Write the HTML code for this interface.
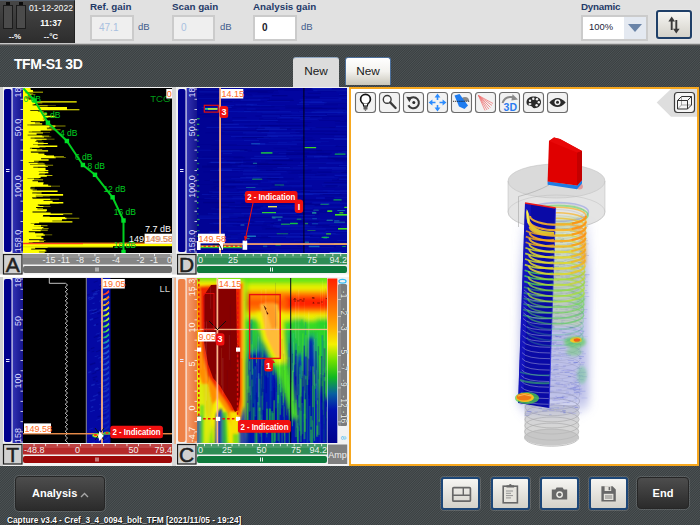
<!DOCTYPE html><html><head><meta charset="utf-8"><title>TFM-S1 3D</title><style>
*{box-sizing:border-box;margin:0;padding:0}
html,body{width:700px;height:525px;overflow:hidden;background:#464b4c;font-family:"Liberation Sans",sans-serif;}
.abs{position:absolute}
#root{position:relative;width:700px;height:525px;overflow:hidden;background:#454a4b}
.hatch{background:transparent}
#topbar{left:0;top:0;width:700px;height:43px;background:#e1e1e1}
#status{left:0;top:0;width:75px;height:43px;background:linear-gradient(#474747,#2d2d2d);border-top:1px solid #55606e;border-right:1px solid #222}
.lbl{position:absolute;font-weight:bold;font-size:9.8px;color:#1f3a68;white-space:nowrap;line-height:12px}
.inp{position:absolute;border:2px solid #cbcbcb;background:#efefef;font-size:10px;line-height:22px;color:#a8c0e0;padding-left:7px}
.db{position:absolute;font-size:9.5px;color:#3f5a8c;line-height:12px}
.tab{position:absolute;font-size:11.8px;color:#1a1a1a;text-align:center;border-radius:3px 3px 0 0;line-height:27px}
.btn{position:absolute;border:2px solid #1d4778;border-radius:3px;background:linear-gradient(#f6f5f2,#d4d2ca);box-shadow:0 0 0 1px rgba(255,255,255,.15)}
.dbtn{position:absolute;border:1px solid #262626;border-radius:4px;background:linear-gradient(#4d4d4d,#2b2b2b);color:#fff;font-weight:bold;font-size:11px;text-align:center;box-shadow:0 0 0 1px rgba(255,255,255,.12)}
.ic{position:absolute;width:20px;height:20px;top:92px;border:1px solid #6e6e6e;border-radius:3px;background:#f3f3f3}
.pl{position:absolute;width:19px;height:20px;border:1px solid #222;background:#d2d2d2;color:#222;font-size:19px;line-height:19px;text-align:center}
</style></head><body><div id="root">
<svg class="abs" style="left:0;top:0" width="700" height="525"><defs><pattern id="hp" width="7" height="7" patternUnits="userSpaceOnUse"><rect width="7" height="7" fill="#3b4042"/><path d="M0.000 -1L-9.000 8M2.333 -1L-6.667 8M4.667 -1L-4.333 8M7.000 -1L-2.000 8M9.333 -1L0.333 8M11.667 -1L2.667 8M14.000 -1L5.000 8M16.333 -1L7.333 8" stroke="#50575a" stroke-width="0.85" fill="none"/></pattern></defs><rect x="0" y="44" width="700" height="44" fill="url(#hp)"/><rect x="0" y="465" width="700" height="60" fill="url(#hp)"/></svg>
<div class="abs" id="topbar"></div>
<div class="abs" style="left:0;top:43px;width:700px;height:3px;background:linear-gradient(#f4f4f4,#8a8a8a 40%,#3a3d3e)"></div>
<div class="abs hatch" style="left:0;top:46px;width:700px;height:41px"></div>
<div class="abs" id="status">
<div class="abs" style="left:6px;top:1px;width:4px;height:3px;background:#0c0c0c"></div>
<div class="abs" style="left:3px;top:4px;width:10px;height:24px;background:#4b4b4b;border:1px solid #1c1c1c"></div>
<div class="abs" style="left:19px;top:1px;width:4px;height:3px;background:#0c0c0c"></div>
<div class="abs" style="left:16px;top:4px;width:10px;height:24px;background:#4b4b4b;border:1px solid #1c1c1c"></div>
<div class="abs" style="left:29px;top:2px;width:46px;font-size:8.6px;color:#fff;line-height:11px;white-space:nowrap">01-12-2022</div>
<div class="abs" style="left:29px;top:17px;width:44px;text-align:center;font-weight:bold;font-size:8.6px;color:#fff;line-height:11px">11:37</div>
<div class="abs" style="left:3px;top:31px;width:24px;text-align:center;font-weight:bold;font-size:8px;color:#fff;line-height:10px">--%</div>
<div class="abs" style="left:29px;top:31px;width:44px;text-align:center;font-weight:bold;font-size:8px;color:#fff;line-height:10px">--°C</div>
</div>
<div class="lbl" style="left:90px;top:1px">Ref. gain</div>
<div class="inp" style="left:90px;top:15px;width:44px;height:26px">47.1</div>
<div class="db" style="left:138px;top:21.2px">dB</div>
<div class="lbl" style="left:172px;top:1px">Scan gain</div>
<div class="inp" style="left:172px;top:15px;width:43px;height:26px">0</div>
<div class="db" style="left:220px;top:21.2px">dB</div>
<div class="lbl" style="left:253px;top:1px">Analysis gain</div>
<div class="inp" style="left:253px;top:15px;width:44px;height:26px;background:#fff;color:#1a1a2a;font-weight:bold">0</div>
<div class="db" style="left:301px;top:21.2px">dB</div>
<div class="lbl" style="left:581px;top:1px;letter-spacing:-0.25px">Dynamic</div>
<div class="abs" style="left:581px;top:15px;width:67px;height:26px;border:2px solid #cbcbcb;background:#fff"><div class="abs" style="left:6px;top:-0.8px;font-size:9.4px;line-height:22px;color:#23233a">100%</div><div class="abs" style="left:41px;top:0;width:22px;height:22px;background:#e4e9f1"></div><svg class="abs" style="left:45px;top:7px" width="14" height="8"><path d="M0 0H14L7 8Z" fill="#6a84a8"/></svg></div>
<div class="btn" style="left:656px;top:10px;width:36px;height:29px;border-width:2px;border-color:#1f3f68"><svg width="32" height="25" viewBox="0 0 32 25"><g fill="none" stroke="#3a3a3a" stroke-width="1.9"><path d="M13.7 18V8"/><path d="M18.3 8V18"/></g><path d="M10.4 9.4L13.7 4.6L17 9.4Z" fill="#3a3a3a"/><path d="M15 16.8L18.3 21.6L21.6 16.8Z" fill="#3a3a3a"/></svg></div>
<div class="abs" style="left:14px;top:56.4px;font-weight:bold;font-size:14px;color:#fff;line-height:16px;white-space:nowrap;letter-spacing:-0.45px">TFM-S1 3D</div>
<div class="tab" style="left:293px;top:57px;width:46px;height:30px;background:#dcdcdc;border-top:1px solid #8fa6c0">New</div>
<div class="tab" style="left:345px;top:57px;width:46px;height:28px;background:linear-gradient(#ffffff,#f3f2ee 50%,#c9c6ba);border:1px solid #4c6f9a;border-bottom:none">New</div>
<div class="abs" style="left:0;top:87px;width:350px;height:378px;background:#f4f4f4"></div>
<svg class="abs" style="left:0;top:87px" width="350" height="379" viewBox="0 87 350 379" font-family="Liberation Sans, sans-serif">
<defs>
<linearGradient id="gBlueR" x1="0" x2="1"><stop offset="0" stop-color="#3434b4"/><stop offset="1" stop-color="#14148c"/></linearGradient>
<linearGradient id="gOrR" x1="0" x2="1"><stop offset="0" stop-color="#f6a070"/><stop offset="1" stop-color="#e8763a"/></linearGradient>
<linearGradient id="gCbar" x1="0" x2="0" y1="0" y2="1"><stop offset="0" stop-color="#ff2000"/><stop offset=".16" stop-color="#ff6a00"/><stop offset=".3" stop-color="#ffb000"/><stop offset=".4" stop-color="#f4f000"/><stop offset=".5" stop-color="#70e000"/><stop offset=".6" stop-color="#10b820"/><stop offset=".7" stop-color="#0860a0"/><stop offset=".8" stop-color="#0010b0"/><stop offset="1" stop-color="#00008c"/></linearGradient>
<filter id="b1" x="-20%" y="-20%" width="140%" height="140%"><feGaussianBlur stdDeviation="1"/></filter>
<filter id="b2" x="-20%" y="-20%" width="140%" height="140%"><feGaussianBlur stdDeviation="2.2"/></filter>
<filter id="b3" x="-20%" y="-20%" width="140%" height="140%"><feGaussianBlur stdDeviation="4"/></filter>
<filter id="b05" x="-20%" y="-20%" width="140%" height="140%"><feGaussianBlur stdDeviation="0.5"/></filter>
<linearGradient id="gGB" x1="0" x2="0" y1="0" y2="1"><stop offset="0" stop-color="#30d428"/><stop offset=".12" stop-color="#20b858"/><stop offset=".3" stop-color="#0c58a8"/><stop offset=".45" stop-color="#0420b8"/><stop offset="1" stop-color="#0414b0"/></linearGradient>
<clipPath id="cA"><rect x="23" y="88" width="149" height="165"/></clipPath>
<clipPath id="cD"><rect x="197" y="88" width="150" height="165"/></clipPath>
<clipPath id="cT"><rect x="23" y="278" width="149" height="165"/></clipPath>
<clipPath id="cC"><rect x="197" y="278" width="130" height="165"/></clipPath>
</defs>
<rect x="0" y="87" width="350" height="379" fill="#f2f2f2"/>
<rect x="0" y="87" width="3" height="379" fill="#cfcfcf"/>
<rect x="172" y="87" width="4" height="379" fill="#d8d8d8"/>
<rect x="0" y="274.5" width="349" height="2.5" fill="#ffffff"/>
<rect x="23" y="88" width="149" height="165" fill="#000"/>
<rect x="4" y="89" width="7.5" height="163" rx="2" fill="#00008c"/>
<rect x="6" y="169.0" width="3.5" height="1" fill="#e8e8ff"/><rect x="6" y="171.0" width="3.5" height="1" fill="#e8e8ff"/>
<rect x="12" y="88" width="11" height="165" fill="url(#gBlueR)"/>
<rect x="12" y="88" width="1" height="165" fill="#ffffff" opacity=".55"/>
<text transform="translate(20.5,92.5) rotate(-90)" text-anchor="middle" font-size="9" fill="#dcdcff" >18</text>
<text transform="translate(20.5,127.5) rotate(-90)" text-anchor="middle" font-size="9" fill="#dcdcff" >50.0</text>
<text transform="translate(20.5,186.5) rotate(-90)" text-anchor="middle" font-size="9" fill="#dcdcff" >100.0</text>
<text transform="translate(20.5,241) rotate(-90)" text-anchor="middle" font-size="9" fill="#dcdcff" >158.0</text>
<rect x="20.5" y="88.6" width="2.5" height="0.9" fill="#fff" opacity=".8"/>
<rect x="20.5" y="98.8" width="2.5" height="0.9" fill="#fff" opacity=".8"/>
<rect x="20.5" y="109.0" width="2.5" height="0.9" fill="#fff" opacity=".8"/>
<rect x="20.5" y="119.2" width="2.5" height="0.9" fill="#fff" opacity=".8"/>
<rect x="20.5" y="129.3" width="2.5" height="0.9" fill="#fff" opacity=".8"/>
<rect x="20.5" y="139.5" width="2.5" height="0.9" fill="#fff" opacity=".8"/>
<rect x="20.5" y="149.7" width="2.5" height="0.9" fill="#fff" opacity=".8"/>
<rect x="20.5" y="159.9" width="2.5" height="0.9" fill="#fff" opacity=".8"/>
<rect x="20.5" y="170.1" width="2.5" height="0.9" fill="#fff" opacity=".8"/>
<rect x="20.5" y="180.3" width="2.5" height="0.9" fill="#fff" opacity=".8"/>
<rect x="20.5" y="190.5" width="2.5" height="0.9" fill="#fff" opacity=".8"/>
<rect x="20.5" y="200.7" width="2.5" height="0.9" fill="#fff" opacity=".8"/>
<rect x="20.5" y="210.8" width="2.5" height="0.9" fill="#fff" opacity=".8"/>
<rect x="20.5" y="221.0" width="2.5" height="0.9" fill="#fff" opacity=".8"/>
<rect x="20.5" y="231.2" width="2.5" height="0.9" fill="#fff" opacity=".8"/>
<rect x="20.5" y="241.4" width="2.5" height="0.9" fill="#fff" opacity=".8"/>
<rect x="20.5" y="251.6" width="2.5" height="0.9" fill="#fff" opacity=".8"/>
<rect x="23" y="254" width="149" height="10.5" fill="#858585"/>
<rect x="23" y="254" width="149" height="4" fill="#fff" opacity=".12"/>
<text x="55.5" y="263.3" font-size="9" fill="#f0f0f0" text-anchor="end">-15</text>
<text x="70" y="263.3" font-size="9" fill="#f0f0f0" text-anchor="end">-11</text>
<text x="84" y="263.3" font-size="9" fill="#f0f0f0" text-anchor="end">-8</text>
<text x="100" y="263.3" font-size="9" fill="#f0f0f0" text-anchor="end">-6</text>
<text x="120" y="263.3" font-size="9" fill="#f0f0f0" text-anchor="end">-4</text>
<text x="144.5" y="263.3" font-size="9" fill="#f0f0f0" text-anchor="end">-2</text>
<text x="158" y="263.3" font-size="9" fill="#f0f0f0" text-anchor="end">-1</text>
<text x="172" y="263.3" font-size="9" fill="#f0f0f0" text-anchor="end">0</text>
<rect x="47.5" y="254" width="0.9" height="2.2" fill="#fff" opacity=".85"/>
<rect x="62.5" y="254" width="0.9" height="2.2" fill="#fff" opacity=".85"/>
<rect x="78.5" y="254" width="0.9" height="2.2" fill="#fff" opacity=".85"/>
<rect x="94.5" y="254" width="0.9" height="2.2" fill="#fff" opacity=".85"/>
<rect x="114.5" y="254" width="0.9" height="2.2" fill="#fff" opacity=".85"/>
<rect x="139.1" y="254" width="0.9" height="2.2" fill="#fff" opacity=".85"/>
<rect x="154.1" y="254" width="0.9" height="2.2" fill="#fff" opacity=".85"/>
<rect x="170.6" y="254" width="0.9" height="2.2" fill="#fff" opacity=".85"/>
<rect x="23" y="266" width="149" height="7" rx="2" fill="#6c6c6c"/>
<rect x="95.5" y="267.5" width="1" height="4" fill="#eee"/><rect x="97.5" y="267.5" width="1" height="4" fill="#eee"/>
<rect x="3.5" y="254.5" width="18.5" height="19.5" fill="#d0d0d0" stroke="#1c1c1c" stroke-width="1.2"/>
<text x="12.7" y="271.5" font-size="21" fill="#202020" stroke="#202020" stroke-width=".5" text-anchor="middle">A</text>
<g clip-path="url(#cA)"><path d="M23 93.3h10.2v0.8h-10.2zM23 94.2h12.4v0.8h-12.4zM23 95.2h7.8v1.1h-7.8zM23 98.6h9.2v1.1h-9.2zM23 102.4h19.3v1.1h-19.3zM23 105.4h32.9v0.6h-32.9zM23 111.1h20.6v0.8h-20.6zM23 116.8h33.5v0.6h-33.5zM23 122.0h16.9v1.1h-16.9zM23 124.3h7.4v1.1h-7.4zM23 125.6h42.5v0.8h-42.5zM23 127.2h31.7v1.0h-31.7zM23 128.4h32.2v0.7h-32.2zM23 129.2h37.5v1.0h-37.5zM23 131.3h9.1v0.9h-9.1zM23 132.4h27.0v0.7h-27.0zM23 135.6h26.2v0.8h-26.2zM23 136.6h28.3v0.7h-28.3zM23 137.4h11.6v1.1h-11.6zM23 138.7h31.5v0.7h-31.5zM23 139.5h18.8v1.0h-18.8zM23 141.8h20.6v1.0h-20.6zM23 144.6h20.5v0.7h-20.5zM23 146.7h22.6v0.7h-22.6zM23 149.1h19.2v0.9h-19.2zM23 152.7h21.3v0.9h-21.3zM23 155.1h31.0v0.8h-31.0zM23 156.0h40.9v1.0h-40.9zM23 157.3h42.8v0.6h-42.8zM23 160.6h15.7v1.1h-15.7zM23 162.8h20.3v0.5h-20.3zM23 164.8h30.1v0.9h-30.1zM23 166.6h14.9v0.9h-14.9zM23 171.1h21.7v0.8h-21.7zM23 173.0h22.4v0.8h-22.4zM23 174.0h21.8v0.8h-21.8zM23 178.6h15.8v0.7h-15.8zM23 185.8h37.0v0.6h-37.0zM23 186.6h11.9v0.6h-11.9zM23 188.6h11.6v0.7h-11.6zM23 189.5h14.0v0.9h-14.0zM23 193.4h13.5v0.6h-13.5zM23 196.4h26.8v0.5h-26.8zM23 197.0h13.4v0.8h-13.4zM23 198.7h36.1v1.0h-36.1zM23 203.2h35.7v0.9h-35.7zM23 206.1h27.5v0.6h-27.5zM23 208.0h20.0v1.1h-20.0zM23 216.3h26.7v0.7h-26.7zM23 217.7h56.3v1.1h-56.3zM23 220.3h38.6v0.8h-38.6zM23 223.1h11.6v0.8h-11.6zM23 225.1h24.5v1.1h-24.5zM23 226.4h15.2v0.6h-15.2zM23 228.0h25.6v0.9h-25.6zM23 229.0h13.7v0.6h-13.7zM23 234.4h29.2v0.9h-29.2zM23 235.5h18.6v0.7h-18.6zM23 240.2h22.5v0.8h-22.5zM23 241.8h9.1v0.7h-9.1zM23 243.4h17.0v0.6h-17.0zM23 244.1h32.3v1.1h-32.3zM23 248.3h12.3v0.8h-12.3zM23 251.2h21.9v0.8h-21.9zM23 252.9h9.2v0.5h-9.2z" fill="#8c8c00"/><path d="M23 88.0h7.5v1.5h-7.5zM23 89.3h7.8v0.9h-7.8zM23 90.0h9.9v0.8h-9.9zM23 90.7h10.1v1.3h-10.1zM23 91.8h20.0v0.8h-20.0zM23 92.5h2.4v0.9h-2.4zM23 93.3h6.5v1.1h-6.5zM23 94.2h8.3v1.1h-8.3zM23 95.2h4.6v1.6h-4.6zM23 96.6h9.0v1.0h-9.0zM23 97.4h2.5v1.4h-2.5zM23 98.6h5.7v1.6h-5.7zM23 99.9h10.5v1.5h-10.5zM23 101.2h53.7v1.4h-53.7zM23 102.4h13.8v1.6h-13.8zM23 103.7h11.5v0.8h-11.5zM23 104.4h9.6v1.2h-9.6zM23 105.4h24.7v0.8h-24.7zM23 106.1h16.2v0.9h-16.2zM23 106.9h44.0v1.5h-44.0zM23 108.1h44.0v1.3h-44.0zM23 109.2h56.4v1.0h-56.4zM23 110.1h7.3v1.2h-7.3zM23 111.1h14.9v1.1h-14.9zM23 112.0h20.4v1.5h-20.4zM23 113.3h24.0v1.4h-24.0zM23 114.5h20.2v1.5h-20.2zM23 115.8h31.8v1.1h-31.8zM23 116.8h25.2v0.9h-25.2zM23 117.5h22.1v1.2h-22.1zM23 118.6h19.8v0.8h-19.8zM23 119.2h22.7v1.3h-22.7zM23 120.3h21.1v0.9h-21.1zM23 121.1h7.8v1.0h-7.8zM23 122.0h11.9v1.5h-11.9zM23 123.3h19.2v1.2h-19.2zM23 124.3h4.3v1.5h-4.3zM23 125.6h32.4v1.1h-32.4zM23 126.6h26.0v0.8h-26.0zM23 127.2h23.8v1.4h-23.8zM23 128.4h24.1v1.0h-24.1zM23 129.2h28.4v1.4h-28.4zM23 130.4h17.7v1.0h-17.7zM23 131.3h5.7v1.3h-5.7zM23 132.4h20.0v1.0h-20.0zM23 133.3h13.6v1.5h-13.6zM23 134.5h4.6v1.2h-4.6zM23 135.6h19.3v1.1h-19.3zM23 136.6h21.0v1.0h-21.0zM23 137.4h7.6v1.5h-7.6zM23 138.7h23.6v1.0h-23.6zM23 139.5h13.4v1.4h-13.4zM23 140.7h12.4v1.2h-12.4zM23 141.8h14.9v1.5h-14.9zM23 143.0h24.9v0.9h-24.9zM23 143.8h10.0v0.9h-10.0zM23 144.6h14.8v1.0h-14.8zM23 145.4h34.3v1.5h-34.3zM23 146.7h16.5v1.0h-16.5zM23 147.5h6.9v1.1h-6.9zM23 148.4h9.1v0.8h-9.1zM23 149.1h13.8v1.3h-13.8zM23 150.2h25.1v1.3h-25.1zM23 151.3h7.8v0.7h-7.8zM23 151.9h7.9v0.9h-7.9zM23 152.7h15.4v1.3h-15.4zM23 153.8h21.4v1.5h-21.4zM23 155.1h23.2v1.1h-23.2zM23 156.0h31.2v1.5h-31.2zM23 157.3h32.7v0.9h-32.7zM23 158.1h18.1v1.3h-18.1zM23 159.2h25.6v1.6h-25.6zM23 160.6h11.0v1.5h-11.0zM23 161.8h5.7v1.1h-5.7zM23 162.8h14.7v0.7h-14.7zM23 163.4h21.6v0.9h-21.6zM23 164.1h7.0v0.8h-7.0zM23 164.8h22.5v1.3h-22.5zM23 165.9h24.9v0.8h-24.9zM23 166.6h10.3v1.4h-10.3zM23 167.8h22.5v1.2h-22.5zM23 168.8h22.6v1.5h-22.6zM23 170.1h25.3v1.2h-25.3zM23 171.1h15.7v1.2h-15.7zM23 172.0h25.3v1.2h-25.3zM23 173.0h16.3v1.1h-16.3zM23 174.0h15.8v1.1h-15.8zM23 174.9h29.4v0.8h-29.4zM23 175.6h23.8v1.1h-23.8zM23 176.6h17.6v1.5h-17.6zM23 177.9h4.4v0.9h-4.4zM23 178.6h11.0v1.0h-11.0zM23 179.5h20.1v0.8h-20.1zM23 180.2h9.5v1.2h-9.5zM23 181.2h15.0v1.2h-15.0zM23 182.2h20.6v1.3h-20.6zM23 183.3h20.1v1.5h-20.1zM23 184.5h25.2v1.5h-25.2zM23 185.8h28.0v0.9h-28.0zM23 186.6h7.9v0.9h-7.9zM23 187.3h7.0v1.4h-7.0zM23 188.6h7.7v1.1h-7.7zM23 189.5h9.6v1.3h-9.6zM23 190.6h34.6v1.4h-34.6zM23 191.8h9.3v0.8h-9.3zM23 192.4h18.6v1.2h-18.6zM23 193.4h9.2v0.9h-9.2zM23 194.1h40.1v1.6h-40.1zM23 195.5h12.8v1.1h-12.8zM23 196.4h19.8v0.7h-19.8zM23 197.0h9.1v1.1h-9.1zM23 198.0h9.5v0.8h-9.5zM23 198.7h27.3v1.4h-27.3zM23 199.9h20.5v1.1h-20.5zM23 200.8h29.6v1.4h-29.6zM23 202.0h40.3v1.4h-40.3zM23 203.2h26.9v1.3h-26.9zM23 204.4h14.8v1.4h-14.8zM23 205.5h16.5v0.7h-16.5zM23 206.1h20.4v0.9h-20.4zM23 206.9h13.1v1.3h-13.1zM23 208.0h14.4v1.6h-14.4zM23 209.3h23.9v1.6h-23.9zM23 210.7h23.3v0.9h-23.3zM23 211.5h9.5v1.0h-9.5zM23 212.4h27.6v1.2h-27.6zM23 213.4h49.3v0.8h-49.3zM23 214.0h40.2v1.1h-40.2zM23 215.0h20.1v1.6h-20.1zM23 216.3h19.7v1.0h-19.7zM23 217.1h42.1v0.7h-42.1zM23 217.7h43.5v1.5h-43.5zM23 219.0h39.0v1.5h-39.0zM23 220.3h29.3v1.2h-29.3zM23 221.3h49.4v1.2h-49.4zM23 222.3h16.1v0.9h-16.1zM23 223.1h7.7v1.1h-7.7zM23 224.0h11.2v1.2h-11.2zM23 225.1h18.0v1.6h-18.0zM23 226.4h10.6v0.8h-10.6zM23 227.1h20.4v1.0h-20.4zM23 228.0h18.9v1.2h-18.9zM23 229.0h9.3v0.9h-9.3zM23 229.8h24.8v0.8h-24.8zM23 230.5h17.7v0.8h-17.7zM23 231.1h5.8v1.3h-5.8zM23 232.2h12.1v1.1h-12.1zM23 233.2h20.4v1.5h-20.4zM23 234.4h21.8v1.3h-21.8zM23 235.5h13.3v0.9h-13.3zM23 236.3h18.3v1.6h-18.3zM23 237.7h20.4v1.5h-20.4zM23 239.0h6.0v1.5h-6.0zM23 240.2h16.4v1.1h-16.4zM23 241.2h21.0v0.8h-21.0zM23 241.8h5.7v1.0h-5.7zM23 242.7h10.2v0.8h-10.2zM23 243.4h12.0v0.8h-12.0zM23 244.1h24.2v1.5h-24.2zM23 245.4h21.6v1.0h-21.6zM23 246.2h24.6v1.5h-24.6zM23 247.5h12.0v1.0h-12.0zM23 248.3h8.2v1.2h-8.2zM23 249.4h22.4v1.2h-22.4zM23 250.4h23.4v1.0h-23.4zM23 251.2h15.9v1.2h-15.9zM23 252.2h21.7v0.8h-21.7zM23 252.9h5.8v0.8h-5.8z" fill="#ffff00"/><rect x="23" y="100" width="2" height="150" fill="#ffff00" opacity=".8"/><rect x="23" y="244" width="149" height="2.2" fill="#ffff00"/><rect x="23" y="246" width="90" height="1.5" fill="#e8e800"/><rect x="23" y="242.6" width="149" height="1.3" fill="#ff8a1e"/><rect x="23" y="243.2" width="60" height="1" fill="#ff3020"/><polyline points="23.4,88.4 34.5,100.5 47.9,122.7 66.9,141 82.9,165 95,174.8 112.6,197.3 123.5,220.5 123.5,252" fill="none" stroke="#00d020" stroke-width="2" stroke-linejoin="round"/><rect x="32.3" y="98.3" width="4.4" height="4.4" fill="#00e028"/><rect x="45.699999999999996" y="120.5" width="4.4" height="4.4" fill="#00e028"/><rect x="64.7" y="138.8" width="4.4" height="4.4" fill="#00e028"/><rect x="80.7" y="162.8" width="4.4" height="4.4" fill="#00e028"/><rect x="92.8" y="172.60000000000002" width="4.4" height="4.4" fill="#00e028"/><rect x="110.39999999999999" y="195.10000000000002" width="4.4" height="4.4" fill="#00e028"/><rect x="121.3" y="218.3" width="4.4" height="4.4" fill="#00e028"/><rect x="121.3" y="249.8" width="4.4" height="4.4" fill="#00e028"/><text x="23.5" y="102" font-size="8.5" fill="#00d020">0 dB</text><text x="43" y="117.5" font-size="8.5" fill="#00d020">2 dB</text><text x="60" y="135.7" font-size="8.5" fill="#00d020">4 dB</text><text x="75" y="160" font-size="8.5" fill="#00d020">6 dB</text><text x="87.4" y="169" font-size="8.5" fill="#00d020">8 dB</text><text x="103.4" y="192" font-size="8.5" fill="#00d020">12 dB</text><text x="113.7" y="214.7" font-size="8.5" fill="#00d020">16 dB</text><text x="113.7" y="248" font-size="8.5" fill="#00d020">16 dB</text><text x="150.3" y="102.3" font-size="9.5" fill="#009a18">TCG</text><rect x="166.3" y="89" width="6" height="9.5" fill="#fff"/><text x="166.8" y="97" font-size="9" fill="#ff6a20">0</text><text x="171" y="231.5" font-size="9" fill="#fff" text-anchor="end">7.7 dB</text><text x="129" y="242" font-size="9" fill="#fff">149.</text><rect x="144.6" y="233.7" width="27.4" height="10" fill="#fff"/><text x="145.3" y="242" font-size="9" fill="#ff7a30">149.58</text><text x="146.2" y="242" font-size="9" fill="#999" opacity=".6">149.58</text></g>
<rect x="197" y="88" width="150" height="165" fill="#0205a0"/>
<rect x="178" y="89" width="7.5" height="163" rx="2" fill="#00008c"/>
<rect x="180" y="169.0" width="3.5" height="1" fill="#e8e8ff"/><rect x="180" y="171.0" width="3.5" height="1" fill="#e8e8ff"/>
<rect x="186" y="88" width="11" height="165" fill="url(#gBlueR)"/>
<rect x="186" y="88" width="1" height="165" fill="#ffffff" opacity=".55"/>
<text transform="translate(194.5,92.5) rotate(-90)" text-anchor="middle" font-size="9" fill="#dcdcff" >18</text>
<text transform="translate(194.5,127.5) rotate(-90)" text-anchor="middle" font-size="9" fill="#dcdcff" >50.0</text>
<text transform="translate(194.5,186.5) rotate(-90)" text-anchor="middle" font-size="9" fill="#dcdcff" >100.0</text>
<text transform="translate(194.5,241) rotate(-90)" text-anchor="middle" font-size="9" fill="#dcdcff" >158.0</text>
<rect x="194.5" y="88.6" width="2.5" height="0.9" fill="#fff" opacity=".8"/>
<rect x="194.5" y="98.8" width="2.5" height="0.9" fill="#fff" opacity=".8"/>
<rect x="194.5" y="109.0" width="2.5" height="0.9" fill="#fff" opacity=".8"/>
<rect x="194.5" y="119.2" width="2.5" height="0.9" fill="#fff" opacity=".8"/>
<rect x="194.5" y="129.3" width="2.5" height="0.9" fill="#fff" opacity=".8"/>
<rect x="194.5" y="139.5" width="2.5" height="0.9" fill="#fff" opacity=".8"/>
<rect x="194.5" y="149.7" width="2.5" height="0.9" fill="#fff" opacity=".8"/>
<rect x="194.5" y="159.9" width="2.5" height="0.9" fill="#fff" opacity=".8"/>
<rect x="194.5" y="170.1" width="2.5" height="0.9" fill="#fff" opacity=".8"/>
<rect x="194.5" y="180.3" width="2.5" height="0.9" fill="#fff" opacity=".8"/>
<rect x="194.5" y="190.5" width="2.5" height="0.9" fill="#fff" opacity=".8"/>
<rect x="194.5" y="200.7" width="2.5" height="0.9" fill="#fff" opacity=".8"/>
<rect x="194.5" y="210.8" width="2.5" height="0.9" fill="#fff" opacity=".8"/>
<rect x="194.5" y="221.0" width="2.5" height="0.9" fill="#fff" opacity=".8"/>
<rect x="194.5" y="231.2" width="2.5" height="0.9" fill="#fff" opacity=".8"/>
<rect x="194.5" y="241.4" width="2.5" height="0.9" fill="#fff" opacity=".8"/>
<rect x="194.5" y="251.6" width="2.5" height="0.9" fill="#fff" opacity=".8"/>
<rect x="197" y="254" width="150" height="10.5" fill="#2f8d55"/>
<rect x="197" y="254" width="150" height="4" fill="#fff" opacity=".12"/>
<text x="198" y="263.3" font-size="9" fill="#f0f0f0" text-anchor="start">0</text>
<text x="238" y="263.3" font-size="9" fill="#f0f0f0" text-anchor="end">25</text>
<text x="277" y="263.3" font-size="9" fill="#f0f0f0" text-anchor="end">50</text>
<text x="317" y="263.3" font-size="9" fill="#f0f0f0" text-anchor="end">75</text>
<text x="347" y="263.3" font-size="9" fill="#f0f0f0" text-anchor="end">94.2</text>
<rect x="197.1" y="254" width="0.9" height="2.2" fill="#fff" opacity=".85"/>
<rect x="205.0" y="254" width="0.9" height="2.2" fill="#fff" opacity=".85"/>
<rect x="213.0" y="254" width="0.9" height="2.2" fill="#fff" opacity=".85"/>
<rect x="220.9" y="254" width="0.9" height="2.2" fill="#fff" opacity=".85"/>
<rect x="228.9" y="254" width="0.9" height="2.2" fill="#fff" opacity=".85"/>
<rect x="236.9" y="254" width="0.9" height="2.2" fill="#fff" opacity=".85"/>
<rect x="244.8" y="254" width="0.9" height="2.2" fill="#fff" opacity=".85"/>
<rect x="252.8" y="254" width="0.9" height="2.2" fill="#fff" opacity=".85"/>
<rect x="260.7" y="254" width="0.9" height="2.2" fill="#fff" opacity=".85"/>
<rect x="268.7" y="254" width="0.9" height="2.2" fill="#fff" opacity=".85"/>
<rect x="276.7" y="254" width="0.9" height="2.2" fill="#fff" opacity=".85"/>
<rect x="284.6" y="254" width="0.9" height="2.2" fill="#fff" opacity=".85"/>
<rect x="292.6" y="254" width="0.9" height="2.2" fill="#fff" opacity=".85"/>
<rect x="300.5" y="254" width="0.9" height="2.2" fill="#fff" opacity=".85"/>
<rect x="308.5" y="254" width="0.9" height="2.2" fill="#fff" opacity=".85"/>
<rect x="316.4" y="254" width="0.9" height="2.2" fill="#fff" opacity=".85"/>
<rect x="324.4" y="254" width="0.9" height="2.2" fill="#fff" opacity=".85"/>
<rect x="332.4" y="254" width="0.9" height="2.2" fill="#fff" opacity=".85"/>
<rect x="340.3" y="254" width="0.9" height="2.2" fill="#fff" opacity=".85"/>
<rect x="197" y="266" width="150" height="7" rx="2" fill="#0e7a3c"/>
<rect x="270.0" y="267.5" width="1" height="4" fill="#eee"/><rect x="272.0" y="267.5" width="1" height="4" fill="#eee"/>
<rect x="177.5" y="254.5" width="18.5" height="19.5" fill="#d0d0d0" stroke="#1c1c1c" stroke-width="1.2"/>
<text x="186.7" y="271.5" font-size="21" fill="#202020" stroke="#202020" stroke-width=".5" text-anchor="middle">D</text>
<g clip-path="url(#cD)"><rect x="197" y="88" width="23" height="165" fill="#010394"/><rect x="290.4" y="210.4" width="39.8" height="1.3" fill="#00008c" opacity="0.53"/><rect x="276.5" y="226.7" width="39.0" height="0.7" fill="#0a1cbc" opacity="0.62"/><rect x="214.0" y="165.4" width="17.9" height="1.0" fill="#01018a" opacity="0.39"/><rect x="306.7" y="155.3" width="15.3" height="1.3" fill="#0818b4" opacity="0.36"/><rect x="316.6" y="110.9" width="32.7" height="0.6" fill="#0a1cbc" opacity="0.64"/><rect x="197.8" y="215.6" width="46.4" height="0.6" fill="#1028c4" opacity="0.40"/><rect x="341.2" y="177.0" width="35.1" height="0.7" fill="#00008c" opacity="0.37"/><rect x="341.8" y="151.2" width="8.9" height="0.9" fill="#1028c4" opacity="0.39"/><rect x="246.8" y="222.9" width="31.4" height="1.0" fill="#00008c" opacity="0.42"/><rect x="243.5" y="223.1" width="27.2" height="0.8" fill="#0818b4" opacity="0.47"/><rect x="223.4" y="130.3" width="45.6" height="1.4" fill="#000084" opacity="0.60"/><rect x="199.7" y="218.0" width="22.6" height="1.0" fill="#0a1cbc" opacity="0.46"/><rect x="303.2" y="190.9" width="46.2" height="0.6" fill="#1028c4" opacity="0.63"/><rect x="338.3" y="144.8" width="22.2" height="1.0" fill="#0818b4" opacity="0.34"/><rect x="309.3" y="219.5" width="42.4" height="0.5" fill="#0a1cbc" opacity="0.37"/><rect x="273.9" y="147.8" width="13.9" height="0.7" fill="#00008c" opacity="0.49"/><rect x="243.9" y="140.3" width="15.1" height="0.6" fill="#1028c4" opacity="0.55"/><rect x="243.4" y="167.8" width="36.8" height="0.6" fill="#01018a" opacity="0.49"/><rect x="257.9" y="127.2" width="31.8" height="1.2" fill="#0818b4" opacity="0.53"/><rect x="218.8" y="249.5" width="33.5" height="1.2" fill="#000084" opacity="0.59"/><rect x="216.6" y="208.7" width="46.0" height="1.1" fill="#0818b4" opacity="0.34"/><rect x="262.2" y="112.6" width="41.8" height="0.8" fill="#0818b4" opacity="0.62"/><rect x="290.1" y="115.9" width="28.9" height="1.4" fill="#00008c" opacity="0.56"/><rect x="268.9" y="136.0" width="24.2" height="0.6" fill="#0818b4" opacity="0.59"/><rect x="276.8" y="117.6" width="45.5" height="1.3" fill="#1028c4" opacity="0.33"/><rect x="237.8" y="217.0" width="42.7" height="0.8" fill="#000084" opacity="0.54"/><rect x="296.6" y="213.3" width="22.5" height="1.1" fill="#000084" opacity="0.59"/><rect x="236.7" y="249.9" width="36.6" height="1.4" fill="#000084" opacity="0.53"/><rect x="284.1" y="89.9" width="29.9" height="0.7" fill="#00008c" opacity="0.40"/><rect x="240.3" y="170.6" width="34.9" height="0.8" fill="#000084" opacity="0.53"/><rect x="307.7" y="224.7" width="22.0" height="1.3" fill="#00008c" opacity="0.46"/><rect x="251.6" y="143.2" width="13.7" height="1.4" fill="#1028c4" opacity="0.59"/><rect x="337.6" y="166.7" width="35.7" height="1.1" fill="#00008c" opacity="0.45"/><rect x="289.5" y="242.5" width="28.7" height="1.3" fill="#000084" opacity="0.52"/><rect x="313.2" y="193.1" width="36.8" height="0.5" fill="#1028c4" opacity="0.51"/><rect x="290.6" y="117.8" width="38.4" height="0.7" fill="#00008c" opacity="0.31"/><rect x="267.7" y="125.3" width="10.2" height="0.6" fill="#000084" opacity="0.64"/><rect x="269.4" y="178.5" width="24.6" height="0.8" fill="#00008c" opacity="0.51"/><rect x="285.5" y="127.2" width="44.1" height="0.5" fill="#0818b4" opacity="0.63"/><rect x="325.4" y="231.0" width="35.6" height="1.0" fill="#0a1cbc" opacity="0.49"/><rect x="242.2" y="136.7" width="28.5" height="1.4" fill="#000084" opacity="0.64"/><rect x="319.8" y="157.2" width="40.5" height="1.1" fill="#000084" opacity="0.46"/><rect x="220.5" y="151.2" width="27.1" height="0.7" fill="#1028c4" opacity="0.51"/><rect x="249.7" y="235.4" width="8.0" height="0.6" fill="#01018a" opacity="0.62"/><rect x="277.9" y="141.7" width="43.1" height="1.0" fill="#0818b4" opacity="0.45"/><rect x="231.0" y="136.1" width="46.9" height="0.8" fill="#1028c4" opacity="0.51"/><rect x="236.0" y="249.9" width="27.9" height="0.9" fill="#000084" opacity="0.63"/><rect x="243.1" y="241.4" width="13.7" height="0.5" fill="#00008c" opacity="0.52"/><rect x="263.5" y="136.4" width="39.3" height="1.2" fill="#0a1cbc" opacity="0.47"/><rect x="281.0" y="128.2" width="27.0" height="0.5" fill="#0818b4" opacity="0.39"/><rect x="220.2" y="251.2" width="19.7" height="1.0" fill="#0818b4" opacity="0.48"/><rect x="326.5" y="233.3" width="43.8" height="0.5" fill="#1028c4" opacity="0.41"/><rect x="277.0" y="143.5" width="19.9" height="1.0" fill="#0818b4" opacity="0.42"/><rect x="299.3" y="222.1" width="13.3" height="0.5" fill="#01018a" opacity="0.46"/><rect x="334.5" y="234.5" width="29.8" height="0.5" fill="#0818b4" opacity="0.51"/><rect x="300.4" y="245.3" width="34.0" height="1.3" fill="#0818b4" opacity="0.47"/><rect x="299.3" y="206.7" width="44.0" height="0.9" fill="#0a1cbc" opacity="0.41"/><rect x="197.5" y="216.5" width="31.3" height="1.1" fill="#0818b4" opacity="0.62"/><rect x="218.4" y="166.9" width="30.0" height="0.9" fill="#000084" opacity="0.49"/><rect x="260.8" y="177.3" width="9.9" height="1.2" fill="#000084" opacity="0.59"/><rect x="315.8" y="197.5" width="9.0" height="1.2" fill="#0a1cbc" opacity="0.65"/><rect x="302.2" y="96.1" width="41.7" height="0.7" fill="#00008c" opacity="0.59"/><rect x="213.7" y="235.6" width="47.8" height="1.1" fill="#0818b4" opacity="0.35"/><rect x="288.6" y="156.3" width="14.4" height="1.1" fill="#0a1cbc" opacity="0.49"/><rect x="296.0" y="211.0" width="19.2" height="1.0" fill="#0a1cbc" opacity="0.56"/><rect x="328.8" y="110.2" width="25.3" height="0.8" fill="#01018a" opacity="0.47"/><rect x="250.0" y="196.3" width="44.6" height="0.6" fill="#000084" opacity="0.35"/><rect x="291.7" y="171.5" width="44.4" height="1.0" fill="#01018a" opacity="0.38"/><rect x="206.5" y="126.9" width="41.3" height="0.8" fill="#1028c4" opacity="0.58"/><rect x="326.5" y="162.8" width="23.6" height="0.6" fill="#0a1cbc" opacity="0.53"/><rect x="209.8" y="198.2" width="11.6" height="0.6" fill="#01018a" opacity="0.46"/><rect x="255.5" y="164.3" width="46.5" height="0.6" fill="#01018a" opacity="0.31"/><rect x="305.8" y="96.9" width="14.0" height="1.4" fill="#00008c" opacity="0.58"/><rect x="309.4" y="101.8" width="44.5" height="0.9" fill="#1028c4" opacity="0.35"/><rect x="290.7" y="146.5" width="17.4" height="0.8" fill="#01018a" opacity="0.55"/><rect x="316.4" y="150.4" width="36.9" height="0.8" fill="#000084" opacity="0.58"/><rect x="262.0" y="228.5" width="28.7" height="1.0" fill="#01018a" opacity="0.38"/><rect x="224.1" y="98.4" width="9.5" height="0.7" fill="#1028c4" opacity="0.31"/><rect x="330.4" y="167.4" width="38.4" height="0.5" fill="#0818b4" opacity="0.41"/><rect x="337.2" y="240.1" width="20.9" height="0.9" fill="#1028c4" opacity="0.35"/><rect x="220.9" y="149.8" width="23.4" height="1.3" fill="#1028c4" opacity="0.49"/><rect x="213.5" y="223.0" width="38.0" height="1.1" fill="#0a1cbc" opacity="0.47"/><rect x="201.8" y="240.5" width="22.8" height="1.3" fill="#00008c" opacity="0.31"/><rect x="265.5" y="228.1" width="14.2" height="1.2" fill="#000084" opacity="0.40"/><rect x="298.2" y="208.3" width="14.5" height="0.7" fill="#0a1cbc" opacity="0.50"/><rect x="295.5" y="189.9" width="44.5" height="1.1" fill="#00008c" opacity="0.41"/><rect x="267.2" y="134.7" width="37.3" height="1.1" fill="#1028c4" opacity="0.57"/><rect x="223.3" y="122.4" width="9.8" height="1.0" fill="#00008c" opacity="0.64"/><rect x="197.9" y="98.0" width="39.2" height="0.9" fill="#0a1cbc" opacity="0.31"/><rect x="322.3" y="226.1" width="30.6" height="1.3" fill="#00008c" opacity="0.32"/><rect x="331.8" y="169.0" width="45.4" height="0.5" fill="#1028c4" opacity="0.53"/><rect x="271.6" y="217.0" width="9.9" height="1.3" fill="#0818b4" opacity="0.41"/><rect x="204.7" y="94.2" width="46.9" height="0.7" fill="#01018a" opacity="0.52"/><rect x="225.2" y="126.6" width="45.1" height="1.2" fill="#0a1cbc" opacity="0.49"/><rect x="335.2" y="186.7" width="42.3" height="0.7" fill="#0a1cbc" opacity="0.45"/><rect x="250.6" y="157.8" width="38.7" height="1.0" fill="#1028c4" opacity="0.55"/><rect x="333.9" y="138.8" width="26.0" height="1.2" fill="#1028c4" opacity="0.49"/><rect x="217.8" y="167.7" width="39.2" height="0.7" fill="#0818b4" opacity="0.41"/><rect x="216.5" y="101.5" width="17.8" height="0.6" fill="#0818b4" opacity="0.64"/><rect x="296.9" y="133.5" width="27.7" height="0.7" fill="#00008c" opacity="0.37"/><rect x="239.9" y="149.7" width="11.9" height="0.9" fill="#000084" opacity="0.43"/><rect x="312.4" y="88.0" width="19.4" height="1.3" fill="#1028c4" opacity="0.50"/><rect x="263.3" y="222.8" width="34.2" height="1.4" fill="#00008c" opacity="0.32"/><rect x="261.1" y="105.6" width="40.2" height="1.0" fill="#000084" opacity="0.32"/><rect x="222.4" y="131.3" width="35.0" height="0.8" fill="#0a1cbc" opacity="0.49"/><rect x="307.8" y="92.6" width="12.9" height="1.4" fill="#000084" opacity="0.45"/><rect x="235.7" y="245.0" width="8.7" height="1.0" fill="#1028c4" opacity="0.43"/><rect x="246.6" y="90.1" width="31.4" height="1.2" fill="#00008c" opacity="0.64"/><rect x="237.2" y="188.0" width="33.2" height="0.6" fill="#0818b4" opacity="0.58"/><rect x="214.7" y="140.3" width="44.6" height="0.9" fill="#0818b4" opacity="0.36"/><rect x="204.3" y="198.2" width="14.4" height="0.9" fill="#0818b4" opacity="0.51"/><rect x="212.5" y="222.4" width="24.8" height="0.5" fill="#0a1cbc" opacity="0.31"/><rect x="283.5" y="167.5" width="43.3" height="0.9" fill="#1028c4" opacity="0.37"/><rect x="320.3" y="138.0" width="28.6" height="1.2" fill="#1028c4" opacity="0.43"/><rect x="318.3" y="222.3" width="34.5" height="1.3" fill="#0a1cbc" opacity="0.52"/><rect x="257.1" y="111.6" width="41.3" height="0.9" fill="#0a1cbc" opacity="0.33"/><rect x="256.5" y="212.3" width="19.3" height="1.3" fill="#000084" opacity="0.47"/><rect x="267.5" y="176.1" width="11.6" height="0.7" fill="#00008c" opacity="0.30"/><rect x="273.8" y="184.8" width="15.4" height="0.9" fill="#000084" opacity="0.54"/><rect x="288.5" y="172.7" width="28.0" height="1.0" fill="#00008c" opacity="0.44"/><rect x="344.4" y="222.6" width="45.0" height="1.1" fill="#00008c" opacity="0.32"/><rect x="219.0" y="156.8" width="46.3" height="0.5" fill="#01018a" opacity="0.37"/><rect x="240.0" y="92.5" width="38.9" height="1.0" fill="#00008c" opacity="0.44"/><rect x="342.3" y="90.4" width="45.2" height="0.7" fill="#0a1cbc" opacity="0.56"/><rect x="297.5" y="245.9" width="43.9" height="1.1" fill="#00008c" opacity="0.51"/><rect x="281.3" y="167.7" width="11.7" height="0.6" fill="#000084" opacity="0.64"/><rect x="278.6" y="152.9" width="8.1" height="0.9" fill="#1028c4" opacity="0.56"/><rect x="276.3" y="122.2" width="35.1" height="0.8" fill="#000084" opacity="0.34"/><rect x="300.3" y="179.3" width="36.6" height="0.8" fill="#0a1cbc" opacity="0.37"/><rect x="242.8" y="132.2" width="32.9" height="1.3" fill="#1028c4" opacity="0.33"/><rect x="259.0" y="118.6" width="34.2" height="1.0" fill="#00008c" opacity="0.59"/><rect x="328.8" y="208.1" width="24.7" height="0.9" fill="#01018a" opacity="0.51"/><rect x="233.7" y="157.0" width="11.4" height="1.3" fill="#000084" opacity="0.37"/><rect x="201.6" y="107.1" width="30.5" height="1.0" fill="#1028c4" opacity="0.45"/><rect x="245.9" y="104.9" width="39.5" height="0.8" fill="#0a1cbc" opacity="0.32"/><rect x="269.7" y="225.7" width="46.3" height="0.8" fill="#0818b4" opacity="0.53"/><rect x="336.0" y="125.8" width="35.9" height="1.3" fill="#0818b4" opacity="0.59"/><rect x="197.2" y="198.9" width="12.5" height="0.8" fill="#000084" opacity="0.52"/><rect x="212.7" y="213.1" width="37.4" height="1.2" fill="#1028c4" opacity="0.55"/><rect x="335.6" y="245.9" width="33.0" height="1.4" fill="#0a1cbc" opacity="0.43"/><rect x="319.1" y="120.3" width="21.0" height="0.7" fill="#00008c" opacity="0.65"/><rect x="311.8" y="128.6" width="45.7" height="0.9" fill="#0a1cbc" opacity="0.34"/><rect x="286.6" y="149.8" width="35.3" height="0.9" fill="#000084" opacity="0.63"/><rect x="207.8" y="213.4" width="36.9" height="0.8" fill="#0a1cbc" opacity="0.58"/><rect x="346.9" y="211.9" width="15.8" height="0.8" fill="#1028c4" opacity="0.40"/><rect x="271.8" y="203.0" width="39.6" height="1.0" fill="#000084" opacity="0.44"/><rect x="338.5" y="98.4" width="25.3" height="0.7" fill="#1028c4" opacity="0.39"/><rect x="305.0" y="112.1" width="46.7" height="1.0" fill="#0818b4" opacity="0.64"/><rect x="278.2" y="151.7" width="45.4" height="0.6" fill="#000084" opacity="0.35"/><rect x="209.5" y="223.0" width="13.6" height="1.2" fill="#0a1cbc" opacity="0.39"/><rect x="265.7" y="151.2" width="28.7" height="0.5" fill="#1028c4" opacity="0.37"/><rect x="317.5" y="90.0" width="28.8" height="1.4" fill="#01018a" opacity="0.63"/><rect x="300.1" y="171.8" width="10.1" height="0.9" fill="#01018a" opacity="0.45"/><rect x="286.0" y="236.9" width="33.8" height="1.1" fill="#0a1cbc" opacity="0.38"/><rect x="260.2" y="207.3" width="40.5" height="1.2" fill="#0818b4" opacity="0.62"/><rect x="253.8" y="252.8" width="38.2" height="1.3" fill="#1028c4" opacity="0.41"/><rect x="225.6" y="225.6" width="11.1" height="0.8" fill="#0818b4" opacity="0.45"/><rect x="237.6" y="165.5" width="19.5" height="1.1" fill="#0a1cbc" opacity="0.57"/><rect x="310.7" y="100.7" width="35.5" height="0.5" fill="#0818b4" opacity="0.61"/><rect x="226.5" y="91.0" width="41.1" height="1.4" fill="#01018a" opacity="0.46"/><rect x="267.2" y="100.7" width="22.6" height="1.1" fill="#0a1cbc" opacity="0.36"/><rect x="261.4" y="132.0" width="38.2" height="0.8" fill="#1028c4" opacity="0.35"/><rect x="274.7" y="248.9" width="36.1" height="0.6" fill="#0a1cbc" opacity="0.34"/><rect x="256.9" y="138.1" width="44.3" height="1.0" fill="#0818b4" opacity="0.64"/><rect x="233.1" y="181.8" width="18.5" height="1.0" fill="#00008c" opacity="0.43"/><rect x="232.6" y="197.7" width="10.2" height="0.5" fill="#1028c4" opacity="0.45"/><rect x="272.6" y="188.7" width="39.7" height="0.6" fill="#01018a" opacity="0.38"/><rect x="300.8" y="233.9" width="39.1" height="1.0" fill="#0818b4" opacity="0.46"/><rect x="295.2" y="240.6" width="22.8" height="1.0" fill="#00008c" opacity="0.50"/><rect x="286.1" y="152.4" width="23.1" height="1.3" fill="#01018a" opacity="0.63"/><rect x="208.6" y="162.0" width="37.4" height="1.0" fill="#0818b4" opacity="0.33"/><rect x="274.0" y="222.9" width="22.9" height="0.9" fill="#0818b4" opacity="0.42"/><rect x="271.1" y="181.4" width="16.3" height="0.9" fill="#0a1cbc" opacity="0.56"/><rect x="214.5" y="234.1" width="23.0" height="0.8" fill="#000084" opacity="0.47"/><rect x="218.6" y="108.5" width="18.1" height="0.5" fill="#000084" opacity="0.44"/><rect x="291.3" y="128.5" width="18.5" height="1.3" fill="#0818b4" opacity="0.62"/><rect x="322.5" y="186.0" width="30.6" height="1.3" fill="#000084" opacity="0.50"/><rect x="198.4" y="95.1" width="41.0" height="0.9" fill="#00008c" opacity="0.31"/><rect x="285.3" y="107.4" width="36.8" height="1.1" fill="#01018a" opacity="0.50"/><rect x="277.5" y="202.9" width="36.2" height="1.1" fill="#01018a" opacity="0.33"/><rect x="207.0" y="163.9" width="34.0" height="1.3" fill="#00008c" opacity="0.59"/><rect x="340.5" y="200.2" width="18.9" height="0.9" fill="#000084" opacity="0.39"/><rect x="241.8" y="88.2" width="38.3" height="1.0" fill="#0818b4" opacity="0.46"/><rect x="220.3" y="123.7" width="18.5" height="1.4" fill="#1028c4" opacity="0.46"/><rect x="219.5" y="252.0" width="33.6" height="0.9" fill="#01018a" opacity="0.53"/><rect x="223.2" y="110.9" width="27.6" height="1.1" fill="#0818b4" opacity="0.63"/><rect x="248.6" y="90.8" width="25.4" height="1.0" fill="#01018a" opacity="0.49"/><rect x="332.0" y="179.6" width="34.5" height="0.9" fill="#000084" opacity="0.59"/><rect x="241.0" y="105.8" width="18.4" height="0.8" fill="#01018a" opacity="0.39"/><rect x="291.4" y="193.7" width="46.2" height="0.6" fill="#0a1cbc" opacity="0.42"/><rect x="212.4" y="192.3" width="41.8" height="1.0" fill="#0a1cbc" opacity="0.57"/><rect x="278.5" y="116.4" width="21.4" height="1.2" fill="#0a1cbc" opacity="0.44"/><rect x="246.4" y="103.8" width="10.6" height="1.1" fill="#0818b4" opacity="0.65"/><rect x="258.3" y="98.9" width="10.8" height="0.5" fill="#0a1cbc" opacity="0.58"/><rect x="331.5" y="171.6" width="12.2" height="0.9" fill="#1028c4" opacity="0.45"/><rect x="337.9" y="177.3" width="34.1" height="1.1" fill="#000084" opacity="0.63"/><rect x="338.9" y="164.9" width="12.1" height="1.2" fill="#0a1cbc" opacity="0.52"/><rect x="211.3" y="196.0" width="34.6" height="0.8" fill="#0a1cbc" opacity="0.40"/><rect x="279.6" y="248.5" width="25.1" height="0.7" fill="#01018a" opacity="0.64"/><rect x="217.1" y="196.3" width="15.2" height="0.7" fill="#00008c" opacity="0.49"/><rect x="217.9" y="96.8" width="45.6" height="0.9" fill="#0818b4" opacity="0.49"/><rect x="316.7" y="192.9" width="18.2" height="0.6" fill="#00008c" opacity="0.39"/><rect x="267.6" y="213.2" width="32.2" height="0.6" fill="#1028c4" opacity="0.46"/><rect x="339.5" y="214.9" width="25.8" height="0.7" fill="#1028c4" opacity="0.36"/><rect x="210.5" y="161.7" width="32.8" height="1.3" fill="#1028c4" opacity="0.58"/><rect x="269.3" y="137.2" width="43.4" height="1.1" fill="#00008c" opacity="0.32"/><rect x="305.1" y="108.2" width="38.6" height="0.8" fill="#01018a" opacity="0.47"/><rect x="323.4" y="232.4" width="28.9" height="1.0" fill="#01018a" opacity="0.42"/><rect x="328.5" y="109.9" width="24.8" height="0.9" fill="#1028c4" opacity="0.40"/><rect x="226.2" y="245.0" width="9.3" height="0.9" fill="#1028c4" opacity="0.41"/><rect x="325.0" y="197.1" width="24.8" height="1.3" fill="#00008c" opacity="0.46"/><rect x="334.2" y="174.5" width="21.1" height="1.1" fill="#0a1cbc" opacity="0.36"/><rect x="271.2" y="88.2" width="39.6" height="1.2" fill="#000084" opacity="0.32"/><rect x="277.3" y="167.0" width="12.8" height="0.7" fill="#1028c4" opacity="0.60"/><rect x="232.7" y="224.8" width="34.0" height="0.8" fill="#00008c" opacity="0.60"/><rect x="293.8" y="239.8" width="16.2" height="0.7" fill="#0a1cbc" opacity="0.56"/><rect x="272.6" y="159.8" width="20.3" height="1.2" fill="#000084" opacity="0.50"/><rect x="279.7" y="220.8" width="39.4" height="1.2" fill="#000084" opacity="0.49"/><rect x="197.4" y="158.2" width="26.5" height="0.7" fill="#1028c4" opacity="0.34"/><rect x="265.7" y="160.3" width="40.1" height="0.9" fill="#01018a" opacity="0.33"/><rect x="312.4" y="203.3" width="32.5" height="0.9" fill="#01018a" opacity="0.51"/><rect x="304.4" y="228.4" width="32.7" height="0.5" fill="#0818b4" opacity="0.65"/><rect x="227.2" y="98.9" width="21.6" height="0.6" fill="#000084" opacity="0.61"/><rect x="222.8" y="153.3" width="9.3" height="0.6" fill="#1028c4" opacity="0.56"/><rect x="255.3" y="115.4" width="46.1" height="1.3" fill="#00008c" opacity="0.37"/><rect x="216.8" y="236.5" width="13.9" height="1.4" fill="#000084" opacity="0.46"/><rect x="312.2" y="202.4" width="42.4" height="1.1" fill="#0a1cbc" opacity="0.60"/><rect x="334.6" y="218.9" width="24.6" height="1.1" fill="#00008c" opacity="0.50"/><rect x="320.8" y="209.3" width="37.3" height="0.7" fill="#01018a" opacity="0.39"/><rect x="299.3" y="214.9" width="15.7" height="1.0" fill="#1028c4" opacity="0.43"/><rect x="211.2" y="187.9" width="22.5" height="0.6" fill="#000084" opacity="0.36"/><rect x="278.6" y="204.4" width="45.9" height="1.2" fill="#00008c" opacity="0.49"/><rect x="340.7" y="225.6" width="21.0" height="1.3" fill="#0a1cbc" opacity="0.47"/><rect x="252.1" y="251.1" width="36.9" height="0.8" fill="#0818b4" opacity="0.39"/><rect x="282.7" y="234.2" width="21.2" height="1.4" fill="#0818b4" opacity="0.36"/><rect x="261.0" y="160.7" width="40.9" height="0.7" fill="#000084" opacity="0.34"/><rect x="274.1" y="216.1" width="27.4" height="0.6" fill="#00008c" opacity="0.51"/><rect x="211.1" y="208.5" width="24.3" height="0.8" fill="#0a1cbc" opacity="0.41"/><rect x="298.7" y="108.4" width="28.8" height="0.6" fill="#00008c" opacity="0.60"/><rect x="299.2" y="102.0" width="27.5" height="1.3" fill="#1028c4" opacity="0.46"/><rect x="219.7" y="133.9" width="26.0" height="0.6" fill="#00008c" opacity="0.48"/><rect x="329.2" y="225.2" width="31.6" height="0.6" fill="#0818b4" opacity="0.40"/><rect x="211.4" y="145.1" width="45.8" height="0.6" fill="#000084" opacity="0.60"/><rect x="250.4" y="105.1" width="21.0" height="1.2" fill="#0818b4" opacity="0.41"/><rect x="299.9" y="162.7" width="42.9" height="0.6" fill="#1028c4" opacity="0.61"/><rect x="243.4" y="163.9" width="43.6" height="1.0" fill="#01018a" opacity="0.48"/><rect x="323.9" y="182.0" width="26.1" height="1.1" fill="#01018a" opacity="0.56"/><rect x="337.1" y="108.5" width="10.5" height="0.8" fill="#0a1cbc" opacity="0.41"/><rect x="251.8" y="187.5" width="31.6" height="0.7" fill="#0818b4" opacity="0.35"/><rect x="242.8" y="181.7" width="31.6" height="1.1" fill="#0a1cbc" opacity="0.32"/><rect x="209.2" y="191.4" width="19.4" height="1.1" fill="#0a1cbc" opacity="0.45"/><rect x="241.5" y="202.6" width="29.1" height="1.4" fill="#01018a" opacity="0.60"/><rect x="323.3" y="190.2" width="41.9" height="0.7" fill="#0818b4" opacity="0.65"/><rect x="324.4" y="102.6" width="25.5" height="0.7" fill="#000084" opacity="0.63"/><rect x="338.0" y="152.4" width="42.3" height="1.4" fill="#1028c4" opacity="0.35"/><rect x="317.0" y="177.5" width="22.3" height="0.7" fill="#0818b4" opacity="0.30"/><rect x="299.5" y="140.0" width="15.8" height="0.6" fill="#01018a" opacity="0.48"/><rect x="214.8" y="150.4" width="15.8" height="0.7" fill="#0818b4" opacity="0.39"/><rect x="271.9" y="183.9" width="28.1" height="1.3" fill="#01018a" opacity="0.41"/><rect x="247.8" y="188.9" width="14.5" height="1.3" fill="#0a1cbc" opacity="0.37"/><rect x="202.0" y="166.4" width="16.2" height="1.3" fill="#000084" opacity="0.58"/><rect x="230.2" y="163.2" width="9.3" height="0.6" fill="#1028c4" opacity="0.34"/><rect x="301.0" y="107.7" width="44.0" height="1.1" fill="#00008c" opacity="0.50"/><rect x="335.3" y="145.9" width="21.5" height="0.9" fill="#000084" opacity="0.41"/><rect x="255.7" y="127.8" width="46.5" height="1.3" fill="#000084" opacity="0.46"/><rect x="231.8" y="97.1" width="37.9" height="1.2" fill="#01018a" opacity="0.38"/><rect x="296.8" y="104.0" width="27.4" height="1.1" fill="#0a1cbc" opacity="0.46"/><rect x="215.0" y="101.3" width="17.9" height="0.8" fill="#01018a" opacity="0.47"/><rect x="322.5" y="210.8" width="31.7" height="0.8" fill="#0818b4" opacity="0.42"/><rect x="237.2" y="123.6" width="41.6" height="1.0" fill="#0818b4" opacity="0.35"/><rect x="198.3" y="184.4" width="17.1" height="0.5" fill="#000084" opacity="0.33"/><rect x="232.5" y="151.2" width="33.9" height="0.7" fill="#00008c" opacity="0.35"/><rect x="311.0" y="115.9" width="32.2" height="1.1" fill="#00008c" opacity="0.51"/><rect x="230.3" y="160.5" width="20.2" height="0.7" fill="#01018a" opacity="0.37"/><rect x="266.9" y="178.0" width="11.8" height="1.2" fill="#000084" opacity="0.50"/><rect x="338.7" y="251.6" width="8.6" height="0.5" fill="#1028c4" opacity="0.51"/><rect x="295.3" y="139.5" width="19.2" height="0.9" fill="#01018a" opacity="0.51"/><rect x="247.6" y="120.0" width="29.9" height="1.1" fill="#00008c" opacity="0.34"/><rect x="336.3" y="91.4" width="27.9" height="0.8" fill="#0a1cbc" opacity="0.37"/><rect x="304.5" y="133.7" width="41.1" height="0.7" fill="#00008c" opacity="0.42"/><rect x="301.2" y="191.1" width="8.8" height="0.7" fill="#000084" opacity="0.58"/><rect x="253.8" y="221.3" width="10.7" height="0.9" fill="#1028c4" opacity="0.44"/><rect x="330.7" y="250.8" width="45.6" height="0.6" fill="#0818b4" opacity="0.51"/><rect x="203.6" y="171.3" width="34.5" height="0.8" fill="#00008c" opacity="0.36"/><rect x="261.7" y="221.4" width="35.1" height="0.6" fill="#0818b4" opacity="0.55"/><rect x="303.4" y="204.2" width="17.2" height="1.1" fill="#01018a" opacity="0.53"/><rect x="239.5" y="249.8" width="24.7" height="0.9" fill="#00008c" opacity="0.36"/><rect x="318.7" y="167.4" width="27.6" height="1.1" fill="#1028c4" opacity="0.65"/><rect x="245.6" y="205.8" width="46.3" height="0.6" fill="#0818b4" opacity="0.53"/><rect x="278.0" y="218.3" width="42.4" height="0.6" fill="#0818b4" opacity="0.54"/><rect x="298.9" y="111.1" width="12.5" height="0.5" fill="#0a1cbc" opacity="0.59"/><rect x="263.2" y="118.3" width="12.8" height="0.5" fill="#0818b4" opacity="0.49"/><rect x="297.1" y="193.2" width="42.6" height="1.1" fill="#1028c4" opacity="0.47"/><rect x="271.0" y="196.5" width="30.5" height="0.5" fill="#01018a" opacity="0.41"/><rect x="271.9" y="95.0" width="15.6" height="1.3" fill="#000084" opacity="0.64"/><rect x="231.5" y="198.5" width="25.7" height="0.6" fill="#0818b4" opacity="0.61"/><rect x="268.5" y="142.2" width="18.4" height="0.8" fill="#0a1cbc" opacity="0.41"/><rect x="315.7" y="127.2" width="19.5" height="0.7" fill="#000084" opacity="0.57"/><rect x="346.0" y="105.2" width="30.4" height="0.7" fill="#01018a" opacity="0.48"/><rect x="237.3" y="111.8" width="39.4" height="0.6" fill="#0818b4" opacity="0.41"/><rect x="218.8" y="241.5" width="16.9" height="0.8" fill="#1028c4" opacity="0.32"/><rect x="331.3" y="158.0" width="8.1" height="0.7" fill="#01018a" opacity="0.55"/><rect x="307.6" y="221.8" width="8.3" height="0.8" fill="#0818b4" opacity="0.35"/><rect x="305.0" y="191.6" width="22.5" height="1.4" fill="#000084" opacity="0.40"/><rect x="262.5" y="247.0" width="8.3" height="0.9" fill="#00008c" opacity="0.63"/><rect x="268.3" y="138.8" width="39.1" height="0.7" fill="#0818b4" opacity="0.34"/><rect x="284.5" y="193.9" width="28.3" height="0.9" fill="#1028c4" opacity="0.54"/><rect x="297.8" y="174.0" width="22.7" height="0.6" fill="#0a1cbc" opacity="0.31"/><rect x="289.6" y="156.2" width="46.4" height="0.9" fill="#01018a" opacity="0.38"/><rect x="244.0" y="169.3" width="16.4" height="1.3" fill="#0818b4" opacity="0.39"/><rect x="236.9" y="189.5" width="46.7" height="1.0" fill="#00008c" opacity="0.45"/><rect x="297.7" y="165.2" width="10.1" height="0.7" fill="#1028c4" opacity="0.45"/><rect x="322.5" y="185.9" width="16.4" height="0.7" fill="#0a1cbc" opacity="0.57"/><rect x="261.4" y="124.8" width="45.8" height="1.4" fill="#00008c" opacity="0.47"/><rect x="314.6" y="110.1" width="45.9" height="1.3" fill="#0818b4" opacity="0.34"/><rect x="267.3" y="99.9" width="26.5" height="1.1" fill="#000084" opacity="0.59"/><rect x="337.2" y="207.9" width="10.9" height="0.8" fill="#00008c" opacity="0.43"/><rect x="243.0" y="173.6" width="37.7" height="0.8" fill="#1028c4" opacity="0.60"/><rect x="254.2" y="155.8" width="32.2" height="0.9" fill="#1028c4" opacity="0.51"/><rect x="309.8" y="241.9" width="9.2" height="1.3" fill="#0a1cbc" opacity="0.57"/><rect x="333.4" y="158.5" width="29.0" height="1.3" fill="#00008c" opacity="0.55"/><rect x="261.2" y="120.1" width="16.8" height="0.6" fill="#0a1cbc" opacity="0.43"/><rect x="244.2" y="125.5" width="14.3" height="0.8" fill="#000084" opacity="0.47"/><rect x="222.6" y="233.9" width="45.1" height="0.5" fill="#0818b4" opacity="0.41"/><rect x="210.1" y="170.0" width="46.6" height="0.6" fill="#1028c4" opacity="0.51"/><rect x="272.5" y="168.5" width="35.2" height="0.9" fill="#0818b4" opacity="0.45"/><rect x="315.8" y="241.5" width="32.9" height="1.0" fill="#00008c" opacity="0.51"/><rect x="212.9" y="212.6" width="28.5" height="1.1" fill="#01018a" opacity="0.42"/><rect x="235.2" y="92.3" width="8.9" height="1.1" fill="#000084" opacity="0.63"/><rect x="300.0" y="234.9" width="12.6" height="1.0" fill="#00008c" opacity="0.65"/><rect x="224.6" y="183.8" width="33.8" height="0.8" fill="#1028c4" opacity="0.51"/><rect x="303.5" y="110.9" width="41.3" height="0.8" fill="#01018a" opacity="0.44"/><rect x="265.1" y="206.5" width="20.6" height="0.5" fill="#000084" opacity="0.53"/><rect x="267.7" y="180.7" width="34.2" height="0.7" fill="#0a1cbc" opacity="0.58"/><rect x="209.5" y="105.2" width="24.3" height="1.1" fill="#0a1cbc" opacity="0.60"/><rect x="345.0" y="169.9" width="24.9" height="0.9" fill="#000084" opacity="0.41"/><rect x="295.5" y="130.4" width="41.9" height="1.4" fill="#00008c" opacity="0.52"/><rect x="226.3" y="244.3" width="36.4" height="0.9" fill="#00008c" opacity="0.32"/><rect x="239.2" y="191.2" width="31.8" height="0.7" fill="#0a1cbc" opacity="0.44"/><rect x="216.8" y="213.3" width="16.6" height="1.1" fill="#00008c" opacity="0.33"/><rect x="309.2" y="104.5" width="28.8" height="0.7" fill="#01018a" opacity="0.64"/><rect x="231.3" y="208.6" width="25.4" height="1.0" fill="#000084" opacity="0.34"/><rect x="217.9" y="168.0" width="22.7" height="1.1" fill="#0818b4" opacity="0.31"/><rect x="217.9" y="230.4" width="33.2" height="0.6" fill="#0a1cbc" opacity="0.44"/><rect x="202.6" y="116.1" width="22.4" height="1.1" fill="#00008c" opacity="0.47"/><rect x="260.1" y="125.4" width="40.8" height="0.9" fill="#00008c" opacity="0.64"/><rect x="215.0" y="207.2" width="45.7" height="1.2" fill="#00008c" opacity="0.61"/><rect x="226.0" y="221.2" width="29.3" height="1.3" fill="#000084" opacity="0.41"/><rect x="331.5" y="155.9" width="11.2" height="0.7" fill="#0a1cbc" opacity="0.34"/><rect x="299.6" y="99.6" width="42.0" height="0.6" fill="#1028c4" opacity="0.61"/><rect x="335.1" y="160.1" width="41.4" height="0.8" fill="#01018a" opacity="0.43"/><rect x="344.4" y="119.7" width="44.2" height="1.3" fill="#00008c" opacity="0.41"/><rect x="202.3" y="156.3" width="40.3" height="0.8" fill="#01018a" opacity="0.41"/><rect x="216.0" y="187.4" width="8.5" height="0.9" fill="#1028c4" opacity="0.32"/><rect x="197.2" y="149.7" width="18.3" height="0.9" fill="#0a1cbc" opacity="0.46"/><rect x="208.7" y="231.6" width="15.0" height="1.2" fill="#0a1cbc" opacity="0.58"/><rect x="283.4" y="193.3" width="30.5" height="1.2" fill="#0a1cbc" opacity="0.59"/><rect x="268.1" y="236.1" width="41.9" height="1.0" fill="#1028c4" opacity="0.51"/><rect x="325.4" y="203.7" width="23.0" height="0.6" fill="#0a1cbc" opacity="0.55"/><rect x="267.5" y="132.7" width="22.6" height="1.3" fill="#0818b4" opacity="0.51"/><rect x="232.4" y="119.8" width="45.3" height="1.3" fill="#0a1cbc" opacity="0.56"/><rect x="255.0" y="166.2" width="35.4" height="0.7" fill="#01018a" opacity="0.47"/><rect x="199.2" y="91.2" width="37.9" height="1.3" fill="#1028c4" opacity="0.35"/><rect x="334.4" y="131.2" width="21.7" height="0.6" fill="#000084" opacity="0.39"/><rect x="227.2" y="195.3" width="29.6" height="1.1" fill="#000084" opacity="0.36"/><rect x="261.7" y="115.6" width="18.0" height="0.8" fill="#1028c4" opacity="0.64"/><rect x="339.1" y="178.6" width="47.8" height="1.2" fill="#0a1cbc" opacity="0.62"/><rect x="342.3" y="108.1" width="13.0" height="1.2" fill="#000084" opacity="0.39"/><rect x="325.4" y="244.0" width="45.2" height="0.7" fill="#0818b4" opacity="0.57"/><rect x="232.1" y="117.0" width="14.5" height="1.3" fill="#00008c" opacity="0.43"/><rect x="329.6" y="204.7" width="25.2" height="0.5" fill="#000084" opacity="0.42"/><rect x="231.1" y="106.3" width="43.4" height="1.1" fill="#00008c" opacity="0.61"/><rect x="340.0" y="201.6" width="35.5" height="1.0" fill="#000084" opacity="0.58"/><rect x="266.0" y="169.8" width="45.6" height="1.0" fill="#01018a" opacity="0.55"/><rect x="321.8" y="184.5" width="41.0" height="0.7" fill="#0818b4" opacity="0.65"/><rect x="339.6" y="95.2" width="10.9" height="0.8" fill="#000084" opacity="0.50"/><rect x="235.5" y="104.6" width="18.0" height="0.6" fill="#1028c4" opacity="0.64"/><rect x="208.7" y="101.1" width="22.9" height="0.6" fill="#01018a" opacity="0.53"/><rect x="328.7" y="207.8" width="37.2" height="0.7" fill="#0818b4" opacity="0.34"/><rect x="239.7" y="251.0" width="25.7" height="0.7" fill="#00008c" opacity="0.62"/><rect x="216.3" y="248.6" width="22.7" height="1.3" fill="#01018a" opacity="0.39"/><rect x="253.6" y="163.7" width="24.8" height="1.3" fill="#01018a" opacity="0.35"/><rect x="301.0" y="101.1" width="21.3" height="1.1" fill="#0a1cbc" opacity="0.54"/><rect x="291.8" y="190.1" width="42.5" height="1.0" fill="#0a1cbc" opacity="0.50"/><rect x="280.3" y="117.1" width="29.6" height="0.9" fill="#1028c4" opacity="0.31"/><rect x="271.7" y="98.7" width="21.3" height="0.6" fill="#00008c" opacity="0.45"/><rect x="198.4" y="114.0" width="12.0" height="1.2" fill="#000084" opacity="0.61"/><rect x="252.9" y="176.8" width="30.5" height="1.1" fill="#1028c4" opacity="0.52"/><rect x="224.3" y="237.7" width="36.1" height="0.7" fill="#0818b4" opacity="0.47"/><rect x="264.7" y="127.4" width="15.0" height="1.4" fill="#0a1cbc" opacity="0.60"/><rect x="223.1" y="218.0" width="31.6" height="0.5" fill="#000084" opacity="0.64"/><rect x="228.1" y="204.6" width="23.9" height="1.4" fill="#01018a" opacity="0.52"/><rect x="313.1" y="89.9" width="33.4" height="0.7" fill="#1028c4" opacity="0.62"/><rect x="304.6" y="163.1" width="21.3" height="0.6" fill="#01018a" opacity="0.55"/><rect x="345.3" y="217.1" width="36.6" height="0.9" fill="#00008c" opacity="0.54"/><rect x="250.5" y="163.8" width="31.4" height="1.2" fill="#000084" opacity="0.55"/><rect x="337.3" y="112.4" width="12.2" height="1.1" fill="#0818b4" opacity="0.60"/><rect x="230.8" y="241.8" width="42.3" height="1.1" fill="#0818b4" opacity="0.45"/><rect x="270.6" y="153.3" width="26.6" height="0.8" fill="#0818b4" opacity="0.30"/><rect x="346.9" y="217.5" width="9.1" height="1.3" fill="#000084" opacity="0.42"/><rect x="330.3" y="243.2" width="10.8" height="1.1" fill="#0818b4" opacity="0.38"/><rect x="209.7" y="179.6" width="32.1" height="1.2" fill="#0818b4" opacity="0.39"/><rect x="316.5" y="152.6" width="15.3" height="1.2" fill="#01018a" opacity="0.60"/><rect x="334.9" y="121.1" width="29.2" height="0.6" fill="#000084" opacity="0.52"/><rect x="261.7" y="226.6" width="13.6" height="0.7" fill="#00008c" opacity="0.54"/><rect x="236.8" y="200.8" width="32.6" height="0.8" fill="#00008c" opacity="0.32"/><rect x="217.1" y="198.2" width="31.1" height="1.3" fill="#1028c4" opacity="0.30"/><rect x="243.9" y="111.0" width="47.0" height="0.8" fill="#1028c4" opacity="0.42"/><rect x="256.4" y="128.7" width="30.7" height="1.4" fill="#1028c4" opacity="0.48"/><rect x="295.3" y="199.5" width="40.4" height="1.1" fill="#01018a" opacity="0.41"/><rect x="334.3" y="246.6" width="34.8" height="0.7" fill="#01018a" opacity="0.42"/><rect x="327.5" y="157.9" width="35.7" height="1.2" fill="#00008c" opacity="0.46"/><rect x="340.1" y="227.1" width="28.7" height="0.9" fill="#0a1cbc" opacity="0.36"/><rect x="338.6" y="233.8" width="11.3" height="0.5" fill="#01018a" opacity="0.34"/><rect x="199.7" y="144.1" width="37.1" height="0.9" fill="#00008c" opacity="0.40"/><rect x="285.9" y="153.7" width="44.3" height="1.2" fill="#000084" opacity="0.56"/><rect x="211.6" y="121.5" width="39.3" height="1.0" fill="#00008c" opacity="0.31"/><rect x="228.3" y="181.8" width="11.5" height="0.7" fill="#00008c" opacity="0.57"/><rect x="280.3" y="228.4" width="45.5" height="1.3" fill="#0a1cbc" opacity="0.46"/><rect x="345.8" y="109.4" width="45.7" height="1.3" fill="#000084" opacity="0.39"/><rect x="226.7" y="160.2" width="14.8" height="1.3" fill="#01018a" opacity="0.51"/><rect x="283.5" y="218.3" width="28.1" height="1.1" fill="#1028c4" opacity="0.38"/><rect x="325.5" y="185.2" width="39.3" height="1.4" fill="#01018a" opacity="0.59"/><rect x="242.8" y="171.0" width="43.9" height="1.0" fill="#0818b4" opacity="0.48"/><rect x="201.8" y="193.9" width="47.7" height="1.1" fill="#0818b4" opacity="0.58"/><rect x="205.6" y="132.4" width="18.8" height="0.8" fill="#00008c" opacity="0.61"/><rect x="314.3" y="207.7" width="36.8" height="0.7" fill="#0818b4" opacity="0.61"/><rect x="325.7" y="113.9" width="38.0" height="0.7" fill="#000084" opacity="0.59"/><rect x="257.7" y="92.0" width="15.1" height="1.1" fill="#00008c" opacity="0.52"/><rect x="301.8" y="153.2" width="24.7" height="0.7" fill="#00008c" opacity="0.57"/><rect x="281.4" y="182.6" width="8.1" height="0.7" fill="#0818b4" opacity="0.55"/><rect x="311.4" y="111.5" width="32.0" height="1.1" fill="#1028c4" opacity="0.54"/><rect x="327.3" y="192.8" width="25.1" height="0.9" fill="#0818b4" opacity="0.35"/><rect x="319.8" y="194.0" width="21.7" height="1.1" fill="#000084" opacity="0.55"/><rect x="243.1" y="159.8" width="11.8" height="1.0" fill="#01018a" opacity="0.57"/><rect x="241.0" y="207.2" width="12.7" height="1.0" fill="#000084" opacity="0.64"/><rect x="335.3" y="123.5" width="9.8" height="0.7" fill="#01018a" opacity="0.36"/><rect x="246.7" y="108.5" width="8.9" height="1.4" fill="#0a1cbc" opacity="0.43"/><rect x="235.7" y="137.2" width="8.1" height="1.1" fill="#000084" opacity="0.32"/><rect x="278.4" y="89.2" width="19.9" height="1.1" fill="#00008c" opacity="0.36"/><rect x="258.0" y="244.3" width="20.6" height="0.6" fill="#1028c4" opacity="0.58"/><rect x="326.9" y="113.8" width="25.1" height="0.7" fill="#1028c4" opacity="0.48"/><rect x="235.4" y="162.7" width="32.8" height="0.9" fill="#000084" opacity="0.54"/><rect x="273.3" y="221.8" width="28.3" height="0.7" fill="#00008c" opacity="0.58"/><rect x="338.3" y="221.2" width="15.7" height="1.1" fill="#000084" opacity="0.43"/><rect x="341.2" y="172.1" width="22.7" height="0.9" fill="#00008c" opacity="0.62"/><rect x="343.7" y="218.3" width="35.6" height="1.0" fill="#01018a" opacity="0.45"/><rect x="302.8" y="145.4" width="33.5" height="0.7" fill="#0818b4" opacity="0.53"/><rect x="252.5" y="95.3" width="19.2" height="1.1" fill="#0818b4" opacity="0.60"/><rect x="317.9" y="247.5" width="15.8" height="0.6" fill="#1028c4" opacity="0.45"/><rect x="291.7" y="141.0" width="37.1" height="0.9" fill="#0818b4" opacity="0.37"/><rect x="232.3" y="186.1" width="36.1" height="0.5" fill="#01018a" opacity="0.31"/><rect x="298.6" y="176.4" width="36.0" height="1.1" fill="#0818b4" opacity="0.60"/><rect x="246.6" y="94.9" width="26.8" height="0.5" fill="#00008c" opacity="0.63"/><rect x="208.3" y="192.9" width="36.6" height="0.8" fill="#00008c" opacity="0.42"/><rect x="305.9" y="193.5" width="16.8" height="1.3" fill="#0818b4" opacity="0.36"/><rect x="334.8" y="175.0" width="34.5" height="1.1" fill="#0a1cbc" opacity="0.59"/><rect x="274.9" y="184.6" width="26.5" height="0.7" fill="#0a1cbc" opacity="0.31"/><rect x="202.0" y="165.5" width="11.2" height="0.9" fill="#000084" opacity="0.50"/><rect x="299.6" y="119.2" width="18.1" height="0.7" fill="#1028c4" opacity="0.43"/><rect x="289.5" y="215.5" width="25.1" height="0.7" fill="#0818b4" opacity="0.56"/><rect x="229.2" y="244.3" width="36.7" height="0.6" fill="#00008c" opacity="0.45"/><rect x="272.9" y="225.5" width="36.9" height="0.9" fill="#1028c4" opacity="0.47"/><rect x="288.4" y="158.9" width="28.7" height="0.8" fill="#00008c" opacity="0.53"/><rect x="337.5" y="185.3" width="27.3" height="1.3" fill="#1028c4" opacity="0.34"/><rect x="278.7" y="186.1" width="12.6" height="1.0" fill="#01018a" opacity="0.31"/><rect x="306.9" y="156.1" width="40.8" height="1.3" fill="#0a1cbc" opacity="0.56"/><rect x="213.0" y="181.4" width="47.7" height="1.3" fill="#000084" opacity="0.55"/><rect x="235.9" y="205.8" width="27.2" height="1.4" fill="#01018a" opacity="0.62"/><rect x="240.2" y="176.9" width="20.2" height="1.3" fill="#1028c4" opacity="0.50"/><rect x="211.1" y="149.3" width="36.2" height="1.0" fill="#000084" opacity="0.57"/><rect x="311.0" y="177.6" width="44.0" height="0.7" fill="#0a1cbc" opacity="0.46"/><rect x="222.2" y="205.6" width="24.7" height="0.8" fill="#0a1cbc" opacity="0.40"/><rect x="208.6" y="193.9" width="37.5" height="0.5" fill="#000084" opacity="0.43"/><rect x="315.0" y="174.7" width="11.2" height="0.7" fill="#000084" opacity="0.51"/><rect x="334.3" y="197.3" width="46.7" height="0.9" fill="#0a1cbc" opacity="0.57"/><rect x="338.8" y="93.9" width="22.6" height="0.6" fill="#0a1cbc" opacity="0.61"/><rect x="216.9" y="101.5" width="47.2" height="0.7" fill="#000084" opacity="0.46"/><rect x="319.5" y="96.7" width="38.6" height="0.7" fill="#0a1cbc" opacity="0.55"/><rect x="280.2" y="185.2" width="31.9" height="1.4" fill="#0a1cbc" opacity="0.49"/><rect x="218.3" y="206.4" width="10.8" height="1.2" fill="#000084" opacity="0.62"/><rect x="310.2" y="232.4" width="16.3" height="1.1" fill="#1028c4" opacity="0.47"/><rect x="261.6" y="113.7" width="29.9" height="1.0" fill="#00008c" opacity="0.48"/><rect x="326.3" y="208.5" width="14.7" height="0.5" fill="#00008c" opacity="0.37"/><rect x="240.6" y="99.5" width="20.0" height="1.0" fill="#1028c4" opacity="0.50"/><rect x="255.7" y="94.3" width="12.7" height="0.5" fill="#00008c" opacity="0.32"/><rect x="258.7" y="243.9" width="30.1" height="0.6" fill="#00008c" opacity="0.44"/><rect x="323.8" y="211.6" width="30.2" height="0.5" fill="#01018a" opacity="0.40"/><rect x="281.3" y="114.9" width="45.5" height="1.0" fill="#1028c4" opacity="0.38"/><rect x="324.8" y="134.0" width="47.7" height="0.9" fill="#01018a" opacity="0.42"/><rect x="267.4" y="205.3" width="47.2" height="1.0" fill="#0818b4" opacity="0.54"/><rect x="268.6" y="121.1" width="13.0" height="0.6" fill="#01018a" opacity="0.39"/><rect x="204.6" y="89.0" width="35.6" height="0.8" fill="#0818b4" opacity="0.42"/><rect x="252.2" y="237.1" width="18.3" height="1.1" fill="#01018a" opacity="0.56"/><rect x="240.4" y="233.5" width="40.2" height="0.6" fill="#1028c4" opacity="0.61"/><rect x="202.7" y="237.6" width="35.2" height="1.2" fill="#0818b4" opacity="0.45"/><rect x="218.0" y="169.4" width="13.9" height="1.4" fill="#1028c4" opacity="0.61"/><rect x="231.1" y="178.2" width="28.3" height="0.8" fill="#0a1cbc" opacity="0.40"/><rect x="313.9" y="156.0" width="13.9" height="1.4" fill="#1028c4" opacity="0.38"/><rect x="244.2" y="109.5" width="35.3" height="1.0" fill="#00008c" opacity="0.63"/><rect x="235.1" y="206.0" width="16.5" height="0.5" fill="#0a1cbc" opacity="0.65"/><rect x="223.6" y="176.6" width="22.3" height="0.8" fill="#00008c" opacity="0.42"/><rect x="290.0" y="232.9" width="45.8" height="1.1" fill="#0a1cbc" opacity="0.50"/><rect x="225.3" y="180.3" width="9.7" height="1.3" fill="#00008c" opacity="0.50"/><rect x="268.1" y="153.5" width="38.0" height="1.0" fill="#00008c" opacity="0.57"/><rect x="255.1" y="143.7" width="41.7" height="1.0" fill="#1028c4" opacity="0.38"/><rect x="227.9" y="230.5" width="20.5" height="1.2" fill="#0a1cbc" opacity="0.51"/><rect x="203.1" y="201.9" width="31.7" height="1.3" fill="#000084" opacity="0.64"/><rect x="266.9" y="192.7" width="41.0" height="0.6" fill="#0a1cbc" opacity="0.41"/><rect x="334.3" y="135.6" width="11.4" height="1.3" fill="#0a1cbc" opacity="0.46"/><rect x="301.5" y="211.9" width="41.5" height="0.7" fill="#00008c" opacity="0.56"/><rect x="213.9" y="186.2" width="21.9" height="1.4" fill="#01018a" opacity="0.65"/><rect x="317.7" y="171.6" width="43.7" height="1.3" fill="#01018a" opacity="0.40"/><rect x="296.5" y="199.6" width="33.9" height="0.5" fill="#01018a" opacity="0.56"/><rect x="346.0" y="243.6" width="39.1" height="1.3" fill="#01018a" opacity="0.41"/><rect x="249.3" y="212.8" width="47.0" height="1.0" fill="#1028c4" opacity="0.59"/><rect x="244.2" y="189.9" width="45.5" height="0.5" fill="#0a1cbc" opacity="0.55"/><rect x="209.5" y="179.9" width="42.5" height="0.5" fill="#0a1cbc" opacity="0.35"/><rect x="249.5" y="213.5" width="33.7" height="0.9" fill="#0a1cbc" opacity="0.56"/><rect x="204.5" y="180.2" width="35.8" height="0.6" fill="#000084" opacity="0.54"/><rect x="280.9" y="223.6" width="9.0" height="1.3" rx=".5" fill="#18a850" opacity="0.78"/><rect x="245.0" y="238.0" width="4.7" height="1.2" rx=".5" fill="#2090a0" opacity="0.79"/><rect x="250.9" y="143.2" width="9.3" height="1.0" rx=".5" fill="#1878c0" opacity="0.61"/><rect x="260.9" y="152.0" width="11.6" height="1.7" rx=".5" fill="#18a850" opacity="0.99"/><rect x="339.4" y="211.9" width="4.0" height="1.6" rx=".5" fill="#40d820" opacity="0.82"/><rect x="312.0" y="218.3" width="5.1" height="0.9" rx=".5" fill="#1878c0" opacity="0.65"/><rect x="304.8" y="222.8" width="3.3" height="1.5" rx=".5" fill="#40d820" opacity="0.55"/><rect x="246.7" y="235.4" width="9.3" height="1.5" rx=".5" fill="#1878c0" opacity="0.94"/><rect x="252.1" y="178.6" width="10.2" height="1.4" rx=".5" fill="#18a850" opacity="0.61"/><rect x="277.6" y="219.6" width="3.8" height="0.8" rx=".5" fill="#1878c0" opacity="0.90"/><rect x="344.2" y="206.8" width="11.8" height="1.2" rx=".5" fill="#40d820" opacity="0.96"/><rect x="289.2" y="197.0" width="3.3" height="1.7" rx=".5" fill="#18a850" opacity="0.69"/><rect x="334.0" y="221.6" width="11.1" height="1.3" rx=".5" fill="#2090a0" opacity="0.51"/><rect x="268.2" y="199.0" width="10.4" height="1.0" rx=".5" fill="#1878c0" opacity="0.67"/><rect x="289.9" y="222.7" width="8.0" height="1.5" rx=".5" fill="#10c840" opacity="0.98"/><rect x="276.5" y="233.3" width="11.8" height="0.9" rx=".5" fill="#18a850" opacity="0.65"/><rect x="326.5" y="219.7" width="6.4" height="1.0" rx=".5" fill="#2090a0" opacity="0.94"/><rect x="245.8" y="187.2" width="9.8" height="0.9" rx=".5" fill="#2090a0" opacity="0.81"/><rect x="308.7" y="245.8" width="10.8" height="1.5" rx=".5" fill="#1878c0" opacity="0.83"/><rect x="342.0" y="246.1" width="4.0" height="0.9" rx=".5" fill="#10c840" opacity="0.73"/><rect x="326.0" y="233.2" width="5.1" height="1.3" rx=".5" fill="#40d820" opacity="0.89"/><rect x="243.7" y="194.5" width="6.8" height="0.9" rx=".5" fill="#18a850" opacity="0.69"/><rect x="334.7" y="153.6" width="10.8" height="1.2" rx=".5" fill="#10c840" opacity="0.80"/><rect x="304.7" y="241.5" width="4.4" height="1.6" rx=".5" fill="#2090a0" opacity="0.65"/><rect x="320.4" y="203.4" width="9.1" height="1.0" rx=".5" fill="#1878c0" opacity="0.63"/><rect x="334.0" y="220.1" width="5.5" height="1.5" rx=".5" fill="#1878c0" opacity="0.50"/><rect x="313.2" y="209.7" width="5.7" height="0.9" rx=".5" fill="#2090a0" opacity="0.93"/><rect x="272.2" y="217.4" width="3.4" height="1.2" rx=".5" fill="#2090a0" opacity="0.87"/><rect x="304.5" y="147.1" width="11.7" height="1.1" rx=".5" fill="#40d820" opacity="0.98"/><rect x="323.4" y="236.7" width="3.9" height="1.7" rx=".5" fill="#1878c0" opacity="0.78"/><rect x="307.2" y="230.0" width="8.5" height="0.8" rx=".5" fill="#40d820" opacity="0.57"/><rect x="296.7" y="218.4" width="4.7" height="1.6" rx=".5" fill="#18a850" opacity="0.56"/><rect x="271.7" y="216.2" width="10.9" height="1.7" rx=".5" fill="#2090a0" opacity="0.57"/><rect x="274.5" y="184.4" width="9.7" height="1.1" rx=".5" fill="#18a850" opacity="0.72"/><rect x="252.9" y="162.8" width="4.2" height="1.0" rx=".5" fill="#2090a0" opacity="0.81"/><rect x="333.4" y="199.2" width="8.3" height="1.4" rx=".5" fill="#10c840" opacity="0.80"/><rect x="275.4" y="243.7" width="5.4" height="1.7" rx=".5" fill="#10c840" opacity="0.81"/><rect x="327.2" y="210.2" width="5.1" height="1.7" rx=".5" fill="#40d820" opacity="0.94"/><rect x="262.2" y="197.1" width="10.5" height="1.2" rx=".5" fill="#40d820" opacity="0.72"/><rect x="329.6" y="251.9" width="11.8" height="1.5" rx=".5" fill="#1878c0" opacity="0.86"/><rect x="321.5" y="236.7" width="7.6" height="1.4" rx=".5" fill="#10c840" opacity="0.83"/><rect x="320.3" y="203.9" width="8.3" height="1.0" rx=".5" fill="#18a850" opacity="0.57"/><rect x="337.1" y="210.1" width="8.2" height="0.9" rx=".5" fill="#1878c0" opacity="0.82"/><rect x="262.9" y="245.6" width="4.4" height="1.6" rx=".5" fill="#1878c0" opacity="0.52"/><rect x="240.4" y="224.4" width="4.1" height="1.0" rx=".5" fill="#1878c0" opacity="0.95"/><rect x="312.0" y="212.0" width="4.4" height="1.7" rx=".5" fill="#2090a0" opacity="0.87"/><rect x="333.9" y="243.2" width="11.5" height="1.7" rx=".5" fill="#18a850" opacity="0.71"/><rect x="311.7" y="223.3" width="6.7" height="0.9" rx=".5" fill="#1878c0" opacity="0.60"/><rect x="268" y="206" width="9" height="1.4" fill="#e8e050"/><rect x="262" y="212" width="14" height="1.2" fill="#30d030"/><rect x="335" y="214" width="12" height="1.6" fill="#40e020"/><rect x="338" y="228" width="9" height="1.6" fill="#40e020"/><rect x="197" y="118.0" width="2.6" height="1.4" fill="#30c040" opacity="0.80"/><rect x="197" y="123.6" width="2.3" height="1.4" fill="#30c040" opacity="0.85"/><rect x="197" y="129.2" width="1.5" height="1.4" fill="#30c040" opacity="0.55"/><rect x="197" y="134.8" width="2.2" height="1.4" fill="#30c040" opacity="0.89"/><rect x="197" y="140.4" width="1.6" height="1.4" fill="#30c040" opacity="0.52"/><rect x="197" y="146.0" width="2.8" height="1.4" fill="#30c040" opacity="0.45"/><rect x="197" y="151.6" width="1.4" height="1.4" fill="#30c040" opacity="0.50"/><rect x="197" y="157.2" width="1.2" height="1.4" fill="#30c040" opacity="0.43"/><rect x="197" y="162.8" width="2.2" height="1.4" fill="#30c040" opacity="0.58"/><rect x="197" y="168.4" width="1.4" height="1.4" fill="#30c040" opacity="0.99"/><rect x="197" y="174.0" width="1.5" height="1.4" fill="#30c040" opacity="0.55"/><rect x="197" y="179.6" width="1.8" height="1.4" fill="#30c040" opacity="0.50"/><rect x="197" y="185.2" width="2.3" height="1.4" fill="#30c040" opacity="0.67"/><rect x="197" y="190.8" width="2.4" height="1.4" fill="#30c040" opacity="0.65"/><rect x="197" y="196.4" width="1.6" height="1.4" fill="#30c040" opacity="0.85"/><rect x="197" y="202.0" width="1.4" height="1.4" fill="#30c040" opacity="0.91"/><rect x="197" y="207.6" width="1.5" height="1.4" fill="#30c040" opacity="0.74"/><rect x="197" y="213.2" width="1.5" height="1.4" fill="#30c040" opacity="0.49"/><rect x="197" y="218.8" width="2.6" height="1.4" fill="#30c040" opacity="0.80"/><rect x="197" y="224.4" width="2.0" height="1.4" fill="#30c040" opacity="0.72"/><rect x="197" y="230.0" width="2.4" height="1.4" fill="#30c040" opacity="0.46"/><rect x="197" y="235.6" width="1.8" height="1.4" fill="#30c040" opacity="0.70"/><rect x="205" y="108" width="13" height="1.8" fill="#20c8a0"/><rect x="208" y="108.3" width="9" height="1.3" fill="#f0f020"/><rect x="303.4" y="88" width="1" height="165" fill="#000018"/><rect x="219.3" y="88" width="1.6" height="165" fill="#ffd2b0"/><rect x="219.7" y="88" width=".8" height="165" fill="#ff8a3c"/><rect x="220" y="243.3" width="127" height="1.5" fill="#ffc8a0"/><rect x="220" y="243.6" width="127" height=".9" fill="#ff8a3c"/><rect x="200" y="245.5" width="42" height="1.6" fill="#e8e020"/><rect x="200" y="247" width="42" height="1.2" fill="#30c030"/><path d="M199 246.2H243" stroke="#e01010" stroke-width="1.3" stroke-dasharray="2.5 2"/><rect x="197" y="241" width="3.5" height="9" fill="#fff"/><rect x="219" y="242" width="4" height="8" fill="#fff"/><path d="M213 244l6 0l3 6" stroke="#111" fill="none" stroke-width="1"/><rect x="242.6" y="240.6" width="4.6" height="9.2" fill="#fff"/><rect x="220.8" y="89" width="22.5" height="9.5" fill="#fff"/><text x="221.4" y="97" font-size="9" fill="#ff6a20">14.15</text><rect x="198" y="233.7" width="26.8" height="9.7" fill="#fff"/><text x="198.5" y="241.8" font-size="9" fill="#ff6a20">149.58</text><rect x="204.3" y="105.3" width="14" height="6.8" fill="none" stroke="#e01010" stroke-width="1.2"/><rect x="219.6" y="106" width="8.6" height="12" rx="2.5" fill="#f01010"/><text x="223.9" y="114.8" font-size="9" font-weight="bold" fill="#fff" text-anchor="middle">3</text><path d="M253 203L245.2 240" stroke="#f01010" stroke-width="1.1"/><path d="M245 241.5l-1-5.5l3.6 0.8z" fill="#f01010"/><rect x="294.7" y="199.4" width="8.4" height="13.6" rx="3" fill="#f01010"/><text x="299" y="210" font-size="9" font-weight="bold" fill="#fff" text-anchor="middle">I</text><rect x="244.9" y="191" width="52.6" height="12" rx="2.5" fill="#f01010"/><text x="271.2" y="200.2" font-size="8.8" font-weight="bold" fill="#fff" text-anchor="middle" textLength="48" lengthAdjust="spacingAndGlyphs">2 - Indication</text></g>
<rect x="23" y="278" width="149" height="165" fill="#000"/>
<rect x="4" y="279" width="7.5" height="163" rx="2" fill="#00008c"/>
<rect x="6" y="359.0" width="3.5" height="1" fill="#e8e8ff"/><rect x="6" y="361.0" width="3.5" height="1" fill="#e8e8ff"/>
<rect x="12" y="278" width="11" height="165" fill="url(#gBlueR)"/>
<rect x="12" y="278" width="1" height="165" fill="#ffffff" opacity=".55"/>
<text transform="translate(20.5,282.5) rotate(-90)" text-anchor="middle" font-size="9" fill="#dcdcff" >18</text>
<text transform="translate(20.5,321) rotate(-90)" text-anchor="middle" font-size="9" fill="#dcdcff" >50</text>
<text transform="translate(20.5,381) rotate(-90)" text-anchor="middle" font-size="9" fill="#dcdcff" >100</text>
<text transform="translate(20.5,435.5) rotate(-90)" text-anchor="middle" font-size="9" fill="#dcdcff" >158</text>
<rect x="20.5" y="278.6" width="2.5" height="0.9" fill="#fff" opacity=".8"/>
<rect x="20.5" y="288.8" width="2.5" height="0.9" fill="#fff" opacity=".8"/>
<rect x="20.5" y="299.0" width="2.5" height="0.9" fill="#fff" opacity=".8"/>
<rect x="20.5" y="309.2" width="2.5" height="0.9" fill="#fff" opacity=".8"/>
<rect x="20.5" y="319.4" width="2.5" height="0.9" fill="#fff" opacity=".8"/>
<rect x="20.5" y="329.5" width="2.5" height="0.9" fill="#fff" opacity=".8"/>
<rect x="20.5" y="339.7" width="2.5" height="0.9" fill="#fff" opacity=".8"/>
<rect x="20.5" y="349.9" width="2.5" height="0.9" fill="#fff" opacity=".8"/>
<rect x="20.5" y="360.1" width="2.5" height="0.9" fill="#fff" opacity=".8"/>
<rect x="20.5" y="370.3" width="2.5" height="0.9" fill="#fff" opacity=".8"/>
<rect x="20.5" y="380.5" width="2.5" height="0.9" fill="#fff" opacity=".8"/>
<rect x="20.5" y="390.7" width="2.5" height="0.9" fill="#fff" opacity=".8"/>
<rect x="20.5" y="400.9" width="2.5" height="0.9" fill="#fff" opacity=".8"/>
<rect x="20.5" y="411.0" width="2.5" height="0.9" fill="#fff" opacity=".8"/>
<rect x="20.5" y="421.2" width="2.5" height="0.9" fill="#fff" opacity=".8"/>
<rect x="20.5" y="431.4" width="2.5" height="0.9" fill="#fff" opacity=".8"/>
<rect x="20.5" y="441.6" width="2.5" height="0.9" fill="#fff" opacity=".8"/>
<rect x="23" y="444" width="149" height="10.5" fill="#b62a2a"/>
<rect x="23" y="444" width="149" height="4" fill="#fff" opacity=".12"/>
<text x="24" y="453.3" font-size="9" fill="#f0f0f0" text-anchor="start">-48.8</text>
<text x="80" y="453.3" font-size="9" fill="#f0f0f0" text-anchor="end">0</text>
<text x="138.5" y="453.3" font-size="9" fill="#f0f0f0" text-anchor="end">50</text>
<text x="172" y="453.3" font-size="9" fill="#f0f0f0" text-anchor="end">79.4</text>
<rect x="33.6" y="444" width="0.9" height="2.2" fill="#fff" opacity=".85"/>
<rect x="45.2" y="444" width="0.9" height="2.2" fill="#fff" opacity=".85"/>
<rect x="56.8" y="444" width="0.9" height="2.2" fill="#fff" opacity=".85"/>
<rect x="68.5" y="444" width="0.9" height="2.2" fill="#fff" opacity=".85"/>
<rect x="80.0" y="444" width="0.9" height="2.2" fill="#fff" opacity=".85"/>
<rect x="91.6" y="444" width="0.9" height="2.2" fill="#fff" opacity=".85"/>
<rect x="103.2" y="444" width="0.9" height="2.2" fill="#fff" opacity=".85"/>
<rect x="114.8" y="444" width="0.9" height="2.2" fill="#fff" opacity=".85"/>
<rect x="126.5" y="444" width="0.9" height="2.2" fill="#fff" opacity=".85"/>
<rect x="138.1" y="444" width="0.9" height="2.2" fill="#fff" opacity=".85"/>
<rect x="149.7" y="444" width="0.9" height="2.2" fill="#fff" opacity=".85"/>
<rect x="161.2" y="444" width="0.9" height="2.2" fill="#fff" opacity=".85"/>
<rect x="23" y="456" width="149" height="7" rx="2" fill="#9c0808"/>
<rect x="95.5" y="457.5" width="1" height="4" fill="#eee"/><rect x="97.5" y="457.5" width="1" height="4" fill="#eee"/>
<rect x="3.5" y="444.5" width="18.5" height="19.5" fill="#d0d0d0" stroke="#1c1c1c" stroke-width="1.2"/>
<text x="12.7" y="461.5" font-size="21" fill="#202020" stroke="#202020" stroke-width=".5" text-anchor="middle">T</text>
<g clip-path="url(#cT)"><rect x="86.3" y="278" width="24" height="165" fill="#0408a4"/><rect x="85.8" y="278" width="1" height="165" fill="#8a8a9a"/><rect x="101" y="278" width="9.3" height="165" fill="#0610b0"/><rect x="87.7" y="297.8" width="2.2" height="0.9" fill="#2040d0" opacity=".5" transform="rotate(-20 87.7 297.8)"/><rect x="101.0" y="356.4" width="2.3" height="1.6" fill="#2040d0" opacity=".5" transform="rotate(-20 101.0 356.4)"/><rect x="100.5" y="318.3" width="5.1" height="0.8" fill="#1c34c8" opacity=".5" transform="rotate(-20 100.5 318.3)"/><rect x="87.9" y="372.0" width="3.4" height="1.5" fill="#1c34c8" opacity=".5" transform="rotate(-20 87.9 372.0)"/><rect x="95.6" y="334.0" width="4.6" height="0.9" fill="#1c34c8" opacity=".5" transform="rotate(-20 95.6 334.0)"/><rect x="97.2" y="416.5" width="4.7" height="1.1" fill="#00007c" opacity=".5" transform="rotate(-20 97.2 416.5)"/><rect x="99.5" y="361.7" width="4.5" height="1.1" fill="#2040d0" opacity=".5" transform="rotate(-20 99.5 361.7)"/><rect x="99.1" y="309.7" width="2.7" height="0.7" fill="#2040d0" opacity=".5" transform="rotate(-20 99.1 309.7)"/><rect x="90.0" y="313.7" width="4.3" height="1.2" fill="#1c34c8" opacity=".5" transform="rotate(-20 90.0 313.7)"/><rect x="102.3" y="357.1" width="2.5" height="0.8" fill="#2040d0" opacity=".5" transform="rotate(-20 102.3 357.1)"/><rect x="102.4" y="409.8" width="5.1" height="1.2" fill="#1c34c8" opacity=".5" transform="rotate(-20 102.4 409.8)"/><rect x="89.5" y="319.3" width="3.8" height="1.5" fill="#2040d0" opacity=".5" transform="rotate(-20 89.5 319.3)"/><rect x="93.6" y="282.0" width="4.2" height="0.8" fill="#00007c" opacity=".5" transform="rotate(-20 93.6 282.0)"/><rect x="88.4" y="299.5" width="5.0" height="1.1" fill="#1c34c8" opacity=".5" transform="rotate(-20 88.4 299.5)"/><rect x="102.9" y="290.0" width="4.4" height="1.3" fill="#1c34c8" opacity=".5" transform="rotate(-20 102.9 290.0)"/><rect x="91.0" y="384.8" width="3.7" height="1.5" fill="#2040d0" opacity=".5" transform="rotate(-20 91.0 384.8)"/><rect x="103.5" y="388.0" width="3.7" height="1.6" fill="#1c34c8" opacity=".5" transform="rotate(-20 103.5 388.0)"/><rect x="94.5" y="356.6" width="4.1" height="0.7" fill="#2040d0" opacity=".5" transform="rotate(-20 94.5 356.6)"/><rect x="98.9" y="284.9" width="2.4" height="0.7" fill="#2040d0" opacity=".5" transform="rotate(-20 98.9 284.9)"/><rect x="97.6" y="392.3" width="5.5" height="1.3" fill="#00007c" opacity=".5" transform="rotate(-20 97.6 392.3)"/><rect x="96.6" y="384.7" width="4.8" height="0.7" fill="#1c34c8" opacity=".5" transform="rotate(-20 96.6 384.7)"/><rect x="87.5" y="438.1" width="3.7" height="0.8" fill="#00007c" opacity=".5" transform="rotate(-20 87.5 438.1)"/><rect x="98.5" y="387.6" width="2.7" height="0.7" fill="#1c34c8" opacity=".5" transform="rotate(-20 98.5 387.6)"/><rect x="96.1" y="419.9" width="5.9" height="1.0" fill="#1c34c8" opacity=".5" transform="rotate(-20 96.1 419.9)"/><rect x="95.4" y="368.5" width="2.9" height="0.9" fill="#1c34c8" opacity=".5" transform="rotate(-20 95.4 368.5)"/><rect x="98.9" y="404.4" width="5.2" height="0.9" fill="#1c34c8" opacity=".5" transform="rotate(-20 98.9 404.4)"/><rect x="99.7" y="370.4" width="5.1" height="0.7" fill="#2040d0" opacity=".5" transform="rotate(-20 99.7 370.4)"/><rect x="92.7" y="395.9" width="5.5" height="1.4" fill="#1c34c8" opacity=".5" transform="rotate(-20 92.7 395.9)"/><rect x="98.9" y="285.9" width="4.3" height="0.8" fill="#00007c" opacity=".5" transform="rotate(-20 98.9 285.9)"/><rect x="89.0" y="429.0" width="4.4" height="0.9" fill="#1c34c8" opacity=".5" transform="rotate(-20 89.0 429.0)"/><rect x="90.9" y="406.8" width="2.3" height="1.2" fill="#2040d0" opacity=".5" transform="rotate(-20 90.9 406.8)"/><rect x="99.7" y="318.0" width="4.6" height="0.6" fill="#2040d0" opacity=".5" transform="rotate(-20 99.7 318.0)"/><rect x="97.8" y="440.5" width="4.8" height="1.0" fill="#1c34c8" opacity=".5" transform="rotate(-20 97.8 440.5)"/><rect x="91.0" y="298.1" width="3.6" height="0.6" fill="#2040d0" opacity=".5" transform="rotate(-20 91.0 298.1)"/><rect x="96.7" y="340.8" width="4.9" height="1.5" fill="#1c34c8" opacity=".5" transform="rotate(-20 96.7 340.8)"/><rect x="98.9" y="408.8" width="5.2" height="1.3" fill="#1c34c8" opacity=".5" transform="rotate(-20 98.9 408.8)"/><rect x="100.4" y="330.6" width="3.5" height="0.7" fill="#2040d0" opacity=".5" transform="rotate(-20 100.4 330.6)"/><rect x="95.9" y="324.2" width="2.3" height="0.9" fill="#00007c" opacity=".5" transform="rotate(-20 95.9 324.2)"/><rect x="98.8" y="300.9" width="2.9" height="1.0" fill="#2040d0" opacity=".5" transform="rotate(-20 98.8 300.9)"/><rect x="95.7" y="380.9" width="2.1" height="1.3" fill="#00007c" opacity=".5" transform="rotate(-20 95.7 380.9)"/><rect x="92.9" y="379.4" width="2.4" height="1.5" fill="#00007c" opacity=".5" transform="rotate(-20 92.9 379.4)"/><rect x="100.5" y="416.1" width="5.6" height="0.9" fill="#00007c" opacity=".5" transform="rotate(-20 100.5 416.1)"/><rect x="102.4" y="286.7" width="5.6" height="1.1" fill="#2040d0" opacity=".5" transform="rotate(-20 102.4 286.7)"/><rect x="101.4" y="282.9" width="4.0" height="1.6" fill="#1c34c8" opacity=".5" transform="rotate(-20 101.4 282.9)"/><rect x="89.9" y="411.5" width="5.2" height="0.8" fill="#2040d0" opacity=".5" transform="rotate(-20 89.9 411.5)"/><rect x="103.4" y="315.0" width="3.9" height="1.5" fill="#1c34c8" opacity=".5" transform="rotate(-20 103.4 315.0)"/><rect x="102.3" y="297.8" width="3.2" height="1.1" fill="#00007c" opacity=".5" transform="rotate(-20 102.3 297.8)"/><rect x="101.2" y="405.1" width="4.4" height="0.8" fill="#1c34c8" opacity=".5" transform="rotate(-20 101.2 405.1)"/><rect x="90.7" y="442.9" width="4.2" height="1.5" fill="#2040d0" opacity=".5" transform="rotate(-20 90.7 442.9)"/><rect x="95.9" y="351.4" width="4.6" height="1.0" fill="#00007c" opacity=".5" transform="rotate(-20 95.9 351.4)"/><rect x="103.9" y="300.8" width="5.4" height="1.4" fill="#1c34c8" opacity=".5" transform="rotate(-20 103.9 300.8)"/><rect x="87.7" y="350.7" width="2.0" height="0.9" fill="#00007c" opacity=".5" transform="rotate(-20 87.7 350.7)"/><rect x="101.2" y="409.7" width="5.9" height="0.7" fill="#00007c" opacity=".5" transform="rotate(-20 101.2 409.7)"/><rect x="88.4" y="298.1" width="5.4" height="0.7" fill="#2040d0" opacity=".5" transform="rotate(-20 88.4 298.1)"/><rect x="94.3" y="369.6" width="4.8" height="1.1" fill="#2040d0" opacity=".5" transform="rotate(-20 94.3 369.6)"/><rect x="97.8" y="440.4" width="4.8" height="1.0" fill="#1c34c8" opacity=".5" transform="rotate(-20 97.8 440.4)"/><rect x="90.0" y="400.4" width="5.6" height="1.5" fill="#1c34c8" opacity=".5" transform="rotate(-20 90.0 400.4)"/><rect x="91.6" y="351.7" width="2.6" height="0.7" fill="#00007c" opacity=".5" transform="rotate(-20 91.6 351.7)"/><rect x="93.1" y="294.9" width="5.1" height="0.9" fill="#2040d0" opacity=".5" transform="rotate(-20 93.1 294.9)"/><rect x="99.7" y="320.7" width="5.1" height="1.3" fill="#1c34c8" opacity=".5" transform="rotate(-20 99.7 320.7)"/><rect x="92.6" y="293.7" width="4.3" height="1.4" fill="#2040d0" opacity=".5" transform="rotate(-20 92.6 293.7)"/><rect x="103.1" y="348.4" width="4.1" height="0.7" fill="#1c34c8" opacity=".5" transform="rotate(-20 103.1 348.4)"/><rect x="88.9" y="310.4" width="3.8" height="1.2" fill="#1c34c8" opacity=".5" transform="rotate(-20 88.9 310.4)"/><rect x="97.2" y="290.1" width="5.8" height="0.7" fill="#00007c" opacity=".5" transform="rotate(-20 97.2 290.1)"/><rect x="101.8" y="331.7" width="3.3" height="1.2" fill="#2040d0" opacity=".5" transform="rotate(-20 101.8 331.7)"/><rect x="94.8" y="368.2" width="3.1" height="1.1" fill="#1c34c8" opacity=".5" transform="rotate(-20 94.8 368.2)"/><rect x="90.6" y="348.2" width="3.8" height="1.1" fill="#00007c" opacity=".5" transform="rotate(-20 90.6 348.2)"/><rect x="97.4" y="338.0" width="3.3" height="0.9" fill="#1c34c8" opacity=".5" transform="rotate(-20 97.4 338.0)"/><rect x="92.4" y="310.1" width="4.6" height="1.6" fill="#2040d0" opacity=".5" transform="rotate(-20 92.4 310.1)"/><rect x="91.4" y="290.8" width="4.6" height="1.6" fill="#00007c" opacity=".5" transform="rotate(-20 91.4 290.8)"/><rect x="97.4" y="313.1" width="3.4" height="1.1" fill="#00007c" opacity=".5" transform="rotate(-20 97.4 313.1)"/><rect x="100.0" y="386.0" width="4.7" height="1.3" fill="#00007c" opacity=".5" transform="rotate(-20 100.0 386.0)"/><rect x="99.6" y="433.4" width="2.0" height="0.9" fill="#00007c" opacity=".5" transform="rotate(-20 99.6 433.4)"/><rect x="92.9" y="319.1" width="5.7" height="0.8" fill="#00007c" opacity=".5" transform="rotate(-20 92.9 319.1)"/><rect x="93.5" y="324.9" width="2.3" height="1.4" fill="#2040d0" opacity=".5" transform="rotate(-20 93.5 324.9)"/><rect x="100.0" y="302.4" width="3.9" height="0.7" fill="#1c34c8" opacity=".5" transform="rotate(-20 100.0 302.4)"/><rect x="95.8" y="311.7" width="5.9" height="0.8" fill="#1c34c8" opacity=".5" transform="rotate(-20 95.8 311.7)"/><rect x="89.7" y="364.1" width="5.7" height="1.5" fill="#00007c" opacity=".5" transform="rotate(-20 89.7 364.1)"/><rect x="98.8" y="393.8" width="3.2" height="1.1" fill="#00007c" opacity=".5" transform="rotate(-20 98.8 393.8)"/><rect x="92.2" y="311.3" width="5.0" height="1.5" fill="#00007c" opacity=".5" transform="rotate(-20 92.2 311.3)"/><rect x="94.9" y="371.1" width="5.4" height="0.7" fill="#00007c" opacity=".5" transform="rotate(-20 94.9 371.1)"/><rect x="92.4" y="377.4" width="4.8" height="1.3" fill="#00007c" opacity=".5" transform="rotate(-20 92.4 377.4)"/><rect x="92.3" y="313.3" width="4.5" height="0.7" fill="#2040d0" opacity=".5" transform="rotate(-20 92.3 313.3)"/><rect x="97.7" y="357.9" width="3.8" height="1.0" fill="#2040d0" opacity=".5" transform="rotate(-20 97.7 357.9)"/><rect x="91.5" y="373.8" width="4.9" height="0.8" fill="#00007c" opacity=".5" transform="rotate(-20 91.5 373.8)"/><rect x="92.4" y="303.3" width="2.2" height="1.1" fill="#1c34c8" opacity=".5" transform="rotate(-20 92.4 303.3)"/><rect x="93.6" y="336.9" width="5.5" height="1.1" fill="#00007c" opacity=".5" transform="rotate(-20 93.6 336.9)"/><rect x="94.3" y="291.9" width="5.2" height="0.7" fill="#2040d0" opacity=".5" transform="rotate(-20 94.3 291.9)"/><rect x="87.0" y="294.4" width="2.6" height="1.6" fill="#00007c" opacity=".5" transform="rotate(-20 87.0 294.4)"/><rect x="103.2" y="436.6" width="5.0" height="0.8" fill="#00007c" opacity=".5" transform="rotate(-20 103.2 436.6)"/><path d="M103.2 293.7q2.8 -0.4 5.6 -3.6l0.5 2.2q-2.4 2.8 -6 3.1z" fill="#ff4020" opacity="1.00"/><path d="M105.5 293.4q2 -1 3.4 -3l0.3 1.4q-1.4 2 -3.6 2.6z" fill="#ff4020" opacity=".9"/><path d="M103.2 299.1q2.8 -0.4 5.6 -3.6l0.5 2.2q-2.4 2.8 -6 3.1z" fill="#f0e020" opacity="1.00"/><path d="M105.5 298.8q2 -1 3.4 -3l0.3 1.4q-1.4 2 -3.6 2.6z" fill="#ff4020" opacity=".9"/><path d="M103.2 304.5q2.8 -0.4 5.6 -3.6l0.5 2.2q-2.4 2.8 -6 3.1z" fill="#e8f020" opacity="1.00"/><path d="M105.5 304.2q2 -1 3.4 -3l0.3 1.4q-1.4 2 -3.6 2.6z" fill="#ff4020" opacity=".9"/><path d="M103.2 309.9q2.8 -0.4 5.6 -3.6l0.5 2.2q-2.4 2.8 -6 3.1z" fill="#c0f030" opacity="1.00"/><path d="M105.5 309.6q2 -1 3.4 -3l0.3 1.4q-1.4 2 -3.6 2.6z" fill="#f0e020" opacity=".9"/><path d="M103.2 315.3q2.8 -0.4 5.6 -3.6l0.5 2.2q-2.4 2.8 -6 3.1z" fill="#90e830" opacity="1.00"/><path d="M105.5 315.0q2 -1 3.4 -3l0.3 1.4q-1.4 2 -3.6 2.6z" fill="#e8f020" opacity=".9"/><path d="M103.2 320.7q2.8 -0.4 5.6 -3.6l0.5 2.2q-2.4 2.8 -6 3.1z" fill="#70e040" opacity="1.00"/><path d="M105.5 320.4q2 -1 3.4 -3l0.3 1.4q-1.4 2 -3.6 2.6z" fill="#c0f030" opacity=".9"/><path d="M103.2 326.1q2.8 -0.4 5.6 -3.6l0.5 2.2q-2.4 2.8 -6 3.1z" fill="#40d850" opacity="1.00"/><path d="M105.5 325.8q2 -1 3.4 -3l0.3 1.4q-1.4 2 -3.6 2.6z" fill="#90e830" opacity=".9"/><path d="M103.2 331.5q2.8 -0.4 5.6 -3.6l0.5 2.2q-2.4 2.8 -6 3.1z" fill="#30c860" opacity="1.00"/><path d="M105.5 331.2q2 -1 3.4 -3l0.3 1.4q-1.4 2 -3.6 2.6z" fill="#70e040" opacity=".9"/><path d="M103.2 336.9q2.8 -0.4 5.6 -3.6l0.5 2.2q-2.4 2.8 -6 3.1z" fill="#20b080" opacity="1.00"/><path d="M103.2 342.3q2.8 -0.4 5.6 -3.6l0.5 2.2q-2.4 2.8 -6 3.1z" fill="#2090b0" opacity="1.00"/><path d="M103.2 347.7q2.8 -0.4 5.6 -3.6l0.5 2.2q-2.4 2.8 -6 3.1z" fill="#2070c8" opacity="0.94"/><path d="M103.2 353.1q2.8 -0.4 5.6 -3.6l0.5 2.2q-2.4 2.8 -6 3.1z" fill="#2858d0" opacity="0.88"/><path d="M103.2 358.5q2.8 -0.4 5.6 -3.6l0.5 2.2q-2.4 2.8 -6 3.1z" fill="#2858d0" opacity="0.82"/><path d="M103.2 363.9q2.8 -0.4 5.6 -3.6l0.5 2.2q-2.4 2.8 -6 3.1z" fill="#2858d0" opacity="0.76"/><path d="M103.2 369.3q2.8 -0.4 5.6 -3.6l0.5 2.2q-2.4 2.8 -6 3.1z" fill="#2858d0" opacity="0.70"/><path d="M103.2 374.7q2.8 -0.4 5.6 -3.6l0.5 2.2q-2.4 2.8 -6 3.1z" fill="#2858d0" opacity="0.64"/><path d="M103.2 380.1q2.8 -0.4 5.6 -3.6l0.5 2.2q-2.4 2.8 -6 3.1z" fill="#2858d0" opacity="0.58"/><path d="M103.2 385.5q2.8 -0.4 5.6 -3.6l0.5 2.2q-2.4 2.8 -6 3.1z" fill="#2858d0" opacity="0.52"/><path d="M103.2 390.9q2.8 -0.4 5.6 -3.6l0.5 2.2q-2.4 2.8 -6 3.1z" fill="#2858d0" opacity="0.46"/><path d="M103.2 396.3q2.8 -0.4 5.6 -3.6l0.5 2.2q-2.4 2.8 -6 3.1z" fill="#2858d0" opacity="0.40"/><path d="M103.2 401.7q2.8 -0.4 5.6 -3.6l0.5 2.2q-2.4 2.8 -6 3.1z" fill="#2858d0" opacity="0.34"/><path d="M103.2 407.1q2.8 -0.4 5.6 -3.6l0.5 2.2q-2.4 2.8 -6 3.1z" fill="#2858d0" opacity="0.28"/><path d="M103.2 412.5q2.8 -0.4 5.6 -3.6l0.5 2.2q-2.4 2.8 -6 3.1z" fill="#2858d0" opacity="0.25"/><path d="M103.2 417.9q2.8 -0.4 5.6 -3.6l0.5 2.2q-2.4 2.8 -6 3.1z" fill="#2858d0" opacity="0.25"/><path d="M103.2 423.3q2.8 -0.4 5.6 -3.6l0.5 2.2q-2.4 2.8 -6 3.1z" fill="#2858d0" opacity="0.25"/><path d="M103.2 428.7q2.8 -0.4 5.6 -3.6l0.5 2.2q-2.4 2.8 -6 3.1z" fill="#2858d0" opacity="0.25"/><path d="M103.2 434.1q2.8 -0.4 5.6 -3.6l0.5 2.2q-2.4 2.8 -6 3.1z" fill="#2858d0" opacity="0.25"/><path d="M103.2 439.5q2.8 -0.4 5.6 -3.6l0.5 2.2q-2.4 2.8 -6 3.1z" fill="#2858d0" opacity="0.25"/><path d="M103.2 444.9q2.8 -0.4 5.6 -3.6l0.5 2.2q-2.4 2.8 -6 3.1z" fill="#2858d0" opacity="0.25"/><path d="M103.2 450.3q2.8 -0.4 5.6 -3.6l0.5 2.2q-2.4 2.8 -6 3.1z" fill="#2858d0" opacity="0.25"/><path d="M49.3 278V283.3H65.5L67.6 285.0L65.2 287.2L67.6 289.5L65.2 291.8L67.6 294.0L65.2 296.2L67.6 298.5L65.2 300.8L67.6 303.0L65.2 305.2L67.6 307.5L65.2 309.8L67.6 312.0L65.2 314.2L67.6 316.5L65.2 318.8L67.6 321.0L65.2 323.2L67.6 325.5L65.2 327.8L67.6 330.0L65.2 332.2L67.6 334.5L65.2 336.8L67.6 339.0L65.2 341.2L67.6 343.5L65.2 345.8L67.6 348.0L65.2 350.2L67.6 352.5L65.2 354.8L67.6 357.0L65.2 359.2L67.6 361.5L65.2 363.8L67.6 366.0L65.2 368.2L67.6 370.5L65.2 372.8L67.6 375.0L65.2 377.2L67.6 379.5L65.2 381.8L67.6 384.0L65.2 386.2L67.6 388.5L65.2 390.8L67.6 393.0L65.2 395.2L67.6 397.5L65.2 399.8L67.6 402.0L65.2 404.2L67.6 406.5L65.2 408.8L67.6 411.0L65.2 413.2L67.6 415.5L65.2 417.8L67.6 420.0L65.2 422.2L67.6 424.5L65.2 426.8L67.6 429.0L65.2 431.2L67.6 433.5L65.2 435.8L67.6 438.0L65.2 440.2L67.6 442.5" fill="none" stroke="#d8d8d8" stroke-width="0.9"/><rect x="101.2" y="278" width="1.6" height="165" fill="#ffd2b0"/><rect x="101.6" y="278" width=".8" height="165" fill="#ff8a3c"/><rect x="23" y="433.1" width="149" height="1.3" fill="#ff9a50"/><ellipse cx="98" cy="435.5" rx="6" ry="2.6" fill="#30d040"/><ellipse cx="97" cy="435.3" rx="4" ry="1.6" fill="#f0e020"/><ellipse cx="95.5" cy="435" rx="2" ry="1.1" fill="#ff3010"/><ellipse cx="107" cy="433" rx="3.5" ry="1.6" fill="#30d040"/><ellipse cx="107" cy="433" rx="1.8" ry=".9" fill="#f04010"/><path d="M95 428l9 12M104 428l-9 12" stroke="#111" stroke-width="1"/><path d="M99.5 431l4 5l-4 5l-1.5-5z" fill="#fff"/><rect x="102.5" y="279" width="22.3" height="9.5" fill="#fff"/><text x="103" y="287" font-size="9" fill="#ff6a20">19.05</text><rect x="24" y="423.4" width="27" height="9.8" fill="#fff"/><text x="24.5" y="431.6" font-size="9" fill="#ff6a20">149.58</text><text x="159.4" y="292" font-size="9.5" fill="#d0d0d0">LL</text><rect x="110.3" y="425.7" width="52.6" height="12.6" rx="2.5" fill="#f01010"/><text x="136.6" y="435.2" font-size="8.8" font-weight="bold" fill="#fff" text-anchor="middle" textLength="48" lengthAdjust="spacingAndGlyphs">2 - Indication</text></g>
<rect x="197" y="278" width="130" height="165" fill="#0418b8"/>
<rect x="178" y="279" width="7.5" height="163" rx="2" fill="#ee8146"/>
<rect x="180" y="359.0" width="3.5" height="1" fill="#e8e8ff"/><rect x="180" y="361.0" width="3.5" height="1" fill="#e8e8ff"/>
<rect x="186" y="278" width="11" height="165" fill="url(#gOrR)"/>
<rect x="186" y="278" width="1" height="165" fill="#ffffff" opacity=".55"/>
<text transform="translate(194.5,287.5) rotate(-90)" text-anchor="middle" font-size="9" fill="#fff4ea" >15.3</text>
<text transform="translate(194.5,327.5) rotate(-90)" text-anchor="middle" font-size="9" fill="#fff4ea" >10</text>
<text transform="translate(194.5,364) rotate(-90)" text-anchor="middle" font-size="9" fill="#fff4ea" >5</text>
<text transform="translate(194.5,408) rotate(-90)" text-anchor="middle" font-size="9" fill="#fff4ea" >0</text>
<text transform="translate(194.5,434.5) rotate(-90)" text-anchor="middle" font-size="9" fill="#fff4ea" >-4.7</text>
<rect x="194.5" y="278.6" width="2.5" height="0.9" fill="#fff" opacity=".8"/>
<rect x="194.5" y="288.8" width="2.5" height="0.9" fill="#fff" opacity=".8"/>
<rect x="194.5" y="299.0" width="2.5" height="0.9" fill="#fff" opacity=".8"/>
<rect x="194.5" y="309.2" width="2.5" height="0.9" fill="#fff" opacity=".8"/>
<rect x="194.5" y="319.4" width="2.5" height="0.9" fill="#fff" opacity=".8"/>
<rect x="194.5" y="329.5" width="2.5" height="0.9" fill="#fff" opacity=".8"/>
<rect x="194.5" y="339.7" width="2.5" height="0.9" fill="#fff" opacity=".8"/>
<rect x="194.5" y="349.9" width="2.5" height="0.9" fill="#fff" opacity=".8"/>
<rect x="194.5" y="360.1" width="2.5" height="0.9" fill="#fff" opacity=".8"/>
<rect x="194.5" y="370.3" width="2.5" height="0.9" fill="#fff" opacity=".8"/>
<rect x="194.5" y="380.5" width="2.5" height="0.9" fill="#fff" opacity=".8"/>
<rect x="194.5" y="390.7" width="2.5" height="0.9" fill="#fff" opacity=".8"/>
<rect x="194.5" y="400.9" width="2.5" height="0.9" fill="#fff" opacity=".8"/>
<rect x="194.5" y="411.0" width="2.5" height="0.9" fill="#fff" opacity=".8"/>
<rect x="194.5" y="421.2" width="2.5" height="0.9" fill="#fff" opacity=".8"/>
<rect x="194.5" y="431.4" width="2.5" height="0.9" fill="#fff" opacity=".8"/>
<rect x="194.5" y="441.6" width="2.5" height="0.9" fill="#fff" opacity=".8"/>
<rect x="197" y="444" width="130" height="10.5" fill="#2f8d55"/>
<rect x="197" y="444" width="130" height="4" fill="#fff" opacity=".12"/>
<text x="198" y="453.3" font-size="9" fill="#f0f0f0" text-anchor="start">0</text>
<text x="232" y="453.3" font-size="9" fill="#f0f0f0" text-anchor="end">25</text>
<text x="266.5" y="453.3" font-size="9" fill="#f0f0f0" text-anchor="end">50</text>
<text x="301" y="453.3" font-size="9" fill="#f0f0f0" text-anchor="end">75</text>
<text x="327" y="453.3" font-size="9" fill="#f0f0f0" text-anchor="end">94.2</text>
<rect x="197.1" y="444" width="0.9" height="2.2" fill="#fff" opacity=".85"/>
<rect x="204.0" y="444" width="0.9" height="2.2" fill="#fff" opacity=".85"/>
<rect x="210.9" y="444" width="0.9" height="2.2" fill="#fff" opacity=".85"/>
<rect x="217.8" y="444" width="0.9" height="2.2" fill="#fff" opacity=".85"/>
<rect x="224.7" y="444" width="0.9" height="2.2" fill="#fff" opacity=".85"/>
<rect x="231.6" y="444" width="0.9" height="2.2" fill="#fff" opacity=".85"/>
<rect x="238.5" y="444" width="0.9" height="2.2" fill="#fff" opacity=".85"/>
<rect x="245.4" y="444" width="0.9" height="2.2" fill="#fff" opacity=".85"/>
<rect x="252.2" y="444" width="0.9" height="2.2" fill="#fff" opacity=".85"/>
<rect x="259.2" y="444" width="0.9" height="2.2" fill="#fff" opacity=".85"/>
<rect x="266.1" y="444" width="0.9" height="2.2" fill="#fff" opacity=".85"/>
<rect x="272.9" y="444" width="0.9" height="2.2" fill="#fff" opacity=".85"/>
<rect x="279.9" y="444" width="0.9" height="2.2" fill="#fff" opacity=".85"/>
<rect x="286.8" y="444" width="0.9" height="2.2" fill="#fff" opacity=".85"/>
<rect x="293.7" y="444" width="0.9" height="2.2" fill="#fff" opacity=".85"/>
<rect x="300.6" y="444" width="0.9" height="2.2" fill="#fff" opacity=".85"/>
<rect x="307.4" y="444" width="0.9" height="2.2" fill="#fff" opacity=".85"/>
<rect x="314.4" y="444" width="0.9" height="2.2" fill="#fff" opacity=".85"/>
<rect x="321.2" y="444" width="0.9" height="2.2" fill="#fff" opacity=".85"/>
<rect x="197" y="456" width="130" height="7" rx="2" fill="#0e7a3c"/>
<rect x="260.0" y="457.5" width="1" height="4" fill="#eee"/><rect x="262.0" y="457.5" width="1" height="4" fill="#eee"/>
<rect x="177.5" y="444.5" width="18.5" height="19.5" fill="#d0d0d0" stroke="#1c1c1c" stroke-width="1.2"/>
<text x="186.7" y="461.5" font-size="21" fill="#202020" stroke="#202020" stroke-width=".5" text-anchor="middle">C</text>
<rect x="174.4" y="278" width="1.4" height="166" fill="#f2a878"/>
<g clip-path="url(#cC)"><rect x="197" y="322" width="130" height="121" fill="url(#gGB)"/><g filter="url(#b2)"><rect x="190" y="270" width="145" height="22" fill="#68e418"/><rect x="190" y="284" width="145" height="8" fill="#e8f000"/><rect x="190" y="291" width="145" height="24" fill="#ff8200"/><rect x="284" y="296" width="52" height="13" fill="#ff2400"/><rect x="238" y="299" width="50" height="8" fill="#ff5a00"/><rect x="190" y="313" width="145" height="8" fill="#f0f000"/><rect x="190" y="320" width="145" height="10" fill="#38dc20"/><path d="M316 318H335V392Q326 410 320 385Q316 350 316 318z" fill="#2cd42c"/><path d="M292 318h13l2 22l-4 14h-8z" fill="#28c838" opacity=".9"/><path d="M238 318h20l-2 30l-8 10h-10z" fill="#28c838" opacity=".85"/><path d="M306 338h8l2 110h-12z" fill="#0418b8" opacity=".9"/><path d="M246 352h18l12 40l4 60h-36z" fill="#0414b0" opacity=".9"/></g><g filter="url(#b05)"><rect x="254.4" y="366.3" width="1.8" height="50.1" fill="#1080a0" opacity="0.65"/><rect x="281.3" y="385.4" width="1.1" height="23.0" fill="#28d060" opacity="0.25"/><rect x="272.3" y="359.0" width="1.9" height="16.2" fill="#18a060" opacity="0.53"/><rect x="278.0" y="387.7" width="1.5" height="58.2" fill="#1080a0" opacity="0.26"/><rect x="268.6" y="352.8" width="0.8" height="18.9" fill="#40e020" opacity="0.55"/><rect x="247.7" y="374.6" width="1.5" height="13.2" fill="#18a060" opacity="0.39"/><rect x="282.2" y="331.1" width="0.9" height="14.2" fill="#18a060" opacity="0.33"/><rect x="298.6" y="374.2" width="2.0" height="51.5" fill="#28d060" opacity="0.28"/><rect x="288.7" y="357.1" width="1.9" height="35.3" fill="#40e020" opacity="0.61"/><rect x="275.6" y="343.6" width="1.2" height="39.1" fill="#1080a0" opacity="0.44"/><rect x="263.1" y="376.4" width="0.8" height="21.5" fill="#1080a0" opacity="0.28"/><rect x="292.1" y="354.6" width="1.5" height="46.3" fill="#40e020" opacity="0.50"/><rect x="255.7" y="329.9" width="1.2" height="32.9" fill="#40e020" opacity="0.49"/><rect x="266.7" y="325.2" width="1.7" height="15.9" fill="#18a060" opacity="0.40"/><rect x="299.5" y="365.3" width="1.3" height="65.9" fill="#18a060" opacity="0.65"/><rect x="323.6" y="359.3" width="1.4" height="65.0" fill="#1080a0" opacity="0.52"/><rect x="321.5" y="335.2" width="1.8" height="45.7" fill="#1080a0" opacity="0.56"/><rect x="282.0" y="376.6" width="1.6" height="15.1" fill="#40e020" opacity="0.26"/><rect x="261.6" y="345.6" width="2.0" height="64.2" fill="#18a060" opacity="0.55"/><rect x="281.7" y="335.7" width="1.9" height="69.5" fill="#28d060" opacity="0.44"/><rect x="322.9" y="381.0" width="1.9" height="33.9" fill="#18a060" opacity="0.49"/><rect x="277.1" y="358.7" width="1.0" height="63.0" fill="#40e020" opacity="0.49"/><rect x="252.1" y="368.5" width="1.9" height="34.9" fill="#18a060" opacity="0.26"/><rect x="291.7" y="363.1" width="1.3" height="63.1" fill="#28d060" opacity="0.52"/><rect x="305.4" y="374.9" width="0.9" height="20.3" fill="#18a060" opacity="0.29"/><rect x="242.2" y="349.3" width="1.6" height="20.4" fill="#20c838" opacity="0.30"/><rect x="286.9" y="340.7" width="1.5" height="41.6" fill="#18a060" opacity="0.32"/><rect x="314.6" y="332.1" width="1.5" height="56.7" fill="#20c838" opacity="0.45"/><rect x="304.9" y="322.0" width="1.4" height="67.8" fill="#1080a0" opacity="0.28"/><rect x="306.5" y="330.3" width="2.0" height="54.7" fill="#40e020" opacity="0.49"/><rect x="304.9" y="335.1" width="1.8" height="21.4" fill="#40e020" opacity="0.57"/><rect x="282.6" y="358.1" width="1.4" height="44.7" fill="#20c838" opacity="0.54"/><rect x="324.1" y="339.7" width="1.7" height="54.0" fill="#28d060" opacity="0.33"/><rect x="293.6" y="340.8" width="1.2" height="24.1" fill="#20c838" opacity="0.65"/><rect x="249.4" y="323.3" width="1.4" height="16.4" fill="#1080a0" opacity="0.63"/><rect x="299.2" y="367.4" width="1.3" height="40.3" fill="#28d060" opacity="0.41"/><rect x="259.6" y="321.4" width="1.1" height="38.0" fill="#18a060" opacity="0.49"/><rect x="275.2" y="347.9" width="1.3" height="59.9" fill="#1080a0" opacity="0.44"/><rect x="295.0" y="385.4" width="1.0" height="17.1" fill="#1080a0" opacity="0.40"/><rect x="292.6" y="333.1" width="1.6" height="39.0" fill="#28d060" opacity="0.59"/><rect x="300.8" y="365.8" width="1.3" height="26.7" fill="#1080a0" opacity="0.50"/><rect x="311.8" y="385.5" width="1.0" height="71.4" fill="#20c838" opacity="0.33"/><rect x="316.2" y="368.1" width="0.9" height="17.4" fill="#18a060" opacity="0.37"/><rect x="322.1" y="370.0" width="2.0" height="39.7" fill="#20c838" opacity="0.32"/><rect x="277.7" y="365.5" width="1.6" height="34.3" fill="#28d060" opacity="0.35"/><rect x="322.8" y="340.5" width="1.9" height="27.3" fill="#18a060" opacity="0.45"/><rect x="260.7" y="366.2" width="1.9" height="55.0" fill="#18a060" opacity="0.44"/><rect x="278.0" y="361.2" width="1.6" height="28.8" fill="#18a060" opacity="0.50"/><rect x="248.6" y="386.3" width="1.8" height="24.9" fill="#40e020" opacity="0.62"/><rect x="301.3" y="319.3" width="1.3" height="42.1" fill="#20c838" opacity="0.43"/><rect x="279.1" y="387.4" width="0.9" height="68.5" fill="#18a060" opacity="0.37"/><rect x="279.5" y="380.6" width="1.5" height="34.2" fill="#18a060" opacity="0.61"/><rect x="277.6" y="376.9" width="1.3" height="30.5" fill="#1080a0" opacity="0.47"/><rect x="259.6" y="374.2" width="1.9" height="62.6" fill="#1080a0" opacity="0.26"/><rect x="290.6" y="323.6" width="1.0" height="66.0" fill="#18a060" opacity="0.45"/><rect x="285.8" y="355.5" width="1.0" height="41.5" fill="#40e020" opacity="0.31"/><rect x="265.1" y="362.8" width="1.6" height="12.6" fill="#20c838" opacity="0.32"/><rect x="248.5" y="376.0" width="0.9" height="33.6" fill="#40e020" opacity="0.26"/><rect x="283.1" y="365.7" width="0.8" height="51.2" fill="#18a060" opacity="0.34"/><rect x="271.2" y="335.5" width="1.7" height="23.9" fill="#18a060" opacity="0.46"/><rect x="246.8" y="375.9" width="1.7" height="24.8" fill="#20c838" opacity="0.49"/><rect x="295.1" y="363.0" width="1.4" height="13.3" fill="#40e020" opacity="0.31"/><rect x="314.0" y="374.5" width="1.1" height="66.4" fill="#20c838" opacity="0.56"/><rect x="318.5" y="355.3" width="1.3" height="66.5" fill="#40e020" opacity="0.63"/><rect x="321.5" y="373.6" width="1.0" height="12.7" fill="#40e020" opacity="0.36"/><rect x="242.2" y="344.3" width="1.9" height="56.9" fill="#18a060" opacity="0.46"/><rect x="316.7" y="332.5" width="1.1" height="71.9" fill="#28d060" opacity="0.43"/><rect x="306.7" y="384.9" width="1.3" height="66.6" fill="#18a060" opacity="0.32"/><rect x="287.0" y="375.0" width="2.0" height="33.7" fill="#18a060" opacity="0.61"/><rect x="323.1" y="370.9" width="1.7" height="71.1" fill="#18a060" opacity="0.34"/><rect x="286.3" y="343.9" width="0.9" height="71.5" fill="#40e020" opacity="0.35"/><rect x="276.9" y="362.9" width="1.6" height="58.3" fill="#18a060" opacity="0.35"/><rect x="277.4" y="344.5" width="0.8" height="41.4" fill="#40e020" opacity="0.59"/><rect x="257.9" y="373.2" width="1.8" height="32.2" fill="#1080a0" opacity="0.54"/><rect x="303.6" y="387.5" width="0.8" height="34.6" fill="#1080a0" opacity="0.56"/><rect x="315.4" y="338.8" width="1.0" height="61.9" fill="#1080a0" opacity="0.34"/><rect x="303.9" y="374.9" width="0.8" height="41.0" fill="#20c838" opacity="0.62"/><rect x="251.5" y="341.4" width="1.6" height="33.3" fill="#28d060" opacity="0.49"/><rect x="300.3" y="378.6" width="1.6" height="57.1" fill="#40e020" opacity="0.54"/><rect x="279.9" y="326.7" width="1.8" height="65.7" fill="#28d060" opacity="0.61"/><rect x="246.7" y="339.6" width="1.7" height="50.0" fill="#18a060" opacity="0.62"/><rect x="249.1" y="361.2" width="1.0" height="50.8" fill="#28d060" opacity="0.45"/><rect x="302.0" y="333.3" width="1.9" height="53.2" fill="#40e020" opacity="0.46"/><rect x="240.8" y="377.0" width="1.6" height="29.0" fill="#40e020" opacity="0.42"/><rect x="250.7" y="379.6" width="2.0" height="51.3" fill="#20c838" opacity="0.34"/><rect x="301.3" y="352.2" width="1.2" height="44.3" fill="#28d060" opacity="0.50"/><rect x="295.3" y="343.6" width="1.6" height="32.8" fill="#1080a0" opacity="0.43"/><rect x="284.7" y="333.6" width="1.8" height="59.4" fill="#20c838" opacity="0.61"/><rect x="313.4" y="372.2" width="1.2" height="66.1" fill="#20c838" opacity="0.31"/><rect x="241.2" y="337.0" width="1.1" height="53.5" fill="#40e020" opacity="0.27"/><rect x="256.2" y="328.6" width="1.1" height="49.5" fill="#18a060" opacity="0.29"/><rect x="286.5" y="326.1" width="1.0" height="36.3" fill="#20c838" opacity="0.53"/><rect x="286.9" y="323.9" width="1.5" height="26.6" fill="#28d060" opacity="0.35"/><rect x="277.6" y="373.2" width="1.3" height="67.7" fill="#20c838" opacity="0.63"/><rect x="310.2" y="366.1" width="0.8" height="65.1" fill="#1080a0" opacity="0.45"/><rect x="317.6" y="372.0" width="0.8" height="46.8" fill="#18a060" opacity="0.51"/><rect x="307.8" y="336.0" width="1.4" height="40.3" fill="#40e020" opacity="0.32"/><rect x="269.7" y="364.5" width="1.9" height="51.4" fill="#1080a0" opacity="0.37"/><rect x="250.0" y="358.9" width="1.7" height="41.2" fill="#18a060" opacity="0.31"/><rect x="266.8" y="325.8" width="1.9" height="51.7" fill="#1080a0" opacity="0.27"/><rect x="304.9" y="375.9" width="1.6" height="42.8" fill="#20c838" opacity="0.44"/><rect x="288.4" y="343.5" width="1.6" height="23.9" fill="#1080a0" opacity="0.49"/><rect x="277.8" y="371.9" width="1.0" height="13.1" fill="#28d060" opacity="0.26"/><rect x="258.6" y="378.8" width="1.8" height="32.2" fill="#18a060" opacity="0.64"/><rect x="261.6" y="342.8" width="1.1" height="62.8" fill="#18a060" opacity="0.49"/><rect x="312.4" y="366.4" width="1.2" height="40.8" fill="#40e020" opacity="0.61"/><rect x="296.7" y="338.1" width="1.9" height="57.0" fill="#20c838" opacity="0.35"/><rect x="326.7" y="340.9" width="1.7" height="34.8" fill="#18a060" opacity="0.26"/><rect x="290.3" y="382.1" width="1.7" height="24.7" fill="#28d060" opacity="0.34"/><rect x="250.5" y="319.7" width="2.0" height="24.6" fill="#1080a0" opacity="0.45"/><rect x="301.0" y="378.0" width="1.7" height="63.5" fill="#0008a0" opacity="0.28"/><rect x="297.8" y="362.6" width="1.3" height="21.5" fill="#0008a0" opacity="0.19"/><rect x="240.3" y="348.5" width="1.9" height="37.7" fill="#0008a0" opacity="0.16"/><rect x="295.4" y="349.8" width="1.2" height="40.5" fill="#0008a0" opacity="0.28"/><rect x="301.9" y="370.9" width="1.8" height="34.6" fill="#0008a0" opacity="0.18"/><rect x="270.4" y="391.1" width="2.2" height="56.7" fill="#0008a0" opacity="0.23"/><rect x="294.4" y="363.9" width="2.0" height="50.1" fill="#0008a0" opacity="0.19"/><rect x="270.0" y="407.5" width="1.7" height="32.6" fill="#0008a0" opacity="0.40"/><rect x="264.2" y="396.8" width="1.3" height="15.2" fill="#0008a0" opacity="0.20"/><rect x="270.1" y="356.9" width="1.9" height="16.3" fill="#0008a0" opacity="0.20"/><rect x="289.9" y="380.8" width="2.0" height="57.5" fill="#0008a0" opacity="0.34"/><rect x="254.7" y="395.3" width="2.1" height="19.9" fill="#0008a0" opacity="0.24"/><rect x="262.0" y="357.2" width="1.9" height="34.8" fill="#0008a0" opacity="0.41"/><rect x="304.9" y="393.1" width="1.2" height="27.2" fill="#0008a0" opacity="0.24"/><rect x="277.7" y="403.2" width="0.9" height="64.8" fill="#0008a0" opacity="0.44"/><rect x="319.9" y="374.3" width="1.9" height="49.6" fill="#0008a0" opacity="0.21"/><rect x="293.6" y="410.7" width="2.1" height="59.0" fill="#0008a0" opacity="0.18"/><rect x="302.2" y="376.1" width="1.0" height="60.5" fill="#0008a0" opacity="0.31"/><rect x="250.5" y="398.3" width="0.8" height="51.1" fill="#0008a0" opacity="0.24"/><rect x="252.3" y="386.5" width="0.9" height="46.5" fill="#0008a0" opacity="0.44"/><rect x="324.0" y="372.8" width="1.3" height="43.7" fill="#0008a0" opacity="0.33"/><rect x="274.7" y="372.9" width="1.1" height="52.5" fill="#0008a0" opacity="0.24"/><rect x="306.4" y="357.7" width="2.1" height="18.4" fill="#0008a0" opacity="0.20"/><rect x="275.8" y="363.9" width="1.3" height="28.1" fill="#0008a0" opacity="0.31"/><rect x="250.1" y="379.3" width="0.9" height="17.6" fill="#0008a0" opacity="0.21"/><rect x="260.9" y="365.9" width="2.0" height="29.6" fill="#0008a0" opacity="0.35"/><rect x="281.2" y="396.0" width="1.2" height="49.3" fill="#0008a0" opacity="0.33"/><rect x="304.9" y="379.4" width="1.7" height="52.6" fill="#0008a0" opacity="0.43"/><rect x="263.0" y="389.0" width="1.5" height="63.8" fill="#0008a0" opacity="0.42"/><rect x="248.2" y="392.6" width="1.9" height="28.3" fill="#0008a0" opacity="0.28"/><rect x="286.5" y="359.4" width="2.0" height="27.9" fill="#0008a0" opacity="0.34"/><rect x="294.7" y="350.1" width="2.2" height="29.7" fill="#0008a0" opacity="0.21"/><rect x="286.8" y="390.8" width="1.6" height="40.5" fill="#0008a0" opacity="0.44"/><rect x="308.0" y="358.6" width="1.4" height="36.5" fill="#0008a0" opacity="0.36"/><rect x="298.7" y="360.3" width="1.4" height="49.6" fill="#0008a0" opacity="0.15"/><rect x="265.4" y="368.4" width="1.7" height="24.8" fill="#0008a0" opacity="0.45"/><rect x="321.0" y="386.1" width="1.5" height="57.9" fill="#0008a0" opacity="0.33"/><rect x="317.8" y="346.2" width="1.3" height="33.1" fill="#0008a0" opacity="0.25"/><rect x="277.2" y="346.0" width="2.1" height="49.0" fill="#0008a0" opacity="0.22"/><rect x="256.2" y="365.4" width="1.1" height="54.8" fill="#0008a0" opacity="0.38"/><rect x="255.0" y="383.7" width="1.7" height="51.1" fill="#0008a0" opacity="0.18"/><rect x="323.2" y="401.4" width="2.0" height="39.0" fill="#0008a0" opacity="0.33"/><rect x="254.7" y="369.8" width="1.4" height="56.0" fill="#0008a0" opacity="0.16"/><rect x="254.4" y="355.0" width="1.7" height="44.3" fill="#0008a0" opacity="0.28"/><rect x="275.1" y="409.4" width="1.7" height="32.1" fill="#0008a0" opacity="0.21"/><rect x="284.7" y="354.6" width="1.3" height="20.7" fill="#0008a0" opacity="0.18"/><rect x="273.2" y="387.7" width="1.9" height="42.5" fill="#0008a0" opacity="0.29"/><rect x="247.3" y="392.9" width="1.9" height="35.1" fill="#0008a0" opacity="0.44"/><rect x="285.6" y="359.5" width="1.5" height="32.9" fill="#0008a0" opacity="0.25"/><rect x="248.8" y="369.9" width="1.9" height="47.8" fill="#0008a0" opacity="0.38"/><rect x="316.9" y="398.1" width="1.7" height="35.6" fill="#0008a0" opacity="0.17"/><rect x="309.1" y="391.6" width="1.5" height="28.3" fill="#0008a0" opacity="0.23"/><rect x="309.2" y="371.9" width="2.1" height="54.0" fill="#0008a0" opacity="0.38"/><rect x="273.1" y="366.0" width="2.1" height="62.3" fill="#0008a0" opacity="0.21"/><rect x="271.5" y="397.2" width="1.2" height="52.8" fill="#0008a0" opacity="0.28"/><rect x="323.7" y="348.3" width="1.7" height="28.7" fill="#0008a0" opacity="0.42"/><rect x="322.4" y="374.9" width="2.2" height="54.5" fill="#0008a0" opacity="0.25"/><rect x="259.8" y="360.2" width="1.0" height="54.1" fill="#0008a0" opacity="0.31"/><rect x="320.9" y="356.1" width="1.5" height="46.4" fill="#0008a0" opacity="0.44"/><rect x="284.7" y="376.4" width="1.9" height="60.2" fill="#0008a0" opacity="0.19"/><rect x="309.9" y="369.9" width="2.1" height="63.4" fill="#0008a0" opacity="0.30"/><rect x="276.2" y="357.9" width="1.1" height="28.8" fill="#0008a0" opacity="0.20"/><rect x="303.5" y="345.6" width="1.6" height="44.9" fill="#0008a0" opacity="0.37"/><rect x="289.4" y="406.9" width="0.9" height="29.1" fill="#0008a0" opacity="0.32"/><rect x="263.4" y="411.2" width="1.8" height="61.1" fill="#0008a0" opacity="0.40"/><rect x="261.3" y="375.9" width="1.3" height="34.1" fill="#0008a0" opacity="0.26"/><rect x="281.6" y="387.8" width="1.6" height="16.3" fill="#0008a0" opacity="0.19"/><rect x="324.3" y="380.6" width="1.2" height="44.5" fill="#0008a0" opacity="0.36"/><rect x="301.8" y="405.7" width="1.2" height="44.0" fill="#0008a0" opacity="0.34"/><rect x="244.4" y="394.1" width="1.8" height="30.3" fill="#0008a0" opacity="0.19"/><rect x="292.0" y="353.8" width="1.2" height="16.8" fill="#0008a0" opacity="0.40"/><rect x="273.8" y="378.6" width="2.2" height="54.5" fill="#0008a0" opacity="0.23"/><rect x="300.4" y="396.7" width="1.3" height="54.7" fill="#0008a0" opacity="0.29"/><rect x="308.2" y="359.6" width="1.7" height="39.3" fill="#0008a0" opacity="0.41"/><rect x="261.2" y="388.6" width="1.0" height="25.9" fill="#0008a0" opacity="0.29"/><rect x="296.4" y="386.8" width="1.0" height="62.4" fill="#0008a0" opacity="0.31"/><rect x="281.8" y="360.1" width="1.0" height="60.9" fill="#0008a0" opacity="0.23"/><rect x="243.5" y="387.1" width="1.1" height="47.9" fill="#0008a0" opacity="0.43"/><rect x="295.2" y="356.1" width="2.0" height="62.1" fill="#0008a0" opacity="0.24"/><rect x="315.2" y="351.1" width="1.4" height="32.4" fill="#0008a0" opacity="0.44"/></g><g filter="url(#b05)"><rect x="268.8" y="408.5" width="2.1" height="18.3" fill="#20c838" opacity="0.65"/><rect x="316.2" y="425.5" width="2.1" height="11.3" fill="#20c838" opacity="0.51"/><rect x="296.8" y="415.2" width="1.8" height="26.3" fill="#30d030" opacity="0.44"/><rect x="289.7" y="421.0" width="0.9" height="11.9" fill="#30d030" opacity="0.36"/><rect x="299.8" y="410.9" width="2.1" height="31.0" fill="#18a868" opacity="0.47"/><rect x="300.8" y="403.0" width="2.4" height="31.2" fill="#18a868" opacity="0.32"/><rect x="284.0" y="428.1" width="1.5" height="49.2" fill="#30d030" opacity="0.47"/><rect x="254.3" y="426.4" width="1.3" height="20.5" fill="#18a868" opacity="0.37"/><rect x="271.3" y="411.2" width="1.5" height="35.3" fill="#18a868" opacity="0.64"/><rect x="273.7" y="423.7" width="1.8" height="18.9" fill="#20c838" opacity="0.69"/><rect x="311.5" y="420.3" width="1.8" height="29.6" fill="#30d030" opacity="0.37"/><rect x="273.3" y="400.3" width="1.7" height="27.8" fill="#30d030" opacity="0.52"/><rect x="326.5" y="411.6" width="0.9" height="49.2" fill="#30d030" opacity="0.42"/><rect x="294.9" y="402.8" width="1.3" height="12.3" fill="#30d030" opacity="0.57"/><rect x="310.1" y="416.0" width="1.9" height="10.8" fill="#20c838" opacity="0.46"/><rect x="281.1" y="422.8" width="1.9" height="43.3" fill="#18a868" opacity="0.33"/><rect x="261.2" y="419.3" width="0.9" height="47.0" fill="#18a868" opacity="0.57"/><rect x="257.2" y="402.1" width="1.7" height="27.7" fill="#18a868" opacity="0.50"/><rect x="294.8" y="399.7" width="2.2" height="37.4" fill="#20c838" opacity="0.36"/><rect x="298.0" y="395.1" width="2.0" height="12.3" fill="#18a868" opacity="0.44"/><rect x="308.8" y="405.9" width="1.8" height="34.9" fill="#18a868" opacity="0.34"/><rect x="258.7" y="407.5" width="1.9" height="25.9" fill="#30d030" opacity="0.61"/><rect x="288.8" y="409.8" width="0.9" height="47.6" fill="#20c838" opacity="0.69"/><rect x="254.7" y="426.5" width="1.5" height="35.5" fill="#20c838" opacity="0.42"/><rect x="303.6" y="413.8" width="1.8" height="25.4" fill="#20c838" opacity="0.54"/><rect x="247.0" y="402.9" width="1.5" height="20.5" fill="#20c838" opacity="0.64"/><rect x="274.5" y="424.7" width="1.7" height="16.1" fill="#30d030" opacity="0.31"/><rect x="318.3" y="419.3" width="1.3" height="15.7" fill="#20c838" opacity="0.48"/><rect x="252.5" y="407.3" width="2.0" height="18.0" fill="#20c838" opacity="0.48"/><rect x="297.1" y="423.1" width="1.2" height="30.4" fill="#18a868" opacity="0.53"/><rect x="256.0" y="429.2" width="1.5" height="24.4" fill="#30d030" opacity="0.62"/><rect x="297.5" y="426.4" width="1.1" height="41.8" fill="#20c838" opacity="0.54"/><rect x="283.8" y="406.4" width="0.9" height="29.4" fill="#30d030" opacity="0.37"/><rect x="317.2" y="400.3" width="0.8" height="34.3" fill="#30d030" opacity="0.62"/><rect x="266.3" y="408.6" width="1.5" height="25.4" fill="#20c838" opacity="0.65"/><rect x="310.0" y="429.6" width="2.3" height="19.3" fill="#30d030" opacity="0.48"/><rect x="303.9" y="399.3" width="2.2" height="32.6" fill="#30d030" opacity="0.55"/><rect x="266.3" y="401.8" width="1.0" height="35.7" fill="#20c838" opacity="0.30"/><rect x="326.6" y="406.8" width="1.5" height="11.7" fill="#20c838" opacity="0.52"/><rect x="271.4" y="412.9" width="2.4" height="30.3" fill="#20c838" opacity="0.42"/></g><g filter="url(#b2)"><path d="M256 312L282 312L284 340L290 372L298 418L292 420L280 380L268 356z" fill="#48e020"/><path d="M256 312L283 312L285 338L287 362L276 364L262 340z" fill="#f4f000"/></g><g filter="url(#b1)"><path d="M260 304L278 304L280 334L282 356L276 358L266 336z" fill="#ffbc38"/><path d="M264 302L275 302L277 326L272 330z" fill="#ff9420" opacity=".8"/></g><path d="M263.5 305l3 3.5l-1 2zM266 310l2.5 4l-1.5 .5z" fill="#501000"/><g filter="url(#b2)"><path d="M192 276H247V400L245 446H192z" fill="#58e018"/><path d="M192 281H244V398L243 446H228L226 420L222 446H214L212 424L204 446H198L194 410z" fill="#f4ec00"/></g><g filter="url(#b1)"><path d="M196 286L243 283V404L240 430L233 434L227 412L218 398L213 404L210 420L205 410L203 388L198 370z" fill="#ff8e00"/><path d="M200 287L241 285V400L239 418L233 414L226 402L216 388L208 376L203 356L200.5 330z" fill="#f02800"/><path d="M198 384l10 0l4 20l-2 40h-10z" fill="#d8ec10" opacity=".8"/><path d="M230 412l8 0l2 20l-2 14l-7 0z" fill="#f8e000"/></g><g filter="url(#b05)"><path d="M211 285L236 284L237 344L240 348L240 396L238 410L235 412L231 404L226 396L220 386L213 378L208 364L204 342L203.5 296z" fill="#870000"/></g><g filter="url(#b1)"><path d="M216 414l5-6l4 10l1 30h-11z" fill="#0820c0" opacity=".85"/><rect x="222" y="412" width="5" height="32" fill="#30d030" opacity=".7"/><rect x="196" y="416" width="6" height="28" fill="#1840c0" opacity=".75"/><rect x="200" y="405" width="4" height="38" fill="#40d828" opacity=".6"/><path d="M239 426l5-20l3 40h-8z" fill="#0a28c0" opacity=".8"/><rect x="233" y="434" width="6" height="10" fill="#50dc20" opacity=".7"/></g><rect x="320.6" y="357.7" width="0.8" height="20.2" fill="#ffff80" opacity="0.12"/><rect x="319.8" y="372.9" width="0.8" height="75.0" fill="#ffffff" opacity="0.10"/><rect x="326.1" y="370.4" width="0.8" height="50.9" fill="#000060" opacity="0.14"/><rect x="222.5" y="358.0" width="0.8" height="36.5" fill="#ffffff" opacity="0.14"/><rect x="215.2" y="374.3" width="0.8" height="42.3" fill="#ffff80" opacity="0.08"/><rect x="247.6" y="328.7" width="0.8" height="74.5" fill="#ffff80" opacity="0.07"/><rect x="228.9" y="334.9" width="0.8" height="25.0" fill="#ffffff" opacity="0.10"/><rect x="243.7" y="300.9" width="0.8" height="50.0" fill="#ffff80" opacity="0.13"/><rect x="260.8" y="290.0" width="0.8" height="22.4" fill="#ffffff" opacity="0.10"/><rect x="198.1" y="364.8" width="0.8" height="27.7" fill="#ffff80" opacity="0.14"/><rect x="221.0" y="348.1" width="0.8" height="37.4" fill="#ffff80" opacity="0.11"/><rect x="324.4" y="292.5" width="0.8" height="34.7" fill="#ffff80" opacity="0.09"/><rect x="283.7" y="350.2" width="0.8" height="20.0" fill="#ffffff" opacity="0.12"/><rect x="286.4" y="366.4" width="0.8" height="44.8" fill="#000060" opacity="0.07"/><rect x="265.5" y="289.0" width="0.8" height="39.5" fill="#ffffff" opacity="0.15"/><rect x="255.9" y="348.4" width="0.8" height="44.1" fill="#ffffff" opacity="0.07"/><rect x="200.6" y="290.7" width="0.8" height="79.0" fill="#ffffff" opacity="0.11"/><rect x="289.7" y="343.5" width="0.8" height="76.8" fill="#000060" opacity="0.14"/><rect x="249.6" y="321.1" width="0.8" height="75.1" fill="#ffffff" opacity="0.07"/><rect x="320.2" y="288.7" width="0.8" height="32.0" fill="#ffff80" opacity="0.14"/><rect x="277.4" y="327.8" width="0.8" height="34.6" fill="#ffff80" opacity="0.07"/><rect x="289.7" y="320.1" width="0.8" height="64.5" fill="#000060" opacity="0.06"/><rect x="308.4" y="310.5" width="0.8" height="60.8" fill="#ffffff" opacity="0.08"/><rect x="206.0" y="321.4" width="0.8" height="79.3" fill="#ffffff" opacity="0.11"/><rect x="325.1" y="288.3" width="0.8" height="78.3" fill="#000060" opacity="0.07"/><rect x="275.1" y="282.8" width="0.8" height="46.9" fill="#000060" opacity="0.14"/><rect x="298.4" y="289.6" width="0.8" height="56.2" fill="#ffffff" opacity="0.15"/><rect x="292.5" y="363.0" width="0.8" height="38.2" fill="#ffff80" opacity="0.11"/><rect x="226.8" y="370.0" width="0.8" height="20.4" fill="#000060" opacity="0.09"/><rect x="313.9" y="338.7" width="0.8" height="47.5" fill="#ffffff" opacity="0.13"/><rect x="281.6" y="338.8" width="0.8" height="54.3" fill="#000060" opacity="0.15"/><rect x="313.3" y="344.7" width="0.8" height="40.3" fill="#ffff80" opacity="0.11"/><rect x="279.2" y="334.4" width="0.8" height="49.6" fill="#ffffff" opacity="0.15"/><rect x="295.1" y="298.3" width="0.8" height="40.1" fill="#ffffff" opacity="0.14"/><rect x="236.9" y="318.5" width="0.8" height="51.2" fill="#ffff80" opacity="0.07"/><rect x="316.3" y="370.2" width="0.8" height="66.3" fill="#ffffff" opacity="0.12"/><rect x="261.3" y="315.4" width="0.8" height="68.5" fill="#ffff80" opacity="0.06"/><rect x="208.2" y="360.2" width="0.8" height="21.3" fill="#000060" opacity="0.08"/><rect x="323.9" y="325.1" width="0.8" height="56.4" fill="#ffff80" opacity="0.14"/><rect x="250.9" y="324.0" width="0.8" height="67.3" fill="#000060" opacity="0.11"/><rect x="208.7" y="376.3" width="0.8" height="43.8" fill="#ffffff" opacity="0.09"/><rect x="241.6" y="288.4" width="0.8" height="70.0" fill="#ffffff" opacity="0.14"/><rect x="204.0" y="297.1" width="0.8" height="57.0" fill="#000060" opacity="0.07"/><rect x="229.8" y="304.8" width="0.8" height="62.1" fill="#000060" opacity="0.07"/><rect x="257.7" y="375.7" width="0.8" height="78.3" fill="#ffff80" opacity="0.07"/><rect x="250.0" y="371.5" width="0.8" height="23.6" fill="#ffffff" opacity="0.11"/><rect x="204.8" y="343.4" width="0.8" height="75.1" fill="#ffffff" opacity="0.12"/><rect x="210.0" y="285.4" width="0.8" height="23.4" fill="#ffffff" opacity="0.07"/><rect x="258.8" y="360.1" width="0.8" height="32.0" fill="#000060" opacity="0.12"/><rect x="283.3" y="353.6" width="0.8" height="39.7" fill="#000060" opacity="0.14"/><rect x="322.1" y="280.4" width="0.8" height="23.5" fill="#ffff80" opacity="0.15"/><rect x="203.8" y="321.7" width="0.8" height="47.8" fill="#ffffff" opacity="0.10"/><rect x="296.5" y="293.5" width="0.8" height="46.7" fill="#ffff80" opacity="0.11"/><rect x="296.4" y="353.4" width="0.8" height="74.3" fill="#ffff80" opacity="0.15"/><rect x="237.9" y="360.7" width="0.8" height="27.4" fill="#ffff80" opacity="0.12"/><rect x="257.8" y="336.5" width="0.8" height="60.8" fill="#ffffff" opacity="0.16"/><rect x="303.9" y="300.3" width="0.8" height="25.4" fill="#ffff80" opacity="0.09"/><rect x="293.2" y="342.2" width="0.8" height="71.7" fill="#ffff80" opacity="0.09"/><rect x="303.7" y="374.1" width="0.8" height="76.5" fill="#ffffff" opacity="0.07"/><rect x="308.5" y="312.5" width="0.8" height="67.1" fill="#ffffff" opacity="0.16"/><rect x="301.6" y="300.5" width="2.8" height="1" fill="#601000" opacity=".7"/><rect x="312.9" y="301.9" width="1.1" height="1" fill="#601000" opacity=".7"/><rect x="311.9" y="297.1" width="2.4" height="1" fill="#601000" opacity=".7"/><rect x="294.3" y="300.6" width="1.7" height="1" fill="#601000" opacity=".7"/><rect x="312.6" y="302.7" width="1.8" height="1" fill="#601000" opacity=".7"/><rect x="321.2" y="301.5" width="1.5" height="1" fill="#601000" opacity=".7"/><rect x="297.1" y="300.4" width="2.5" height="1" fill="#601000" opacity=".7"/><rect x="317.2" y="302.5" width="2.7" height="1" fill="#601000" opacity=".7"/><rect x="294.0" y="298.0" width="1.7" height="1" fill="#601000" opacity=".7"/><rect x="325.7" y="298.1" width="2.8" height="1" fill="#601000" opacity=".7"/><rect x="303.0" y="298.5" width="1.8" height="1" fill="#601000" opacity=".7"/><rect x="299.5" y="299.2" width="2.1" height="1" fill="#601000" opacity=".7"/><rect x="312.3" y="297.8" width="2.2" height="1" fill="#601000" opacity=".7"/><rect x="293.4" y="299.1" width="2.9" height="1" fill="#601000" opacity=".7"/><rect x="290.2" y="278" width="1" height="165" fill="#000820"/><rect x="216.6" y="278" width="1.6" height="165" fill="#ffe0c8"/><rect x="217" y="278" width=".8" height="165" fill="#ffa870"/><rect x="197" y="328.8" width="130" height="1.3" fill="#ffc090" opacity=".9"/><path d="M209 321l9 9M226 321l-9 9" stroke="#111" stroke-width="1"/><path d="M198.8 279V418.7H237.6V279" fill="none" stroke="#e81010" stroke-width="1.5" stroke-dasharray="2.6 2.2"/><rect x="197" y="347.5" width="4.2" height="4.2" fill="#fff"/><rect x="236" y="347.5" width="4.2" height="4.2" fill="#fff"/><rect x="197" y="416.8" width="4.2" height="4.2" fill="#fff"/><rect x="216" y="416.8" width="4.2" height="4.2" fill="#fff"/><rect x="236" y="416.8" width="4.2" height="4.2" fill="#fff"/><rect x="204" y="293.5" width="10" height="36" fill="none" stroke="#e81010" stroke-width=".8"/><rect x="249.6" y="294.6" width="30.6" height="63.8" fill="none" stroke="#e81010" stroke-width="1.4"/><rect x="264.3" y="359" width="8.6" height="12.6" rx="2.5" fill="#f01010"/><path d="M272.5 359l2.5 4h-2.5z" fill="#f01010"/><text x="268.6" y="368.6" font-size="9" font-weight="bold" fill="#fff" text-anchor="middle">1</text><rect x="218.2" y="279" width="22.3" height="9.8" fill="#fff"/><text x="218.7" y="287.2" font-size="9" fill="#ff6a20">14.15</text><rect x="198" y="332" width="17.5" height="9.5" fill="#fff"/><text x="198.5" y="340" font-size="9" fill="#ff6a20">9.05</text><rect x="215.8" y="333.3" width="8.6" height="12.2" rx="2.5" fill="#f01010"/><text x="220.1" y="342" font-size="9" font-weight="bold" fill="#fff" text-anchor="middle">3</text><rect x="238" y="420" width="52.8" height="12.7" rx="2.5" fill="#f01010"/><text x="264.4" y="429.6" font-size="8.8" font-weight="bold" fill="#fff" text-anchor="middle" textLength="48" lengthAdjust="spacingAndGlyphs">2 - Indication</text></g>
<rect x="327.5" y="278.5" width="9.8" height="164.5" fill="url(#gCbar)"/>
<rect x="338" y="284" width="9" height="142" rx="1.5" fill="#7c7c7c"/><rect x="338" y="284" width="3" height="142" fill="#fff" opacity=".12"/>
<ellipse cx="342.5" cy="281.3" rx="3.6" ry="1.9" fill="none" stroke="#30b8f0" stroke-width="1.2"/>
<text transform="translate(340.6,438) rotate(90)" font-size="7" fill="#30b8f0" text-anchor="middle">8</text>
<text transform="translate(340.6,294.5) rotate(90)" font-size="8.5" fill="#f4f4f4" stroke="#333" stroke-width=".35" paint-order="stroke" text-anchor="middle">-1</text>
<rect x="338" y="299.0" width="3" height=".8" fill="#eee" opacity=".7"/>
<text transform="translate(340.6,311.5) rotate(90)" font-size="8.5" fill="#f4f4f4" stroke="#333" stroke-width=".35" paint-order="stroke" text-anchor="middle">-2</text>
<rect x="338" y="316.0" width="3" height=".8" fill="#eee" opacity=".7"/>
<text transform="translate(340.6,327) rotate(90)" font-size="8.5" fill="#f4f4f4" stroke="#333" stroke-width=".35" paint-order="stroke" text-anchor="middle">-3</text>
<rect x="338" y="331.5" width="3" height=".8" fill="#eee" opacity=".7"/>
<text transform="translate(340.6,350.5) rotate(90)" font-size="8.5" fill="#f4f4f4" stroke="#333" stroke-width=".35" paint-order="stroke" text-anchor="middle">-5</text>
<rect x="338" y="355.0" width="3" height=".8" fill="#eee" opacity=".7"/>
<text transform="translate(340.6,367) rotate(90)" font-size="8.5" fill="#f4f4f4" stroke="#333" stroke-width=".35" paint-order="stroke" text-anchor="middle">-7</text>
<rect x="338" y="371.5" width="3" height=".8" fill="#eee" opacity=".7"/>
<text transform="translate(340.6,383) rotate(90)" font-size="8.5" fill="#f4f4f4" stroke="#333" stroke-width=".35" paint-order="stroke" text-anchor="middle">-9</text>
<rect x="338" y="387.5" width="3" height=".8" fill="#eee" opacity=".7"/>
<text transform="translate(340.6,401.5) rotate(90)" font-size="8.5" fill="#f4f4f4" stroke="#333" stroke-width=".35" paint-order="stroke" text-anchor="middle">-12</text>
<rect x="338" y="406.0" width="3" height=".8" fill="#eee" opacity=".7"/>
<text transform="translate(340.6,417) rotate(90)" font-size="8.5" fill="#f4f4f4" stroke="#333" stroke-width=".35" paint-order="stroke" text-anchor="middle">-16</text>
<rect x="338" y="421.5" width="3" height=".8" fill="#eee" opacity=".7"/>
<rect x="328" y="444.5" width="19.2" height="19.5" fill="#808080"/><text x="337.6" y="457.5" font-size="9" fill="#f0f0f0" text-anchor="middle">Amp</text>
</svg>
<div class="abs" style="left:349px;top:87px;width:350px;height:379px;background:#fff;border:2px solid #f7a81f"></div>
<svg class="abs" style="left:351px;top:89px" width="346" height="375" viewBox="351 89 346 375" font-family="Liberation Sans, sans-serif">
<defs>
<filter id="v1" x="-30%" y="-30%" width="160%" height="160%"><feGaussianBlur stdDeviation="0.7"/></filter>
<filter id="v2" x="-30%" y="-30%" width="160%" height="160%"><feGaussianBlur stdDeviation="1.6"/></filter>
<filter id="v4" x="-30%" y="-30%" width="160%" height="160%"><feGaussianBlur stdDeviation="4"/></filter>
<clipPath id="slice"><path d="M525 203L555.6 208L549 408L518 403z"/></clipPath>
<linearGradient id="hz" x1="0" x2="0" y1="0" y2="1"><stop offset="0" stop-color="#8890d8" stop-opacity=".15"/><stop offset=".25" stop-color="#8088d4" stop-opacity=".5"/><stop offset=".9" stop-color="#868cd6" stop-opacity=".55"/><stop offset="1" stop-color="#9098e0" stop-opacity=".15"/></linearGradient>
</defs>
<path d="M656.7 102.5L671 89H697V116.7H671z" fill="#dedede"/>
<rect x="674.5" y="92.5" width="20" height="20" rx="3" fill="#f6f6f6" stroke="#3c3c3c" stroke-width="1.2"/>
<g fill="none" stroke="#333" stroke-width="1"><path d="M677.5 100.5l4-4h10l-4 4zM677.5 100.5v8.5h10v-8.5M687.5 109l4-4v-8.5" /><path d="M681.5 96.5v8.5h10M681.5 105l-4 4" stroke-width=".6" opacity=".7"/></g>
<ellipse cx="557.1" cy="212.0" rx="27" ry="8.5" fill="none" stroke="#8c8c8c" stroke-width="0.9" opacity="0.3"/>
<ellipse cx="556.9" cy="218.1" rx="27" ry="8.5" fill="none" stroke="#8c8c8c" stroke-width="0.9" opacity="0.3"/>
<ellipse cx="556.8" cy="224.2" rx="27" ry="8.5" fill="none" stroke="#8c8c8c" stroke-width="0.9" opacity="0.3"/>
<ellipse cx="556.6" cy="230.3" rx="27" ry="8.5" fill="none" stroke="#8c8c8c" stroke-width="0.9" opacity="0.3"/>
<ellipse cx="556.5" cy="236.4" rx="27" ry="8.5" fill="none" stroke="#8c8c8c" stroke-width="0.9" opacity="0.3"/>
<ellipse cx="556.3" cy="242.5" rx="27" ry="8.5" fill="none" stroke="#8c8c8c" stroke-width="0.9" opacity="0.3"/>
<ellipse cx="556.2" cy="248.6" rx="27" ry="8.5" fill="none" stroke="#8c8c8c" stroke-width="0.9" opacity="0.3"/>
<ellipse cx="556.0" cy="254.7" rx="27" ry="8.5" fill="none" stroke="#8c8c8c" stroke-width="0.9" opacity="0.3"/>
<ellipse cx="555.9" cy="260.8" rx="27" ry="8.5" fill="none" stroke="#8c8c8c" stroke-width="0.9" opacity="0.3"/>
<ellipse cx="555.7" cy="266.9" rx="27" ry="8.5" fill="none" stroke="#8c8c8c" stroke-width="0.9" opacity="0.3"/>
<ellipse cx="555.6" cy="273.0" rx="27" ry="8.5" fill="none" stroke="#8c8c8c" stroke-width="0.9" opacity="0.3"/>
<ellipse cx="555.4" cy="279.1" rx="27" ry="8.5" fill="none" stroke="#8c8c8c" stroke-width="0.9" opacity="0.3"/>
<ellipse cx="555.3" cy="285.2" rx="27" ry="8.5" fill="none" stroke="#8c8c8c" stroke-width="0.9" opacity="0.3"/>
<ellipse cx="555.1" cy="291.3" rx="27" ry="8.5" fill="none" stroke="#8c8c8c" stroke-width="0.9" opacity="0.3"/>
<ellipse cx="555.0" cy="297.4" rx="27" ry="8.5" fill="none" stroke="#8c8c8c" stroke-width="0.9" opacity="0.3"/>
<ellipse cx="554.8" cy="303.5" rx="27" ry="8.5" fill="none" stroke="#8c8c8c" stroke-width="0.9" opacity="0.3"/>
<ellipse cx="554.7" cy="309.6" rx="27" ry="8.5" fill="none" stroke="#8c8c8c" stroke-width="0.9" opacity="0.3"/>
<ellipse cx="554.5" cy="315.7" rx="27" ry="8.5" fill="none" stroke="#8c8c8c" stroke-width="0.9" opacity="0.3"/>
<ellipse cx="554.4" cy="321.8" rx="27" ry="8.5" fill="none" stroke="#8c8c8c" stroke-width="0.9" opacity="0.3"/>
<ellipse cx="554.2" cy="327.9" rx="27" ry="8.5" fill="none" stroke="#8c8c8c" stroke-width="0.9" opacity="0.3"/>
<ellipse cx="554.1" cy="334.0" rx="27" ry="8.5" fill="none" stroke="#8c8c8c" stroke-width="0.9" opacity="0.3"/>
<ellipse cx="553.9" cy="340.1" rx="27" ry="8.5" fill="none" stroke="#8c8c8c" stroke-width="0.9" opacity="0.3"/>
<ellipse cx="553.8" cy="346.2" rx="27" ry="8.5" fill="none" stroke="#8c8c8c" stroke-width="0.9" opacity="0.3"/>
<ellipse cx="553.6" cy="352.3" rx="27" ry="8.5" fill="none" stroke="#8c8c8c" stroke-width="0.9" opacity="0.3"/>
<ellipse cx="553.5" cy="358.4" rx="27" ry="8.5" fill="none" stroke="#8c8c8c" stroke-width="0.9" opacity="0.3"/>
<ellipse cx="553.3" cy="364.5" rx="27" ry="8.5" fill="none" stroke="#8c8c8c" stroke-width="0.9" opacity="0.3"/>
<ellipse cx="553.2" cy="370.6" rx="27" ry="8.5" fill="none" stroke="#8c8c8c" stroke-width="0.9" opacity="0.3"/>
<ellipse cx="553.0" cy="376.7" rx="27" ry="8.5" fill="none" stroke="#8c8c8c" stroke-width="0.9" opacity="0.3"/>
<ellipse cx="552.9" cy="382.8" rx="27" ry="8.5" fill="none" stroke="#8c8c8c" stroke-width="0.9" opacity="0.3"/>
<ellipse cx="552.7" cy="388.9" rx="27" ry="8.5" fill="none" stroke="#8c8c8c" stroke-width="0.9" opacity="0.3"/>
<ellipse cx="552.6" cy="395.0" rx="27" ry="8.5" fill="none" stroke="#8c8c8c" stroke-width="0.9" opacity="0.3"/>
<ellipse cx="552.5" cy="401.1" rx="27" ry="8.5" fill="none" stroke="#8c8c8c" stroke-width="0.9" opacity="0.6"/>
<ellipse cx="552.3" cy="407.2" rx="27" ry="8.5" fill="none" stroke="#8c8c8c" stroke-width="0.9" opacity="0.6"/>
<ellipse cx="552.2" cy="413.3" rx="27" ry="8.5" fill="none" stroke="#8c8c8c" stroke-width="0.9" opacity="0.6"/>
<ellipse cx="552.0" cy="419.4" rx="27" ry="8.5" fill="none" stroke="#8c8c8c" stroke-width="0.9" opacity="0.6"/>
<ellipse cx="551.9" cy="425.5" rx="27" ry="8.5" fill="none" stroke="#8c8c8c" stroke-width="0.9" opacity="0.6"/>
<ellipse cx="551.7" cy="431.6" rx="27" ry="8.5" fill="none" stroke="#8c8c8c" stroke-width="0.9" opacity="0.6"/>
<ellipse cx="551.6" cy="437.7" rx="27" ry="8.5" fill="none" stroke="#8c8c8c" stroke-width="0.9" opacity="0.6"/>
<path d="M524.5 405L524.5 437A27 8.5 0 0 0 578.5 437L578.5 405z" fill="#b4b4b4" opacity=".55"/>
<ellipse cx="551.5" cy="437" rx="27" ry="8.5" fill="#bcbcbc" opacity=".6"/>
<g filter="url(#v4)"><path d="M521 224L590 224L589 408L578 416L524 416L518 403z" fill="url(#hz)"/></g>
<rect x="556.4" y="270.2" width="3.3" height="0.9" fill="#4858d0" opacity="0.29"/>
<rect x="524.3" y="237.5" width="5.7" height="0.9" fill="#9090e8" opacity="0.27"/>
<rect x="567.3" y="261.4" width="4.2" height="0.9" fill="#4858d0" opacity="0.24"/>
<rect x="534.1" y="388.6" width="2.3" height="0.9" fill="#4858d0" opacity="0.32"/>
<rect x="524.6" y="352.6" width="5.3" height="0.9" fill="#5060d8" opacity="0.21"/>
<rect x="577.3" y="230.9" width="3.9" height="0.9" fill="#4858d0" opacity="0.31"/>
<rect x="544.0" y="400.0" width="5.5" height="0.9" fill="#4858d0" opacity="0.37"/>
<rect x="545.8" y="250.5" width="1.7" height="0.9" fill="#4858d0" opacity="0.19"/>
<rect x="546.3" y="408.4" width="4.6" height="0.9" fill="#9090e8" opacity="0.24"/>
<rect x="555.5" y="383.4" width="4.2" height="0.9" fill="#4858d0" opacity="0.28"/>
<rect x="561.8" y="396.8" width="6.1" height="0.9" fill="#9090e8" opacity="0.38"/>
<rect x="530.8" y="352.5" width="5.8" height="0.9" fill="#5060d8" opacity="0.31"/>
<rect x="574.3" y="265.1" width="4.4" height="0.9" fill="#9090e8" opacity="0.17"/>
<rect x="561.1" y="316.6" width="3.9" height="0.9" fill="#9090e8" opacity="0.33"/>
<rect x="531.2" y="303.0" width="3.0" height="0.9" fill="#4858d0" opacity="0.35"/>
<rect x="561.7" y="233.4" width="1.7" height="0.9" fill="#9090e8" opacity="0.27"/>
<rect x="536.8" y="400.2" width="2.7" height="0.9" fill="#5060d8" opacity="0.21"/>
<rect x="560.6" y="239.6" width="1.7" height="0.9" fill="#7070e0" opacity="0.37"/>
<rect x="538.7" y="280.4" width="4.9" height="0.9" fill="#9090e8" opacity="0.22"/>
<rect x="574.9" y="407.1" width="3.4" height="0.9" fill="#4858d0" opacity="0.35"/>
<rect x="575.7" y="298.4" width="4.9" height="0.9" fill="#5060d8" opacity="0.29"/>
<rect x="550.8" y="403.7" width="3.7" height="0.9" fill="#7070e0" opacity="0.36"/>
<rect x="537.7" y="308.1" width="3.0" height="0.9" fill="#9090e8" opacity="0.14"/>
<rect x="557.8" y="303.9" width="1.6" height="0.9" fill="#7070e0" opacity="0.15"/>
<rect x="549.7" y="344.2" width="4.9" height="0.9" fill="#9090e8" opacity="0.29"/>
<rect x="552.8" y="278.0" width="4.4" height="0.9" fill="#5060d8" opacity="0.37"/>
<rect x="550.9" y="272.7" width="4.5" height="0.9" fill="#9090e8" opacity="0.18"/>
<rect x="569.9" y="260.2" width="5.7" height="0.9" fill="#9090e8" opacity="0.21"/>
<rect x="569.9" y="296.7" width="1.6" height="0.9" fill="#7070e0" opacity="0.21"/>
<rect x="572.6" y="267.3" width="2.7" height="0.9" fill="#7070e0" opacity="0.30"/>
<rect x="526.8" y="348.4" width="4.5" height="0.9" fill="#9090e8" opacity="0.30"/>
<rect x="572.9" y="267.6" width="6.3" height="0.9" fill="#5060d8" opacity="0.22"/>
<rect x="575.6" y="348.5" width="3.8" height="0.9" fill="#7070e0" opacity="0.33"/>
<rect x="583.0" y="231.4" width="3.1" height="0.9" fill="#7070e0" opacity="0.35"/>
<rect x="573.5" y="289.6" width="1.9" height="0.9" fill="#9090e8" opacity="0.28"/>
<rect x="553.9" y="305.0" width="5.7" height="0.9" fill="#4858d0" opacity="0.22"/>
<rect x="547.8" y="304.2" width="3.5" height="0.9" fill="#4858d0" opacity="0.18"/>
<rect x="582.2" y="225.9" width="5.9" height="0.9" fill="#4858d0" opacity="0.27"/>
<rect x="563.6" y="412.3" width="1.7" height="0.9" fill="#4858d0" opacity="0.34"/>
<rect x="552.9" y="351.0" width="2.9" height="0.9" fill="#9090e8" opacity="0.35"/>
<rect x="572.9" y="388.7" width="6.4" height="0.9" fill="#5060d8" opacity="0.33"/>
<rect x="579.6" y="233.6" width="5.0" height="0.9" fill="#7070e0" opacity="0.36"/>
<rect x="555.3" y="395.9" width="1.6" height="0.9" fill="#5060d8" opacity="0.18"/>
<rect x="563.5" y="282.0" width="4.1" height="0.9" fill="#4858d0" opacity="0.15"/>
<rect x="526.6" y="398.5" width="2.1" height="0.9" fill="#4858d0" opacity="0.33"/>
<rect x="537.2" y="236.7" width="2.1" height="0.9" fill="#5060d8" opacity="0.18"/>
<rect x="577.2" y="375.4" width="5.5" height="0.9" fill="#5060d8" opacity="0.26"/>
<rect x="545.9" y="333.5" width="5.3" height="0.9" fill="#7070e0" opacity="0.20"/>
<rect x="547.5" y="325.2" width="3.9" height="0.9" fill="#5060d8" opacity="0.35"/>
<rect x="523.0" y="372.3" width="1.7" height="0.9" fill="#4858d0" opacity="0.37"/>
<rect x="525.1" y="387.3" width="4.0" height="0.9" fill="#9090e8" opacity="0.18"/>
<rect x="547.3" y="238.6" width="3.4" height="0.9" fill="#9090e8" opacity="0.23"/>
<rect x="543.3" y="261.3" width="2.1" height="0.9" fill="#5060d8" opacity="0.31"/>
<rect x="526.9" y="297.2" width="2.4" height="0.9" fill="#9090e8" opacity="0.25"/>
<rect x="554.3" y="348.6" width="4.7" height="0.9" fill="#5060d8" opacity="0.29"/>
<rect x="544.8" y="307.0" width="4.0" height="0.9" fill="#9090e8" opacity="0.24"/>
<rect x="549.1" y="356.9" width="2.7" height="0.9" fill="#9090e8" opacity="0.31"/>
<rect x="549.8" y="238.6" width="3.6" height="0.9" fill="#5060d8" opacity="0.36"/>
<rect x="577.7" y="296.1" width="5.5" height="0.9" fill="#9090e8" opacity="0.17"/>
<rect x="578.8" y="356.2" width="5.2" height="0.9" fill="#4858d0" opacity="0.30"/>
<rect x="555.3" y="364.4" width="2.0" height="0.9" fill="#5060d8" opacity="0.25"/>
<rect x="546.8" y="269.8" width="4.1" height="0.9" fill="#5060d8" opacity="0.30"/>
<rect x="572.8" y="296.4" width="3.2" height="0.9" fill="#5060d8" opacity="0.15"/>
<rect x="553.1" y="246.9" width="5.0" height="0.9" fill="#9090e8" opacity="0.28"/>
<rect x="522.3" y="376.8" width="5.3" height="0.9" fill="#7070e0" opacity="0.17"/>
<rect x="578.2" y="367.3" width="1.8" height="0.9" fill="#9090e8" opacity="0.35"/>
<rect x="527.7" y="259.3" width="6.5" height="0.9" fill="#7070e0" opacity="0.25"/>
<rect x="578.9" y="358.0" width="2.8" height="0.9" fill="#4858d0" opacity="0.37"/>
<rect x="581.1" y="330.8" width="3.4" height="0.9" fill="#7070e0" opacity="0.37"/>
<rect x="568.2" y="303.4" width="2.3" height="0.9" fill="#4858d0" opacity="0.18"/>
<rect x="576.9" y="301.2" width="2.3" height="0.9" fill="#4858d0" opacity="0.32"/>
<rect x="551.6" y="399.2" width="3.7" height="0.9" fill="#7070e0" opacity="0.17"/>
<rect x="529.3" y="367.9" width="4.1" height="0.9" fill="#7070e0" opacity="0.34"/>
<rect x="569.6" y="327.2" width="4.9" height="0.9" fill="#4858d0" opacity="0.28"/>
<rect x="582.0" y="336.1" width="5.9" height="0.9" fill="#9090e8" opacity="0.15"/>
<rect x="545.3" y="316.1" width="2.4" height="0.9" fill="#9090e8" opacity="0.20"/>
<rect x="575.1" y="316.7" width="3.6" height="0.9" fill="#4858d0" opacity="0.31"/>
<rect x="558.8" y="264.1" width="6.0" height="0.9" fill="#5060d8" opacity="0.26"/>
<rect x="573.5" y="361.9" width="3.5" height="0.9" fill="#5060d8" opacity="0.25"/>
<rect x="537.2" y="268.6" width="5.1" height="0.9" fill="#5060d8" opacity="0.37"/>
<rect x="534.8" y="387.2" width="2.4" height="0.9" fill="#9090e8" opacity="0.17"/>
<rect x="562.7" y="343.2" width="1.7" height="0.9" fill="#9090e8" opacity="0.18"/>
<rect x="534.9" y="233.6" width="2.0" height="0.9" fill="#5060d8" opacity="0.17"/>
<rect x="579.2" y="275.2" width="1.7" height="0.9" fill="#4858d0" opacity="0.28"/>
<rect x="521.0" y="353.3" width="3.2" height="0.9" fill="#4858d0" opacity="0.23"/>
<rect x="563.3" y="239.8" width="5.2" height="0.9" fill="#4858d0" opacity="0.23"/>
<rect x="528.6" y="328.4" width="2.9" height="0.9" fill="#4858d0" opacity="0.17"/>
<rect x="576.0" y="393.6" width="2.0" height="0.9" fill="#9090e8" opacity="0.30"/>
<rect x="550.0" y="295.0" width="4.8" height="0.9" fill="#9090e8" opacity="0.17"/>
<rect x="540.4" y="404.4" width="4.3" height="0.9" fill="#5060d8" opacity="0.30"/>
<rect x="525.1" y="321.6" width="3.0" height="0.9" fill="#7070e0" opacity="0.30"/>
<rect x="529.6" y="363.7" width="3.4" height="0.9" fill="#4858d0" opacity="0.17"/>
<rect x="528.2" y="402.1" width="3.2" height="0.9" fill="#4858d0" opacity="0.27"/>
<rect x="549.1" y="348.0" width="3.1" height="0.9" fill="#7070e0" opacity="0.31"/>
<rect x="534.5" y="245.4" width="4.3" height="0.9" fill="#4858d0" opacity="0.23"/>
<rect x="546.3" y="275.5" width="5.9" height="0.9" fill="#5060d8" opacity="0.25"/>
<rect x="565.6" y="276.5" width="4.1" height="0.9" fill="#9090e8" opacity="0.37"/>
<rect x="571.8" y="310.2" width="1.8" height="0.9" fill="#4858d0" opacity="0.34"/>
<rect x="540.0" y="246.3" width="2.0" height="0.9" fill="#5060d8" opacity="0.28"/>
<rect x="526.5" y="397.9" width="5.0" height="0.9" fill="#4858d0" opacity="0.30"/>
<rect x="582.9" y="299.3" width="2.1" height="0.9" fill="#7070e0" opacity="0.35"/>
<rect x="553.8" y="376.7" width="2.4" height="0.9" fill="#7070e0" opacity="0.19"/>
<rect x="571.1" y="272.5" width="1.7" height="0.9" fill="#4858d0" opacity="0.35"/>
<rect x="543.1" y="405.4" width="4.3" height="0.9" fill="#9090e8" opacity="0.29"/>
<rect x="561.8" y="410.6" width="3.0" height="0.9" fill="#4858d0" opacity="0.15"/>
<rect x="562.2" y="261.2" width="2.0" height="0.9" fill="#7070e0" opacity="0.26"/>
<rect x="549.9" y="324.5" width="2.5" height="0.9" fill="#7070e0" opacity="0.15"/>
<rect x="561.5" y="320.1" width="3.7" height="0.9" fill="#9090e8" opacity="0.37"/>
<rect x="528.0" y="394.5" width="5.5" height="0.9" fill="#5060d8" opacity="0.15"/>
<rect x="552.3" y="342.5" width="4.0" height="0.9" fill="#5060d8" opacity="0.36"/>
<rect x="576.2" y="286.4" width="5.0" height="0.9" fill="#7070e0" opacity="0.16"/>
<rect x="567.9" y="384.4" width="1.7" height="0.9" fill="#5060d8" opacity="0.32"/>
<rect x="572.2" y="290.3" width="6.2" height="0.9" fill="#7070e0" opacity="0.24"/>
<rect x="550.3" y="368.8" width="2.0" height="0.9" fill="#5060d8" opacity="0.24"/>
<rect x="563.6" y="385.6" width="3.5" height="0.9" fill="#4858d0" opacity="0.31"/>
<rect x="547.4" y="327.1" width="4.7" height="0.9" fill="#9090e8" opacity="0.15"/>
<rect x="564.5" y="311.9" width="3.7" height="0.9" fill="#4858d0" opacity="0.36"/>
<rect x="543.2" y="361.7" width="3.4" height="0.9" fill="#9090e8" opacity="0.28"/>
<rect x="522.9" y="267.5" width="2.5" height="0.9" fill="#9090e8" opacity="0.17"/>
<rect x="533.7" y="312.4" width="2.5" height="0.9" fill="#7070e0" opacity="0.28"/>
<rect x="560.9" y="320.7" width="2.2" height="0.9" fill="#7070e0" opacity="0.25"/>
<rect x="575.1" y="260.1" width="3.5" height="0.9" fill="#9090e8" opacity="0.24"/>
<rect x="523.7" y="358.7" width="3.5" height="0.9" fill="#4858d0" opacity="0.26"/>
<rect x="574.3" y="397.7" width="2.7" height="0.9" fill="#4858d0" opacity="0.25"/>
<rect x="561.6" y="256.3" width="3.2" height="0.9" fill="#5060d8" opacity="0.28"/>
<rect x="538.0" y="378.4" width="6.4" height="0.9" fill="#4858d0" opacity="0.33"/>
<rect x="549.6" y="407.7" width="4.3" height="0.9" fill="#5060d8" opacity="0.34"/>
<rect x="542.2" y="344.5" width="2.0" height="0.9" fill="#4858d0" opacity="0.37"/>
<rect x="521.2" y="337.5" width="1.7" height="0.9" fill="#5060d8" opacity="0.14"/>
<rect x="551.3" y="320.6" width="2.4" height="0.9" fill="#9090e8" opacity="0.19"/>
<rect x="548.8" y="410.0" width="5.5" height="0.9" fill="#9090e8" opacity="0.37"/>
<rect x="542.5" y="231.5" width="4.5" height="0.9" fill="#4858d0" opacity="0.16"/>
<rect x="575.1" y="280.8" width="2.1" height="0.9" fill="#4858d0" opacity="0.27"/>
<rect x="569.5" y="326.9" width="3.5" height="0.9" fill="#4858d0" opacity="0.34"/>
<rect x="578.4" y="330.1" width="3.3" height="0.9" fill="#4858d0" opacity="0.25"/>
<rect x="565.3" y="309.5" width="3.2" height="0.9" fill="#7070e0" opacity="0.26"/>
<rect x="577.0" y="368.0" width="5.0" height="0.9" fill="#4858d0" opacity="0.15"/>
<rect x="569.6" y="257.6" width="5.6" height="0.9" fill="#5060d8" opacity="0.32"/>
<rect x="526.6" y="353.7" width="2.7" height="0.9" fill="#5060d8" opacity="0.35"/>
<rect x="547.6" y="390.7" width="6.0" height="0.9" fill="#9090e8" opacity="0.38"/>
<rect x="535.8" y="225.3" width="5.4" height="0.9" fill="#5060d8" opacity="0.22"/>
<rect x="550.2" y="284.2" width="5.6" height="0.9" fill="#7070e0" opacity="0.20"/>
<rect x="533.0" y="234.3" width="4.7" height="0.9" fill="#5060d8" opacity="0.17"/>
<rect x="535.4" y="279.6" width="5.8" height="0.9" fill="#4858d0" opacity="0.26"/>
<rect x="539.3" y="397.4" width="5.9" height="0.9" fill="#7070e0" opacity="0.25"/>
<rect x="523.4" y="343.3" width="5.5" height="0.9" fill="#5060d8" opacity="0.35"/>
<rect x="581.8" y="244.3" width="2.8" height="0.9" fill="#5060d8" opacity="0.25"/>
<rect x="574.1" y="267.3" width="4.6" height="0.9" fill="#4858d0" opacity="0.32"/>
<rect x="541.2" y="390.6" width="4.5" height="0.9" fill="#4858d0" opacity="0.33"/>
<rect x="581.0" y="280.5" width="3.7" height="0.9" fill="#4858d0" opacity="0.19"/>
<rect x="550.0" y="327.4" width="5.1" height="0.9" fill="#5060d8" opacity="0.22"/>
<rect x="569.6" y="261.5" width="6.1" height="0.9" fill="#9090e8" opacity="0.24"/>
<rect x="558.3" y="348.2" width="2.6" height="0.9" fill="#9090e8" opacity="0.34"/>
<rect x="538.1" y="236.9" width="3.7" height="0.9" fill="#9090e8" opacity="0.19"/>
<rect x="580.7" y="256.4" width="5.1" height="0.9" fill="#4858d0" opacity="0.36"/>
<rect x="547.2" y="326.8" width="6.2" height="0.9" fill="#4858d0" opacity="0.26"/>
<rect x="545.4" y="372.0" width="6.5" height="0.9" fill="#5060d8" opacity="0.21"/>
<rect x="530.9" y="402.5" width="2.0" height="0.9" fill="#7070e0" opacity="0.21"/>
<rect x="561.0" y="323.7" width="1.7" height="0.9" fill="#7070e0" opacity="0.21"/>
<rect x="543.1" y="307.2" width="5.2" height="0.9" fill="#9090e8" opacity="0.17"/>
<rect x="578.0" y="309.4" width="3.7" height="0.9" fill="#7070e0" opacity="0.18"/>
<rect x="563.6" y="369.9" width="6.4" height="0.9" fill="#9090e8" opacity="0.37"/>
<rect x="580.0" y="306.9" width="3.9" height="0.9" fill="#7070e0" opacity="0.23"/>
<rect x="537.5" y="387.0" width="3.8" height="0.9" fill="#9090e8" opacity="0.33"/>
<rect x="537.4" y="281.5" width="5.5" height="0.9" fill="#5060d8" opacity="0.14"/>
<rect x="530.1" y="344.5" width="1.6" height="0.9" fill="#5060d8" opacity="0.14"/>
<rect x="568.4" y="411.9" width="3.3" height="0.9" fill="#9090e8" opacity="0.38"/>
<rect x="535.1" y="231.7" width="1.6" height="0.9" fill="#4858d0" opacity="0.36"/>
<rect x="557.3" y="383.8" width="5.6" height="0.9" fill="#4858d0" opacity="0.21"/>
<rect x="572.3" y="272.0" width="3.6" height="0.9" fill="#9090e8" opacity="0.22"/>
<rect x="525.9" y="230.6" width="6.5" height="0.9" fill="#7070e0" opacity="0.36"/>
<rect x="535.3" y="378.6" width="2.2" height="0.9" fill="#4858d0" opacity="0.26"/>
<rect x="554.1" y="382.9" width="2.9" height="0.9" fill="#7070e0" opacity="0.15"/>
<rect x="525.2" y="317.3" width="5.6" height="0.9" fill="#4858d0" opacity="0.25"/>
<rect x="578.2" y="351.4" width="5.6" height="0.9" fill="#4858d0" opacity="0.23"/>
<rect x="539.0" y="345.1" width="1.9" height="0.9" fill="#7070e0" opacity="0.38"/>
<rect x="546.5" y="328.9" width="3.3" height="0.9" fill="#4858d0" opacity="0.21"/>
<rect x="540.1" y="273.6" width="4.1" height="0.9" fill="#9090e8" opacity="0.17"/>
<rect x="553.7" y="232.2" width="2.7" height="0.9" fill="#4858d0" opacity="0.36"/>
<rect x="522.8" y="341.4" width="4.4" height="0.9" fill="#5060d8" opacity="0.26"/>
<rect x="566.4" y="278.2" width="6.1" height="0.9" fill="#5060d8" opacity="0.24"/>
<rect x="525.5" y="239.4" width="3.9" height="0.9" fill="#4858d0" opacity="0.19"/>
<rect x="530.7" y="399.9" width="3.4" height="0.9" fill="#4858d0" opacity="0.22"/>
<rect x="581.4" y="276.5" width="6.2" height="0.9" fill="#9090e8" opacity="0.29"/>
<rect x="523.4" y="330.5" width="3.6" height="0.9" fill="#4858d0" opacity="0.38"/>
<rect x="537.6" y="240.1" width="2.5" height="0.9" fill="#5060d8" opacity="0.31"/>
<rect x="562.4" y="246.9" width="2.1" height="0.9" fill="#5060d8" opacity="0.37"/>
<rect x="562.1" y="410.1" width="3.7" height="0.9" fill="#4858d0" opacity="0.25"/>
<rect x="557.1" y="280.0" width="2.4" height="0.9" fill="#4858d0" opacity="0.37"/>
<rect x="579.2" y="252.4" width="2.4" height="0.9" fill="#4858d0" opacity="0.30"/>
<rect x="529.6" y="347.9" width="1.8" height="0.9" fill="#7070e0" opacity="0.21"/>
<rect x="528.8" y="348.2" width="2.2" height="0.9" fill="#7070e0" opacity="0.27"/>
<rect x="528.6" y="297.7" width="3.4" height="0.9" fill="#5060d8" opacity="0.21"/>
<rect x="532.2" y="249.9" width="2.1" height="0.9" fill="#9090e8" opacity="0.37"/>
<rect x="578.9" y="339.7" width="1.5" height="0.9" fill="#9090e8" opacity="0.38"/>
<rect x="534.5" y="411.2" width="3.3" height="0.9" fill="#4858d0" opacity="0.16"/>
<rect x="549.1" y="385.9" width="5.2" height="0.9" fill="#4858d0" opacity="0.28"/>
<rect x="555.0" y="313.2" width="3.7" height="0.9" fill="#4858d0" opacity="0.34"/>
<rect x="559.7" y="263.1" width="6.2" height="0.9" fill="#7070e0" opacity="0.21"/>
<rect x="579.2" y="388.2" width="3.1" height="0.9" fill="#7070e0" opacity="0.17"/>
<rect x="524.5" y="339.7" width="4.6" height="0.9" fill="#7070e0" opacity="0.17"/>
<rect x="577.6" y="227.6" width="5.5" height="0.9" fill="#9090e8" opacity="0.27"/>
<rect x="525.9" y="370.5" width="4.2" height="0.9" fill="#4858d0" opacity="0.22"/>
<rect x="534.6" y="337.2" width="3.8" height="0.9" fill="#9090e8" opacity="0.29"/>
<rect x="564.6" y="337.3" width="5.4" height="0.9" fill="#9090e8" opacity="0.35"/>
<rect x="537.7" y="383.7" width="6.4" height="0.9" fill="#9090e8" opacity="0.18"/>
<rect x="534.7" y="339.4" width="6.5" height="0.9" fill="#7070e0" opacity="0.21"/>
<rect x="547.3" y="408.7" width="3.9" height="0.9" fill="#7070e0" opacity="0.38"/>
<rect x="548.7" y="325.4" width="4.6" height="0.9" fill="#5060d8" opacity="0.24"/>
<rect x="559.1" y="329.5" width="3.0" height="0.9" fill="#7070e0" opacity="0.35"/>
<rect x="582.8" y="298.0" width="3.3" height="0.9" fill="#7070e0" opacity="0.15"/>
<rect x="528.8" y="318.9" width="5.2" height="0.9" fill="#4858d0" opacity="0.31"/>
<rect x="540.7" y="293.7" width="4.0" height="0.9" fill="#4858d0" opacity="0.25"/>
<rect x="562.0" y="397.5" width="2.0" height="0.9" fill="#4858d0" opacity="0.18"/>
<rect x="545.7" y="266.8" width="4.6" height="0.9" fill="#7070e0" opacity="0.35"/>
<rect x="549.8" y="264.7" width="2.5" height="0.9" fill="#5060d8" opacity="0.27"/>
<rect x="552.6" y="400.0" width="5.2" height="0.9" fill="#7070e0" opacity="0.25"/>
<rect x="528.1" y="354.7" width="5.9" height="0.9" fill="#4858d0" opacity="0.19"/>
<rect x="542.1" y="251.4" width="4.3" height="0.9" fill="#5060d8" opacity="0.34"/>
<rect x="526.2" y="338.8" width="1.6" height="0.9" fill="#9090e8" opacity="0.23"/>
<rect x="582.6" y="318.1" width="3.9" height="0.9" fill="#7070e0" opacity="0.23"/>
<rect x="548.2" y="322.2" width="4.6" height="0.9" fill="#9090e8" opacity="0.24"/>
<rect x="584.0" y="243.4" width="5.0" height="0.9" fill="#5060d8" opacity="0.16"/>
<rect x="565.9" y="391.7" width="3.1" height="0.9" fill="#5060d8" opacity="0.22"/>
<rect x="558.7" y="398.4" width="2.0" height="0.9" fill="#9090e8" opacity="0.29"/>
<rect x="533.7" y="392.5" width="3.1" height="0.9" fill="#4858d0" opacity="0.37"/>
<rect x="555.6" y="234.9" width="6.0" height="0.9" fill="#7070e0" opacity="0.28"/>
<rect x="537.8" y="241.2" width="3.8" height="0.9" fill="#4858d0" opacity="0.21"/>
<rect x="560.2" y="411.6" width="4.1" height="0.9" fill="#7070e0" opacity="0.28"/>
<rect x="558.6" y="290.1" width="4.4" height="0.9" fill="#9090e8" opacity="0.29"/>
<rect x="569.8" y="292.4" width="6.0" height="0.9" fill="#7070e0" opacity="0.25"/>
<rect x="573.6" y="362.1" width="4.6" height="0.9" fill="#4858d0" opacity="0.35"/>
<rect x="573.8" y="266.1" width="6.2" height="0.9" fill="#5060d8" opacity="0.36"/>
<rect x="573.6" y="320.2" width="3.1" height="0.9" fill="#5060d8" opacity="0.22"/>
<rect x="577.2" y="271.9" width="4.9" height="0.9" fill="#5060d8" opacity="0.20"/>
<rect x="535.9" y="294.7" width="2.9" height="0.9" fill="#9090e8" opacity="0.20"/>
<rect x="541.6" y="356.9" width="2.1" height="0.9" fill="#7070e0" opacity="0.21"/>
<rect x="533.4" y="257.9" width="3.9" height="0.9" fill="#7070e0" opacity="0.19"/>
<rect x="558.4" y="352.5" width="2.4" height="0.9" fill="#4858d0" opacity="0.28"/>
<rect x="532.8" y="305.7" width="3.0" height="0.9" fill="#9090e8" opacity="0.15"/>
<rect x="573.4" y="374.5" width="4.0" height="0.9" fill="#7070e0" opacity="0.20"/>
<rect x="562.1" y="395.7" width="2.6" height="0.9" fill="#4858d0" opacity="0.22"/>
<rect x="549.1" y="414.2" width="2.4" height="0.9" fill="#4858d0" opacity="0.22"/>
<rect x="556.5" y="364.1" width="2.0" height="0.9" fill="#7070e0" opacity="0.34"/>
<rect x="555.0" y="315.8" width="5.8" height="0.9" fill="#4858d0" opacity="0.23"/>
<rect x="545.1" y="233.0" width="4.7" height="0.9" fill="#5060d8" opacity="0.31"/>
<rect x="556.0" y="410.3" width="4.4" height="0.9" fill="#9090e8" opacity="0.27"/>
<rect x="571.0" y="412.8" width="5.2" height="0.9" fill="#9090e8" opacity="0.36"/>
<rect x="556.4" y="305.4" width="5.3" height="0.9" fill="#4858d0" opacity="0.25"/>
<rect x="536.6" y="332.8" width="5.0" height="0.9" fill="#4858d0" opacity="0.31"/>
<rect x="532.3" y="286.6" width="6.1" height="0.9" fill="#4858d0" opacity="0.18"/>
<rect x="534.1" y="299.9" width="3.5" height="0.9" fill="#9090e8" opacity="0.17"/>
<rect x="553.4" y="235.4" width="2.5" height="0.9" fill="#7070e0" opacity="0.17"/>
<rect x="528.5" y="329.9" width="3.4" height="0.9" fill="#9090e8" opacity="0.24"/>
<rect x="540.6" y="237.6" width="3.1" height="0.9" fill="#9090e8" opacity="0.17"/>
<rect x="548.9" y="405.1" width="3.7" height="0.9" fill="#9090e8" opacity="0.23"/>
<rect x="537.0" y="354.5" width="5.4" height="0.9" fill="#7070e0" opacity="0.30"/>
<rect x="538.6" y="271.9" width="3.2" height="0.9" fill="#9090e8" opacity="0.36"/>
<rect x="566.9" y="243.7" width="5.3" height="0.9" fill="#7070e0" opacity="0.38"/>
<rect x="529.3" y="288.5" width="5.6" height="0.9" fill="#7070e0" opacity="0.18"/>
<rect x="537.4" y="351.8" width="4.0" height="0.9" fill="#9090e8" opacity="0.36"/>
<rect x="548.3" y="308.8" width="4.3" height="0.9" fill="#4858d0" opacity="0.37"/>
<rect x="540.1" y="306.7" width="2.9" height="0.9" fill="#4858d0" opacity="0.18"/>
<rect x="550.4" y="231.0" width="1.5" height="0.9" fill="#7070e0" opacity="0.26"/>
<rect x="571.9" y="406.1" width="5.1" height="0.9" fill="#9090e8" opacity="0.20"/>
<rect x="555.8" y="344.4" width="6.3" height="0.9" fill="#9090e8" opacity="0.19"/>
<rect x="583.8" y="255.1" width="5.2" height="0.9" fill="#4858d0" opacity="0.24"/>
<rect x="529.7" y="279.9" width="3.2" height="0.9" fill="#7070e0" opacity="0.20"/>
<rect x="528.3" y="241.5" width="4.9" height="0.9" fill="#5060d8" opacity="0.14"/>
<rect x="572.1" y="240.7" width="3.5" height="0.9" fill="#4858d0" opacity="0.27"/>
<rect x="548.1" y="351.0" width="2.4" height="0.9" fill="#5060d8" opacity="0.16"/>
<rect x="546.3" y="354.7" width="1.5" height="0.9" fill="#9090e8" opacity="0.26"/>
<rect x="582.4" y="287.3" width="2.0" height="0.9" fill="#7070e0" opacity="0.23"/>
<rect x="547.6" y="378.0" width="4.8" height="0.9" fill="#9090e8" opacity="0.29"/>
<rect x="536.4" y="308.8" width="1.5" height="0.9" fill="#7070e0" opacity="0.20"/>
<rect x="527.8" y="304.0" width="3.1" height="0.9" fill="#5060d8" opacity="0.27"/>
<rect x="539.0" y="338.5" width="1.6" height="0.9" fill="#5060d8" opacity="0.28"/>
<rect x="550.9" y="267.4" width="4.1" height="0.9" fill="#4858d0" opacity="0.30"/>
<rect x="552.7" y="364.8" width="3.6" height="0.9" fill="#9090e8" opacity="0.33"/>
<rect x="551.0" y="258.8" width="4.2" height="0.9" fill="#9090e8" opacity="0.36"/>
<rect x="559.7" y="335.6" width="3.7" height="0.9" fill="#7070e0" opacity="0.21"/>
<rect x="535.3" y="324.2" width="4.1" height="0.9" fill="#9090e8" opacity="0.17"/>
<rect x="551.2" y="319.9" width="2.7" height="0.9" fill="#4858d0" opacity="0.14"/>
<rect x="562.2" y="229.4" width="1.8" height="0.9" fill="#4858d0" opacity="0.36"/>
<rect x="565.4" y="234.1" width="3.0" height="0.9" fill="#4858d0" opacity="0.26"/>
<rect x="569.8" y="373.0" width="3.0" height="0.9" fill="#5060d8" opacity="0.24"/>
<rect x="527.8" y="348.4" width="4.9" height="0.9" fill="#7070e0" opacity="0.16"/>
<rect x="553.2" y="366.5" width="5.3" height="0.9" fill="#7070e0" opacity="0.29"/>
<rect x="565.2" y="240.7" width="4.1" height="0.9" fill="#5060d8" opacity="0.26"/>
<rect x="553.1" y="293.8" width="1.9" height="0.9" fill="#9090e8" opacity="0.27"/>
<rect x="550.8" y="299.3" width="4.5" height="0.9" fill="#5060d8" opacity="0.22"/>
<rect x="560.9" y="316.4" width="5.4" height="0.9" fill="#9090e8" opacity="0.19"/>
<rect x="539.5" y="243.5" width="3.9" height="0.9" fill="#4858d0" opacity="0.25"/>
<rect x="543.7" y="263.5" width="1.8" height="0.9" fill="#7070e0" opacity="0.38"/>
<rect x="548.5" y="234.2" width="3.4" height="0.9" fill="#9090e8" opacity="0.16"/>
<rect x="554.0" y="258.9" width="2.8" height="0.9" fill="#4858d0" opacity="0.28"/>
<rect x="548.9" y="289.6" width="1.7" height="0.9" fill="#4858d0" opacity="0.23"/>
<rect x="537.3" y="362.8" width="2.6" height="0.9" fill="#7070e0" opacity="0.35"/>
<rect x="522.1" y="370.5" width="3.6" height="0.9" fill="#5060d8" opacity="0.29"/>
<rect x="551.5" y="301.2" width="4.0" height="0.9" fill="#4858d0" opacity="0.29"/>
<rect x="525.2" y="315.1" width="4.3" height="0.9" fill="#7070e0" opacity="0.36"/>
<rect x="578.1" y="261.9" width="5.5" height="0.9" fill="#5060d8" opacity="0.38"/>
<rect x="571.3" y="251.2" width="6.0" height="0.9" fill="#5060d8" opacity="0.17"/>
<rect x="579.7" y="265.7" width="4.2" height="0.9" fill="#7070e0" opacity="0.36"/>
<rect x="530.7" y="307.7" width="2.6" height="0.9" fill="#4858d0" opacity="0.26"/>
<rect x="552.7" y="344.0" width="1.6" height="0.9" fill="#5060d8" opacity="0.28"/>
<rect x="556.4" y="290.2" width="2.6" height="0.9" fill="#5060d8" opacity="0.21"/>
<rect x="578.4" y="241.3" width="2.7" height="0.9" fill="#7070e0" opacity="0.35"/>
<rect x="568.0" y="288.4" width="2.0" height="0.9" fill="#9090e8" opacity="0.33"/>
<rect x="532.7" y="383.3" width="5.1" height="0.9" fill="#5060d8" opacity="0.26"/>
<rect x="574.3" y="281.6" width="6.2" height="0.9" fill="#9090e8" opacity="0.34"/>
<rect x="538.9" y="238.4" width="2.5" height="0.9" fill="#7070e0" opacity="0.22"/>
<rect x="535.1" y="266.1" width="4.6" height="0.9" fill="#5060d8" opacity="0.25"/>
<rect x="555.7" y="272.7" width="3.5" height="0.9" fill="#9090e8" opacity="0.34"/>
<rect x="549.3" y="324.9" width="2.5" height="0.9" fill="#9090e8" opacity="0.30"/>
<rect x="579.0" y="245.3" width="3.5" height="0.9" fill="#9090e8" opacity="0.33"/>
<rect x="534.9" y="372.9" width="5.2" height="0.9" fill="#5060d8" opacity="0.15"/>
<rect x="541.0" y="390.6" width="2.3" height="0.9" fill="#9090e8" opacity="0.15"/>
<rect x="557.8" y="373.1" width="1.8" height="0.9" fill="#9090e8" opacity="0.27"/>
<rect x="551.1" y="228.8" width="5.0" height="0.9" fill="#7070e0" opacity="0.26"/>
<rect x="533.8" y="247.9" width="5.7" height="0.9" fill="#4858d0" opacity="0.21"/>
<rect x="532.1" y="386.0" width="3.8" height="0.9" fill="#4858d0" opacity="0.23"/>
<rect x="522.7" y="294.5" width="4.2" height="0.9" fill="#4858d0" opacity="0.28"/>
<rect x="521.9" y="326.7" width="1.9" height="0.9" fill="#9090e8" opacity="0.18"/>
<rect x="526.3" y="411.5" width="5.8" height="0.9" fill="#7070e0" opacity="0.32"/>
<rect x="538.7" y="407.8" width="3.3" height="0.9" fill="#5060d8" opacity="0.34"/>
<rect x="574.2" y="385.6" width="6.4" height="0.9" fill="#5060d8" opacity="0.38"/>
<rect x="562.7" y="256.4" width="4.0" height="0.9" fill="#9090e8" opacity="0.32"/>
<rect x="582.0" y="376.2" width="4.9" height="0.9" fill="#5060d8" opacity="0.17"/>
<rect x="561.5" y="370.0" width="2.5" height="0.9" fill="#5060d8" opacity="0.21"/>
<rect x="522.5" y="350.9" width="2.6" height="0.9" fill="#4858d0" opacity="0.15"/>
<rect x="579.5" y="322.0" width="2.6" height="0.9" fill="#4858d0" opacity="0.32"/>
<rect x="568.4" y="342.8" width="5.0" height="0.9" fill="#5060d8" opacity="0.35"/>
<rect x="560.5" y="358.4" width="1.6" height="0.9" fill="#4858d0" opacity="0.17"/>
<rect x="547.4" y="385.9" width="4.1" height="0.9" fill="#4858d0" opacity="0.17"/>
<rect x="570.0" y="363.5" width="5.8" height="0.9" fill="#9090e8" opacity="0.16"/>
<rect x="554.0" y="369.1" width="3.2" height="0.9" fill="#4858d0" opacity="0.20"/>
<rect x="552.7" y="397.4" width="3.0" height="0.9" fill="#9090e8" opacity="0.32"/>
<rect x="538.5" y="372.6" width="1.9" height="0.9" fill="#4858d0" opacity="0.32"/>
<rect x="546.1" y="337.9" width="6.3" height="0.9" fill="#4858d0" opacity="0.34"/>
<rect x="558.3" y="400.1" width="1.5" height="0.9" fill="#9090e8" opacity="0.25"/>
<rect x="563.2" y="235.4" width="4.1" height="0.9" fill="#9090e8" opacity="0.29"/>
<rect x="553.9" y="319.1" width="4.0" height="0.9" fill="#7070e0" opacity="0.34"/>
<rect x="524.5" y="414.7" width="5.0" height="0.9" fill="#4858d0" opacity="0.33"/>
<rect x="532.1" y="300.2" width="5.8" height="0.9" fill="#7070e0" opacity="0.37"/>
<rect x="535.8" y="397.4" width="6.5" height="0.9" fill="#7070e0" opacity="0.29"/>
<rect x="564.5" y="270.2" width="2.1" height="0.9" fill="#9090e8" opacity="0.30"/>
<rect x="561.6" y="379.5" width="1.5" height="0.9" fill="#4858d0" opacity="0.21"/>
<rect x="577.5" y="338.8" width="4.7" height="0.9" fill="#9090e8" opacity="0.18"/>
<rect x="556.6" y="312.3" width="3.1" height="0.9" fill="#4858d0" opacity="0.22"/>
<rect x="557.7" y="237.2" width="3.3" height="0.9" fill="#5060d8" opacity="0.22"/>
<rect x="526.1" y="226.3" width="2.3" height="0.9" fill="#5060d8" opacity="0.18"/>
<rect x="573.2" y="294.3" width="3.9" height="0.9" fill="#5060d8" opacity="0.14"/>
<rect x="563.3" y="328.6" width="3.1" height="0.9" fill="#9090e8" opacity="0.27"/>
<rect x="570.8" y="291.4" width="3.2" height="0.9" fill="#4858d0" opacity="0.18"/>
<rect x="565.3" y="306.4" width="1.8" height="0.9" fill="#4858d0" opacity="0.34"/>
<rect x="562.7" y="402.0" width="4.6" height="0.9" fill="#9090e8" opacity="0.24"/>
<rect x="522.6" y="294.3" width="6.3" height="0.9" fill="#5060d8" opacity="0.24"/>
<rect x="566.3" y="233.4" width="3.6" height="0.9" fill="#7070e0" opacity="0.30"/>
<rect x="522.5" y="385.6" width="2.8" height="0.9" fill="#9090e8" opacity="0.18"/>
<rect x="541.1" y="397.4" width="3.6" height="0.9" fill="#5060d8" opacity="0.36"/>
<rect x="542.6" y="357.2" width="4.0" height="0.9" fill="#4858d0" opacity="0.23"/>
<rect x="560.2" y="292.5" width="2.6" height="0.9" fill="#5060d8" opacity="0.20"/>
<rect x="539.3" y="254.9" width="2.2" height="0.9" fill="#4858d0" opacity="0.38"/>
<rect x="553.0" y="369.3" width="5.6" height="0.9" fill="#4858d0" opacity="0.35"/>
<rect x="574.3" y="256.4" width="5.7" height="0.9" fill="#4858d0" opacity="0.32"/>
<rect x="534.7" y="299.5" width="4.8" height="0.9" fill="#7070e0" opacity="0.35"/>
<rect x="543.1" y="350.8" width="5.5" height="0.9" fill="#9090e8" opacity="0.21"/>
<rect x="560.6" y="396.8" width="3.4" height="0.9" fill="#4858d0" opacity="0.18"/>
<rect x="526.8" y="290.4" width="6.4" height="0.9" fill="#9090e8" opacity="0.35"/>
<rect x="537.5" y="369.1" width="2.5" height="0.9" fill="#4858d0" opacity="0.30"/>
<rect x="567.4" y="265.6" width="4.1" height="0.9" fill="#9090e8" opacity="0.35"/>
<rect x="537.8" y="275.1" width="6.0" height="0.9" fill="#5060d8" opacity="0.38"/>
<rect x="558.6" y="246.1" width="6.2" height="0.9" fill="#4858d0" opacity="0.34"/>
<rect x="572.8" y="231.0" width="4.6" height="0.9" fill="#9090e8" opacity="0.21"/>
<rect x="568.2" y="292.8" width="2.2" height="0.9" fill="#7070e0" opacity="0.33"/>
<rect x="568.4" y="314.8" width="3.4" height="0.9" fill="#7070e0" opacity="0.18"/>
<rect x="567.1" y="388.0" width="5.3" height="0.9" fill="#5060d8" opacity="0.19"/>
<rect x="583.4" y="292.4" width="4.9" height="0.9" fill="#5060d8" opacity="0.27"/>
<rect x="528.9" y="307.2" width="3.5" height="0.9" fill="#4858d0" opacity="0.34"/>
<rect x="577.7" y="292.5" width="3.5" height="0.9" fill="#5060d8" opacity="0.25"/>
<rect x="565.1" y="262.0" width="3.7" height="0.9" fill="#5060d8" opacity="0.20"/>
<rect x="538.0" y="238.0" width="4.2" height="0.9" fill="#9090e8" opacity="0.32"/>
<rect x="555.8" y="381.9" width="4.6" height="0.9" fill="#9090e8" opacity="0.35"/>
<rect x="528.2" y="234.3" width="4.4" height="0.9" fill="#7070e0" opacity="0.19"/>
<rect x="571.9" y="267.8" width="2.5" height="0.9" fill="#7070e0" opacity="0.27"/>
<rect x="547.8" y="241.4" width="4.0" height="0.9" fill="#5060d8" opacity="0.36"/>
<rect x="532.8" y="380.7" width="5.4" height="0.9" fill="#4858d0" opacity="0.33"/>
<rect x="528.7" y="245.7" width="1.8" height="0.9" fill="#9090e8" opacity="0.30"/>
<rect x="531.2" y="386.1" width="2.4" height="0.9" fill="#9090e8" opacity="0.16"/>
<rect x="562.4" y="317.4" width="2.2" height="0.9" fill="#7070e0" opacity="0.29"/>
<rect x="577.5" y="277.8" width="1.8" height="0.9" fill="#7070e0" opacity="0.29"/>
<rect x="541.9" y="381.2" width="1.8" height="0.9" fill="#7070e0" opacity="0.18"/>
<rect x="548.7" y="342.9" width="5.3" height="0.9" fill="#7070e0" opacity="0.35"/>
<rect x="571.7" y="387.7" width="4.3" height="0.9" fill="#9090e8" opacity="0.31"/>
<rect x="547.6" y="330.9" width="1.6" height="0.9" fill="#5060d8" opacity="0.25"/>
<rect x="536.1" y="320.4" width="3.5" height="0.9" fill="#7070e0" opacity="0.19"/>
<rect x="579.0" y="393.4" width="2.8" height="0.9" fill="#7070e0" opacity="0.25"/>
<rect x="575.1" y="389.3" width="6.4" height="0.9" fill="#5060d8" opacity="0.28"/>
<rect x="537.8" y="246.6" width="3.6" height="0.9" fill="#7070e0" opacity="0.16"/>
<rect x="521.3" y="401.4" width="6.3" height="0.9" fill="#7070e0" opacity="0.22"/>
<rect x="577.2" y="340.4" width="3.2" height="0.9" fill="#4858d0" opacity="0.21"/>
<rect x="526.6" y="383.2" width="5.9" height="0.9" fill="#5060d8" opacity="0.14"/>
<rect x="524.3" y="293.2" width="2.4" height="0.9" fill="#5060d8" opacity="0.15"/>
<rect x="566.5" y="278.4" width="6.4" height="0.9" fill="#5060d8" opacity="0.34"/>
<rect x="564.2" y="381.2" width="3.4" height="0.9" fill="#9090e8" opacity="0.22"/>
<rect x="541.7" y="385.4" width="4.7" height="0.9" fill="#5060d8" opacity="0.22"/>
<rect x="554.9" y="335.1" width="4.6" height="0.9" fill="#7070e0" opacity="0.23"/>
<rect x="559.6" y="240.7" width="3.9" height="0.9" fill="#5060d8" opacity="0.23"/>
<rect x="557.4" y="407.7" width="6.2" height="0.9" fill="#9090e8" opacity="0.30"/>
<rect x="555.0" y="262.1" width="4.4" height="0.9" fill="#4858d0" opacity="0.37"/>
<rect x="538.8" y="345.5" width="5.0" height="0.9" fill="#7070e0" opacity="0.18"/>
<rect x="561.6" y="355.1" width="4.3" height="0.9" fill="#7070e0" opacity="0.18"/>
<rect x="542.3" y="410.4" width="5.0" height="0.9" fill="#4858d0" opacity="0.32"/>
<rect x="540.1" y="322.5" width="3.5" height="0.9" fill="#4858d0" opacity="0.33"/>
<rect x="566.5" y="282.7" width="4.5" height="0.9" fill="#9090e8" opacity="0.35"/>
<rect x="583.3" y="240.2" width="4.6" height="0.9" fill="#9090e8" opacity="0.31"/>
<rect x="584.3" y="281.4" width="3.8" height="0.9" fill="#4858d0" opacity="0.18"/>
<rect x="546.8" y="245.6" width="4.0" height="0.9" fill="#4858d0" opacity="0.21"/>
<rect x="556.6" y="365.1" width="2.9" height="0.9" fill="#9090e8" opacity="0.16"/>
<rect x="532.6" y="337.5" width="1.7" height="0.9" fill="#4858d0" opacity="0.24"/>
<rect x="571.8" y="298.8" width="5.8" height="0.9" fill="#4858d0" opacity="0.33"/>
<rect x="523.3" y="254.3" width="6.3" height="0.9" fill="#4858d0" opacity="0.25"/>
<rect x="574.4" y="271.4" width="4.9" height="0.9" fill="#9090e8" opacity="0.17"/>
<rect x="577.4" y="333.3" width="6.1" height="0.9" fill="#9090e8" opacity="0.29"/>
<rect x="562.0" y="283.8" width="4.7" height="0.9" fill="#9090e8" opacity="0.26"/>
<rect x="532.9" y="367.8" width="5.1" height="0.9" fill="#5060d8" opacity="0.35"/>
<rect x="519.9" y="404.0" width="2.7" height="0.9" fill="#9090e8" opacity="0.28"/>
<rect x="562.5" y="238.2" width="1.5" height="0.9" fill="#5060d8" opacity="0.21"/>
<rect x="575.1" y="400.6" width="2.2" height="0.9" fill="#4858d0" opacity="0.20"/>
<rect x="552.7" y="307.7" width="1.8" height="0.9" fill="#5060d8" opacity="0.20"/>
<rect x="566.5" y="228.5" width="3.1" height="0.9" fill="#5060d8" opacity="0.24"/>
<rect x="540.5" y="405.0" width="3.9" height="0.9" fill="#7070e0" opacity="0.23"/>
<rect x="571.2" y="384.0" width="2.4" height="0.9" fill="#9090e8" opacity="0.23"/>
<rect x="528.5" y="288.2" width="5.9" height="0.9" fill="#4858d0" opacity="0.16"/>
<rect x="541.6" y="384.1" width="2.0" height="0.9" fill="#7070e0" opacity="0.25"/>
<rect x="551.1" y="282.9" width="3.0" height="0.9" fill="#5060d8" opacity="0.24"/>
<rect x="573.8" y="261.4" width="6.0" height="0.9" fill="#7070e0" opacity="0.20"/>
<rect x="532.0" y="398.3" width="2.4" height="0.9" fill="#5060d8" opacity="0.31"/>
<rect x="531.9" y="389.0" width="4.7" height="0.9" fill="#9090e8" opacity="0.33"/>
<rect x="524.9" y="368.6" width="5.8" height="0.9" fill="#4858d0" opacity="0.31"/>
<rect x="540.0" y="271.7" width="3.0" height="0.9" fill="#9090e8" opacity="0.25"/>
<rect x="540.2" y="396.3" width="3.0" height="0.9" fill="#4858d0" opacity="0.28"/>
<rect x="525.7" y="396.1" width="3.2" height="0.9" fill="#7070e0" opacity="0.31"/>
<rect x="580.5" y="274.5" width="2.6" height="0.9" fill="#4858d0" opacity="0.21"/>
<rect x="579.4" y="262.6" width="3.3" height="0.9" fill="#5060d8" opacity="0.25"/>
<rect x="554.1" y="247.2" width="2.4" height="0.9" fill="#7070e0" opacity="0.15"/>
<rect x="561.3" y="236.7" width="1.5" height="0.9" fill="#7070e0" opacity="0.21"/>
<rect x="530.7" y="395.4" width="3.7" height="0.9" fill="#7070e0" opacity="0.38"/>
<rect x="583.4" y="284.9" width="4.5" height="0.9" fill="#7070e0" opacity="0.31"/>
<rect x="546.0" y="391.5" width="5.1" height="0.9" fill="#4858d0" opacity="0.20"/>
<rect x="526.9" y="411.1" width="4.3" height="0.9" fill="#5060d8" opacity="0.34"/>
<rect x="551.6" y="322.9" width="2.8" height="0.9" fill="#9090e8" opacity="0.21"/>
<rect x="571.9" y="279.3" width="1.9" height="0.9" fill="#5060d8" opacity="0.17"/>
<rect x="570.7" y="306.0" width="6.2" height="0.9" fill="#7070e0" opacity="0.34"/>
<rect x="538.6" y="311.1" width="4.6" height="0.9" fill="#5060d8" opacity="0.23"/>
<rect x="575.2" y="227.0" width="4.3" height="0.9" fill="#9090e8" opacity="0.30"/>
<rect x="578.7" y="273.5" width="3.3" height="0.9" fill="#7070e0" opacity="0.32"/>
<rect x="571.8" y="257.9" width="4.5" height="0.9" fill="#5060d8" opacity="0.24"/>
<rect x="581.2" y="309.2" width="6.3" height="0.9" fill="#4858d0" opacity="0.20"/>
<rect x="553.6" y="287.2" width="2.8" height="0.9" fill="#9090e8" opacity="0.15"/>
<rect x="555.8" y="336.2" width="5.6" height="0.9" fill="#4858d0" opacity="0.28"/>
<rect x="560.3" y="347.9" width="5.3" height="0.9" fill="#4858d0" opacity="0.25"/>
<rect x="581.6" y="290.0" width="5.3" height="0.9" fill="#9090e8" opacity="0.34"/>
<rect x="555.6" y="272.7" width="3.1" height="0.9" fill="#5060d8" opacity="0.15"/>
<rect x="530.1" y="329.4" width="6.2" height="0.9" fill="#5060d8" opacity="0.21"/>
<rect x="547.7" y="382.0" width="1.9" height="0.9" fill="#9090e8" opacity="0.21"/>
<rect x="539.3" y="293.0" width="2.6" height="0.9" fill="#9090e8" opacity="0.18"/>
<rect x="535.2" y="270.5" width="3.4" height="0.9" fill="#5060d8" opacity="0.15"/>
<rect x="547.9" y="318.0" width="4.8" height="0.9" fill="#4858d0" opacity="0.31"/>
<rect x="544.8" y="296.6" width="5.1" height="0.9" fill="#5060d8" opacity="0.34"/>
<rect x="528.0" y="305.6" width="4.4" height="0.9" fill="#7070e0" opacity="0.34"/>
<rect x="534.1" y="291.4" width="2.9" height="0.9" fill="#4858d0" opacity="0.20"/>
<rect x="563.0" y="405.8" width="1.5" height="0.9" fill="#5060d8" opacity="0.28"/>
<rect x="560.0" y="241.9" width="3.0" height="0.9" fill="#4858d0" opacity="0.37"/>
<rect x="566.3" y="249.9" width="3.2" height="0.9" fill="#5060d8" opacity="0.18"/>
<rect x="561.3" y="249.6" width="5.1" height="0.9" fill="#7070e0" opacity="0.27"/>
<rect x="561.1" y="353.4" width="5.8" height="0.9" fill="#4858d0" opacity="0.21"/>
<rect x="556.6" y="264.5" width="4.4" height="0.9" fill="#9090e8" opacity="0.29"/>
<rect x="542.1" y="374.0" width="4.4" height="0.9" fill="#7070e0" opacity="0.23"/>
<rect x="539.9" y="293.9" width="6.0" height="0.9" fill="#9090e8" opacity="0.32"/>
<rect x="544.2" y="304.6" width="5.9" height="0.9" fill="#4858d0" opacity="0.16"/>
<rect x="546.3" y="391.3" width="3.7" height="0.9" fill="#4858d0" opacity="0.23"/>
<rect x="541.7" y="400.7" width="5.2" height="0.9" fill="#7070e0" opacity="0.34"/>
<rect x="528.5" y="247.8" width="5.7" height="0.9" fill="#9090e8" opacity="0.25"/>
<rect x="578.5" y="312.9" width="5.2" height="0.9" fill="#5060d8" opacity="0.32"/>
<rect x="576.3" y="225.1" width="3.0" height="0.9" fill="#4858d0" opacity="0.21"/>
<rect x="543.6" y="367.4" width="4.5" height="0.9" fill="#9090e8" opacity="0.24"/>
<rect x="572.2" y="293.1" width="4.7" height="0.9" fill="#4858d0" opacity="0.37"/>
<rect x="534.5" y="270.1" width="6.2" height="0.9" fill="#7070e0" opacity="0.17"/>
<rect x="577.8" y="372.4" width="2.8" height="0.9" fill="#4858d0" opacity="0.21"/>
<rect x="551.6" y="374.6" width="3.9" height="0.9" fill="#5060d8" opacity="0.24"/>
<rect x="551.0" y="296.9" width="2.7" height="0.9" fill="#4858d0" opacity="0.16"/>
<rect x="584.3" y="274.3" width="5.2" height="0.9" fill="#5060d8" opacity="0.32"/>
<rect x="547.1" y="250.4" width="6.2" height="0.9" fill="#5060d8" opacity="0.34"/>
<rect x="567.8" y="360.1" width="6.1" height="0.9" fill="#4858d0" opacity="0.22"/>
<rect x="528.5" y="338.6" width="4.5" height="0.9" fill="#9090e8" opacity="0.21"/>
<rect x="528.5" y="272.1" width="3.3" height="0.9" fill="#5060d8" opacity="0.25"/>
<rect x="544.5" y="330.2" width="4.2" height="0.9" fill="#4858d0" opacity="0.30"/>
<rect x="520.1" y="379.6" width="6.0" height="0.9" fill="#9090e8" opacity="0.35"/>
<rect x="559.3" y="284.7" width="2.2" height="0.9" fill="#9090e8" opacity="0.21"/>
<rect x="567.5" y="272.5" width="3.8" height="0.9" fill="#7070e0" opacity="0.26"/>
<rect x="535.3" y="379.7" width="5.6" height="0.9" fill="#5060d8" opacity="0.34"/>
<rect x="570.5" y="346.6" width="3.0" height="0.9" fill="#7070e0" opacity="0.27"/>
<rect x="529.0" y="229.4" width="5.3" height="0.9" fill="#4858d0" opacity="0.27"/>
<rect x="560.3" y="247.0" width="6.5" height="0.9" fill="#7070e0" opacity="0.27"/>
<rect x="547.3" y="318.6" width="4.5" height="0.9" fill="#9090e8" opacity="0.20"/>
<rect x="577.9" y="364.2" width="5.9" height="0.9" fill="#4858d0" opacity="0.16"/>
<rect x="544.6" y="406.4" width="2.5" height="0.9" fill="#7070e0" opacity="0.23"/>
<rect x="522.8" y="263.1" width="5.1" height="0.9" fill="#5060d8" opacity="0.33"/>
<rect x="528.9" y="289.9" width="4.1" height="0.9" fill="#4858d0" opacity="0.19"/>
<rect x="555.2" y="336.1" width="3.2" height="0.9" fill="#4858d0" opacity="0.30"/>
<rect x="556.5" y="397.1" width="6.3" height="0.9" fill="#4858d0" opacity="0.37"/>
<rect x="554.1" y="367.8" width="4.0" height="0.9" fill="#9090e8" opacity="0.14"/>
<rect x="555.6" y="308.7" width="2.0" height="0.9" fill="#5060d8" opacity="0.38"/>
<rect x="583.9" y="296.0" width="5.3" height="0.9" fill="#9090e8" opacity="0.33"/>
<rect x="527.2" y="332.2" width="3.9" height="0.9" fill="#4858d0" opacity="0.27"/>
<rect x="571.1" y="373.6" width="5.7" height="0.9" fill="#9090e8" opacity="0.31"/>
<rect x="575.2" y="318.6" width="1.6" height="0.9" fill="#7070e0" opacity="0.20"/>
<rect x="542.0" y="404.2" width="4.6" height="0.9" fill="#4858d0" opacity="0.31"/>
<rect x="555.6" y="253.8" width="5.1" height="0.9" fill="#7070e0" opacity="0.36"/>
<rect x="553.6" y="275.1" width="6.4" height="0.9" fill="#5060d8" opacity="0.34"/>
<rect x="545.0" y="340.4" width="5.5" height="0.9" fill="#7070e0" opacity="0.31"/>
<rect x="570.0" y="382.2" width="1.7" height="0.9" fill="#7070e0" opacity="0.31"/>
<rect x="570.4" y="389.2" width="4.6" height="0.9" fill="#5060d8" opacity="0.16"/>
<rect x="567.1" y="340.2" width="2.6" height="0.9" fill="#5060d8" opacity="0.33"/>
<rect x="553.1" y="314.3" width="1.9" height="0.9" fill="#7070e0" opacity="0.15"/>
<rect x="560.1" y="266.1" width="3.5" height="0.9" fill="#5060d8" opacity="0.15"/>
<rect x="538.7" y="308.2" width="2.6" height="0.9" fill="#9090e8" opacity="0.30"/>
<rect x="561.6" y="384.4" width="3.8" height="0.9" fill="#9090e8" opacity="0.33"/>
<rect x="542.5" y="389.1" width="3.5" height="0.9" fill="#4858d0" opacity="0.15"/>
<rect x="580.7" y="311.6" width="5.8" height="0.9" fill="#9090e8" opacity="0.37"/>
<rect x="574.1" y="229.2" width="2.5" height="0.9" fill="#5060d8" opacity="0.35"/>
<rect x="565.3" y="275.5" width="5.0" height="0.9" fill="#7070e0" opacity="0.38"/>
<rect x="559.2" y="336.9" width="2.1" height="0.9" fill="#7070e0" opacity="0.37"/>
<rect x="533.2" y="279.0" width="4.0" height="0.9" fill="#9090e8" opacity="0.26"/>
<rect x="532.0" y="398.4" width="4.0" height="0.9" fill="#4858d0" opacity="0.32"/>
<rect x="527.4" y="274.3" width="6.5" height="0.9" fill="#9090e8" opacity="0.33"/>
<rect x="579.3" y="412.4" width="2.6" height="0.9" fill="#9090e8" opacity="0.17"/>
<rect x="567.9" y="268.2" width="4.1" height="0.9" fill="#7070e0" opacity="0.37"/>
<rect x="548.3" y="321.0" width="2.0" height="0.9" fill="#7070e0" opacity="0.38"/>
<rect x="577.1" y="355.7" width="4.3" height="0.9" fill="#9090e8" opacity="0.16"/>
<rect x="582.0" y="278.5" width="3.8" height="0.9" fill="#5060d8" opacity="0.38"/>
<rect x="567.6" y="260.9" width="6.2" height="0.9" fill="#9090e8" opacity="0.28"/>
<rect x="575.0" y="288.8" width="4.6" height="0.9" fill="#4858d0" opacity="0.26"/>
<rect x="573.3" y="329.4" width="3.2" height="0.9" fill="#5060d8" opacity="0.24"/>
<rect x="525.1" y="379.0" width="2.3" height="0.9" fill="#7070e0" opacity="0.17"/>
<rect x="561.2" y="276.5" width="2.0" height="0.9" fill="#4858d0" opacity="0.20"/>
<rect x="525.5" y="413.1" width="5.7" height="0.9" fill="#5060d8" opacity="0.21"/>
<rect x="567.1" y="369.5" width="4.5" height="0.9" fill="#9090e8" opacity="0.28"/>
<rect x="563.1" y="365.6" width="2.9" height="0.9" fill="#4858d0" opacity="0.25"/>
<rect x="539.1" y="395.2" width="4.3" height="0.9" fill="#7070e0" opacity="0.28"/>
<rect x="564.3" y="260.0" width="2.1" height="0.9" fill="#4858d0" opacity="0.21"/>
<rect x="569.7" y="255.2" width="2.6" height="0.9" fill="#4858d0" opacity="0.36"/>
<rect x="559.1" y="263.4" width="2.4" height="0.9" fill="#4858d0" opacity="0.21"/>
<rect x="536.8" y="283.0" width="2.9" height="0.9" fill="#9090e8" opacity="0.31"/>
<rect x="551.9" y="379.8" width="4.2" height="0.9" fill="#4858d0" opacity="0.23"/>
<rect x="566.0" y="354.7" width="5.1" height="0.9" fill="#4858d0" opacity="0.29"/>
<rect x="565.6" y="293.3" width="2.3" height="0.9" fill="#5060d8" opacity="0.30"/>
<rect x="572.0" y="237.8" width="6.0" height="0.9" fill="#5060d8" opacity="0.17"/>
<rect x="532.6" y="412.5" width="4.6" height="0.9" fill="#9090e8" opacity="0.19"/>
<rect x="524.5" y="266.5" width="2.9" height="0.9" fill="#7070e0" opacity="0.33"/>
<rect x="528.6" y="409.4" width="5.7" height="0.9" fill="#9090e8" opacity="0.22"/>
<rect x="550.2" y="258.4" width="3.4" height="0.9" fill="#9090e8" opacity="0.30"/>
<rect x="534.3" y="267.0" width="2.1" height="0.9" fill="#4858d0" opacity="0.23"/>
<rect x="562.2" y="332.3" width="3.3" height="0.9" fill="#4858d0" opacity="0.25"/>
<rect x="561.5" y="366.7" width="3.2" height="0.9" fill="#7070e0" opacity="0.15"/>
<rect x="575.0" y="314.5" width="5.9" height="0.9" fill="#4858d0" opacity="0.27"/>
<rect x="560.5" y="239.2" width="3.7" height="0.9" fill="#5060d8" opacity="0.38"/>
<rect x="570.8" y="239.1" width="6.5" height="0.9" fill="#9090e8" opacity="0.19"/>
<rect x="531.4" y="280.4" width="6.1" height="0.9" fill="#9090e8" opacity="0.33"/>
<rect x="570.1" y="293.4" width="3.3" height="0.9" fill="#9090e8" opacity="0.18"/>
<rect x="572.8" y="379.6" width="5.1" height="0.9" fill="#9090e8" opacity="0.33"/>
<rect x="547.6" y="314.3" width="4.3" height="0.9" fill="#4858d0" opacity="0.21"/>
<rect x="573.9" y="391.8" width="6.3" height="0.9" fill="#4858d0" opacity="0.37"/>
<rect x="553.2" y="255.9" width="5.8" height="0.9" fill="#4858d0" opacity="0.34"/>
<rect x="536.2" y="280.7" width="4.2" height="0.9" fill="#7070e0" opacity="0.37"/>
<rect x="562.1" y="289.3" width="3.6" height="0.9" fill="#9090e8" opacity="0.35"/>
<rect x="552.9" y="370.2" width="1.7" height="0.9" fill="#9090e8" opacity="0.35"/>
<rect x="551.6" y="326.1" width="2.8" height="0.9" fill="#5060d8" opacity="0.35"/>
<rect x="530.0" y="327.4" width="6.2" height="0.9" fill="#4858d0" opacity="0.27"/>
<rect x="578.0" y="335.4" width="5.2" height="0.9" fill="#9090e8" opacity="0.30"/>
<rect x="542.7" y="251.6" width="1.6" height="0.9" fill="#7070e0" opacity="0.20"/>
<rect x="525.1" y="321.7" width="5.5" height="0.9" fill="#7070e0" opacity="0.22"/>
<rect x="549.1" y="355.9" width="5.2" height="0.9" fill="#5060d8" opacity="0.25"/>
<rect x="534.9" y="363.1" width="6.5" height="0.9" fill="#7070e0" opacity="0.27"/>
<rect x="545.8" y="227.1" width="1.5" height="0.9" fill="#4858d0" opacity="0.16"/>
<rect x="580.8" y="253.5" width="5.9" height="0.9" fill="#4858d0" opacity="0.21"/>
<rect x="529.7" y="320.7" width="4.3" height="0.9" fill="#5060d8" opacity="0.37"/>
<rect x="564.2" y="245.7" width="2.7" height="0.9" fill="#5060d8" opacity="0.26"/>
<rect x="568.5" y="362.2" width="2.2" height="0.9" fill="#5060d8" opacity="0.27"/>
<rect x="538.0" y="414.3" width="1.7" height="0.9" fill="#5060d8" opacity="0.15"/>
<rect x="535.7" y="352.0" width="1.6" height="0.9" fill="#9090e8" opacity="0.33"/>
<rect x="569.9" y="226.4" width="6.4" height="0.9" fill="#4858d0" opacity="0.35"/>
<rect x="559.3" y="308.6" width="2.1" height="0.9" fill="#7070e0" opacity="0.30"/>
<rect x="524.9" y="302.0" width="2.4" height="0.9" fill="#4858d0" opacity="0.29"/>
<rect x="554.5" y="241.8" width="1.8" height="0.9" fill="#9090e8" opacity="0.20"/>
<rect x="581.9" y="353.3" width="3.9" height="0.9" fill="#9090e8" opacity="0.33"/>
<rect x="555.7" y="355.3" width="5.3" height="0.9" fill="#5060d8" opacity="0.24"/>
<rect x="550.0" y="300.0" width="6.4" height="0.9" fill="#4858d0" opacity="0.21"/>
<rect x="543.5" y="353.4" width="2.2" height="0.9" fill="#7070e0" opacity="0.18"/>
<rect x="565.5" y="314.4" width="2.8" height="0.9" fill="#9090e8" opacity="0.25"/>
<rect x="548.6" y="294.4" width="1.6" height="0.9" fill="#7070e0" opacity="0.23"/>
<rect x="544.1" y="359.7" width="1.6" height="0.9" fill="#7070e0" opacity="0.18"/>
<rect x="528.2" y="346.6" width="5.4" height="0.9" fill="#9090e8" opacity="0.28"/>
<rect x="572.7" y="387.1" width="4.9" height="0.9" fill="#7070e0" opacity="0.30"/>
<rect x="524.5" y="328.2" width="6.1" height="0.9" fill="#7070e0" opacity="0.28"/>
<rect x="562.9" y="255.9" width="5.7" height="0.9" fill="#9090e8" opacity="0.26"/>
<rect x="578.5" y="379.2" width="5.1" height="0.9" fill="#5060d8" opacity="0.17"/>
<rect x="569.2" y="270.8" width="5.1" height="0.9" fill="#7070e0" opacity="0.20"/>
<rect x="550.3" y="322.5" width="6.1" height="0.9" fill="#4858d0" opacity="0.37"/>
<rect x="561.2" y="308.9" width="6.4" height="0.9" fill="#5060d8" opacity="0.18"/>
<rect x="536.1" y="249.7" width="2.1" height="0.9" fill="#5060d8" opacity="0.27"/>
<rect x="544.4" y="315.5" width="4.0" height="0.9" fill="#4858d0" opacity="0.16"/>
<rect x="524.9" y="258.7" width="2.4" height="0.9" fill="#4858d0" opacity="0.35"/>
<rect x="531.0" y="367.5" width="3.6" height="0.9" fill="#5060d8" opacity="0.23"/>
<rect x="534.2" y="333.8" width="5.6" height="0.9" fill="#9090e8" opacity="0.26"/>
<rect x="572.8" y="306.2" width="5.1" height="0.9" fill="#7070e0" opacity="0.24"/>
<rect x="528.7" y="309.5" width="3.5" height="0.9" fill="#9090e8" opacity="0.35"/>
<rect x="568.8" y="400.2" width="1.9" height="0.9" fill="#9090e8" opacity="0.36"/>
<rect x="541.0" y="281.5" width="4.2" height="0.9" fill="#9090e8" opacity="0.20"/>
<rect x="550.1" y="290.0" width="2.5" height="0.9" fill="#5060d8" opacity="0.16"/>
<rect x="553.2" y="290.5" width="1.5" height="0.9" fill="#9090e8" opacity="0.32"/>
<rect x="523.4" y="303.1" width="5.3" height="0.9" fill="#9090e8" opacity="0.33"/>
<rect x="556.0" y="346.7" width="2.6" height="0.9" fill="#9090e8" opacity="0.35"/>
<rect x="543.0" y="323.7" width="2.3" height="0.9" fill="#5060d8" opacity="0.21"/>
<rect x="532.2" y="354.6" width="6.4" height="0.9" fill="#7070e0" opacity="0.15"/>
<rect x="563.7" y="337.7" width="1.7" height="0.9" fill="#5060d8" opacity="0.22"/>
<rect x="527.6" y="346.3" width="5.7" height="0.9" fill="#9090e8" opacity="0.20"/>
<rect x="581.0" y="362.2" width="3.7" height="0.9" fill="#7070e0" opacity="0.31"/>
<rect x="550.1" y="276.9" width="5.7" height="0.9" fill="#4858d0" opacity="0.30"/>
<rect x="532.1" y="400.0" width="3.5" height="0.9" fill="#5060d8" opacity="0.28"/>
<rect x="537.3" y="356.6" width="3.9" height="0.9" fill="#4858d0" opacity="0.25"/>
<rect x="577.6" y="250.7" width="5.3" height="0.9" fill="#4858d0" opacity="0.25"/>
<rect x="556.4" y="402.9" width="3.3" height="0.9" fill="#7070e0" opacity="0.23"/>
<rect x="563.6" y="265.5" width="1.5" height="0.9" fill="#9090e8" opacity="0.37"/>
<rect x="532.8" y="321.6" width="6.4" height="0.9" fill="#7070e0" opacity="0.37"/>
<rect x="549.6" y="227.2" width="4.1" height="0.9" fill="#9090e8" opacity="0.28"/>
<rect x="549.3" y="282.0" width="5.2" height="0.9" fill="#7070e0" opacity="0.26"/>
<rect x="537.5" y="364.5" width="4.8" height="0.9" fill="#7070e0" opacity="0.24"/>
<rect x="522.7" y="343.3" width="4.9" height="0.9" fill="#4858d0" opacity="0.25"/>
<rect x="543.9" y="401.9" width="3.7" height="0.9" fill="#7070e0" opacity="0.15"/>
<rect x="556.2" y="253.5" width="3.2" height="0.9" fill="#5060d8" opacity="0.19"/>
<rect x="528.6" y="330.2" width="5.3" height="0.9" fill="#7070e0" opacity="0.32"/>
<rect x="535.0" y="399.2" width="1.6" height="0.9" fill="#9090e8" opacity="0.19"/>
<rect x="548.0" y="270.3" width="2.1" height="0.9" fill="#7070e0" opacity="0.14"/>
<rect x="567.0" y="402.2" width="2.7" height="0.9" fill="#5060d8" opacity="0.26"/>
<rect x="581.1" y="265.6" width="2.3" height="0.9" fill="#7070e0" opacity="0.24"/>
<rect x="539.7" y="380.0" width="1.9" height="0.9" fill="#5060d8" opacity="0.19"/>
<rect x="535.6" y="362.1" width="5.5" height="0.9" fill="#7070e0" opacity="0.15"/>
<rect x="533.6" y="323.6" width="3.3" height="0.9" fill="#5060d8" opacity="0.36"/>
<rect x="573.6" y="390.1" width="1.7" height="0.9" fill="#4858d0" opacity="0.27"/>
<rect x="584.2" y="253.5" width="2.1" height="0.9" fill="#4858d0" opacity="0.15"/>
<rect x="552.7" y="239.9" width="4.5" height="0.9" fill="#5060d8" opacity="0.22"/>
<rect x="575.2" y="226.4" width="4.9" height="0.9" fill="#5060d8" opacity="0.31"/>
<rect x="579.8" y="250.1" width="2.9" height="0.9" fill="#7070e0" opacity="0.31"/>
<rect x="543.1" y="287.5" width="4.0" height="0.9" fill="#7070e0" opacity="0.37"/>
<rect x="566.2" y="254.6" width="1.9" height="0.9" fill="#7070e0" opacity="0.23"/>
<rect x="522.7" y="347.9" width="5.4" height="0.9" fill="#7070e0" opacity="0.15"/>
<rect x="563.2" y="412.3" width="2.9" height="0.9" fill="#5060d8" opacity="0.28"/>
<rect x="543.1" y="344.7" width="4.8" height="0.9" fill="#4858d0" opacity="0.25"/>
<rect x="559.8" y="397.8" width="6.4" height="0.9" fill="#9090e8" opacity="0.38"/>
<rect x="578.9" y="313.5" width="4.8" height="0.9" fill="#5060d8" opacity="0.32"/>
<rect x="571.5" y="253.4" width="6.3" height="0.9" fill="#5060d8" opacity="0.34"/>
<rect x="570.9" y="383.6" width="5.9" height="0.9" fill="#4858d0" opacity="0.22"/>
<rect x="581.5" y="397.5" width="5.9" height="0.9" fill="#5060d8" opacity="0.15"/>
<rect x="525.5" y="229.4" width="4.8" height="0.9" fill="#9090e8" opacity="0.34"/>
<rect x="546.2" y="387.5" width="1.9" height="0.9" fill="#9090e8" opacity="0.26"/>
<rect x="555.7" y="358.8" width="4.0" height="0.9" fill="#9090e8" opacity="0.27"/>
<rect x="556.5" y="373.2" width="2.3" height="0.9" fill="#5060d8" opacity="0.16"/>
<rect x="530.7" y="387.2" width="3.3" height="0.9" fill="#9090e8" opacity="0.21"/>
<rect x="530.0" y="367.9" width="4.2" height="0.9" fill="#9090e8" opacity="0.32"/>
<rect x="560.8" y="322.1" width="3.2" height="0.9" fill="#5060d8" opacity="0.22"/>
<rect x="533.3" y="377.1" width="3.0" height="0.9" fill="#7070e0" opacity="0.25"/>
<rect x="575.5" y="257.1" width="4.0" height="0.9" fill="#7070e0" opacity="0.31"/>
<rect x="528.2" y="350.7" width="3.5" height="0.9" fill="#5060d8" opacity="0.17"/>
<rect x="574.3" y="248.2" width="1.5" height="0.9" fill="#5060d8" opacity="0.22"/>
<rect x="541.9" y="235.9" width="3.4" height="0.9" fill="#4858d0" opacity="0.27"/>
<rect x="522.1" y="394.3" width="2.5" height="0.9" fill="#4858d0" opacity="0.31"/>
<rect x="564.1" y="279.3" width="3.0" height="0.9" fill="#7070e0" opacity="0.16"/>
<rect x="526.0" y="288.0" width="6.1" height="0.9" fill="#5060d8" opacity="0.34"/>
<rect x="547.0" y="273.9" width="3.1" height="0.9" fill="#9090e8" opacity="0.34"/>
<rect x="527.0" y="402.9" width="2.9" height="0.9" fill="#5060d8" opacity="0.26"/>
<rect x="564.6" y="371.9" width="5.0" height="0.9" fill="#5060d8" opacity="0.36"/>
<rect x="555.8" y="300.9" width="6.3" height="0.9" fill="#7070e0" opacity="0.25"/>
<rect x="567.9" y="376.1" width="3.0" height="0.9" fill="#4858d0" opacity="0.36"/>
<rect x="556.7" y="283.4" width="2.9" height="0.9" fill="#4858d0" opacity="0.16"/>
<rect x="583.7" y="274.7" width="2.7" height="0.9" fill="#5060d8" opacity="0.32"/>
<rect x="555.1" y="376.2" width="4.9" height="0.9" fill="#7070e0" opacity="0.21"/>
<rect x="580.2" y="251.1" width="5.5" height="0.9" fill="#5060d8" opacity="0.20"/>
<rect x="564.7" y="393.0" width="6.1" height="0.9" fill="#9090e8" opacity="0.23"/>
<rect x="545.7" y="356.7" width="4.5" height="0.9" fill="#4858d0" opacity="0.25"/>
<rect x="528.1" y="302.6" width="5.9" height="0.9" fill="#4858d0" opacity="0.18"/>
<rect x="560.2" y="371.7" width="2.7" height="0.9" fill="#7070e0" opacity="0.27"/>
<rect x="553.4" y="266.0" width="5.7" height="0.9" fill="#4858d0" opacity="0.34"/>
<rect x="522.1" y="296.9" width="2.9" height="0.9" fill="#7070e0" opacity="0.25"/>
<rect x="575.7" y="253.0" width="5.0" height="0.9" fill="#9090e8" opacity="0.36"/>
<rect x="531.7" y="254.9" width="5.3" height="0.9" fill="#9090e8" opacity="0.20"/>
<rect x="537.5" y="247.2" width="5.8" height="0.9" fill="#9090e8" opacity="0.33"/>
<rect x="534.3" y="269.8" width="2.9" height="0.9" fill="#5060d8" opacity="0.17"/>
<rect x="550.7" y="335.3" width="5.7" height="0.9" fill="#4858d0" opacity="0.23"/>
<rect x="560.1" y="315.5" width="2.2" height="0.9" fill="#7070e0" opacity="0.28"/>
<rect x="571.4" y="292.3" width="3.1" height="0.9" fill="#7070e0" opacity="0.30"/>
<rect x="568.8" y="284.1" width="2.4" height="0.9" fill="#5060d8" opacity="0.14"/>
<rect x="573.5" y="377.1" width="3.1" height="0.9" fill="#9090e8" opacity="0.34"/>
<rect x="581.2" y="267.6" width="4.6" height="0.9" fill="#9090e8" opacity="0.22"/>
<rect x="575.6" y="306.0" width="2.1" height="0.9" fill="#9090e8" opacity="0.15"/>
<rect x="540.2" y="330.7" width="6.2" height="0.9" fill="#5060d8" opacity="0.25"/>
<rect x="545.1" y="281.4" width="4.2" height="0.9" fill="#7070e0" opacity="0.30"/>
<rect x="579.7" y="390.8" width="5.8" height="0.9" fill="#4858d0" opacity="0.20"/>
<rect x="556.3" y="344.0" width="5.1" height="0.9" fill="#4858d0" opacity="0.21"/>
<rect x="533.7" y="366.2" width="4.4" height="0.9" fill="#5060d8" opacity="0.26"/>
<rect x="556.6" y="291.3" width="5.4" height="0.9" fill="#7070e0" opacity="0.28"/>
<rect x="542.1" y="403.1" width="3.9" height="0.9" fill="#9090e8" opacity="0.19"/>
<rect x="528.3" y="293.9" width="4.4" height="0.9" fill="#4858d0" opacity="0.20"/>
<rect x="546.3" y="237.4" width="3.8" height="0.9" fill="#4858d0" opacity="0.30"/>
<rect x="522.6" y="328.5" width="4.3" height="0.9" fill="#5060d8" opacity="0.19"/>
<rect x="580.5" y="261.5" width="5.9" height="0.9" fill="#4858d0" opacity="0.19"/>
<rect x="570.2" y="370.1" width="4.5" height="0.9" fill="#9090e8" opacity="0.37"/>
<rect x="551.6" y="239.9" width="5.5" height="0.9" fill="#5060d8" opacity="0.17"/>
<rect x="539.5" y="372.4" width="2.3" height="0.9" fill="#4858d0" opacity="0.33"/>
<rect x="564.1" y="241.6" width="4.3" height="0.9" fill="#9090e8" opacity="0.19"/>
<rect x="557.0" y="261.0" width="5.6" height="0.9" fill="#4858d0" opacity="0.20"/>
<rect x="528.8" y="387.6" width="4.9" height="0.9" fill="#4858d0" opacity="0.15"/>
<rect x="545.1" y="253.7" width="2.0" height="0.9" fill="#4858d0" opacity="0.17"/>
<rect x="525.1" y="285.6" width="4.6" height="0.9" fill="#9090e8" opacity="0.31"/>
<rect x="523.6" y="255.9" width="1.9" height="0.9" fill="#4858d0" opacity="0.34"/>
<rect x="574.5" y="381.9" width="4.6" height="0.9" fill="#4858d0" opacity="0.34"/>
<rect x="551.7" y="306.2" width="3.3" height="0.9" fill="#7070e0" opacity="0.19"/>
<rect x="525.6" y="389.9" width="4.3" height="0.9" fill="#4858d0" opacity="0.25"/>
<rect x="546.1" y="367.0" width="1.9" height="0.9" fill="#9090e8" opacity="0.17"/>
<rect x="529.9" y="403.1" width="3.2" height="0.9" fill="#5060d8" opacity="0.27"/>
<rect x="530.1" y="353.1" width="3.4" height="0.9" fill="#7070e0" opacity="0.15"/>
<rect x="555.6" y="227.6" width="2.6" height="0.9" fill="#5060d8" opacity="0.37"/>
<rect x="570.4" y="283.4" width="5.0" height="0.9" fill="#7070e0" opacity="0.19"/>
<rect x="551.8" y="303.1" width="4.6" height="0.9" fill="#9090e8" opacity="0.31"/>
<rect x="546.2" y="350.2" width="2.1" height="0.9" fill="#4858d0" opacity="0.16"/>
<rect x="536.3" y="274.8" width="5.2" height="0.9" fill="#9090e8" opacity="0.29"/>
<rect x="540.4" y="396.1" width="2.2" height="0.9" fill="#5060d8" opacity="0.22"/>
<rect x="573.7" y="313.9" width="4.8" height="0.9" fill="#9090e8" opacity="0.37"/>
<rect x="530.8" y="280.7" width="6.4" height="0.9" fill="#5060d8" opacity="0.17"/>
<rect x="575.8" y="287.7" width="3.1" height="0.9" fill="#4858d0" opacity="0.30"/>
<rect x="569.6" y="388.4" width="1.8" height="0.9" fill="#9090e8" opacity="0.25"/>
<rect x="529.6" y="370.1" width="4.7" height="0.9" fill="#4858d0" opacity="0.18"/>
<rect x="551.2" y="226.3" width="3.5" height="0.9" fill="#5060d8" opacity="0.37"/>
<rect x="554.0" y="398.3" width="4.4" height="0.9" fill="#7070e0" opacity="0.32"/>
<rect x="536.8" y="308.5" width="4.7" height="0.9" fill="#5060d8" opacity="0.35"/>
<rect x="530.3" y="376.6" width="3.1" height="0.9" fill="#9090e8" opacity="0.29"/>
<rect x="580.9" y="294.5" width="3.4" height="0.9" fill="#4858d0" opacity="0.34"/>
<rect x="564.9" y="334.3" width="6.2" height="0.9" fill="#7070e0" opacity="0.31"/>
<rect x="526.3" y="305.9" width="4.9" height="0.9" fill="#9090e8" opacity="0.38"/>
<rect x="534.7" y="334.7" width="2.0" height="0.9" fill="#5060d8" opacity="0.15"/>
<rect x="568.1" y="285.3" width="5.9" height="0.9" fill="#7070e0" opacity="0.27"/>
<rect x="531.4" y="295.2" width="4.9" height="0.9" fill="#9090e8" opacity="0.20"/>
<rect x="566.4" y="326.6" width="5.1" height="0.9" fill="#7070e0" opacity="0.20"/>
<rect x="537.9" y="389.2" width="4.7" height="0.9" fill="#7070e0" opacity="0.33"/>
<rect x="566.8" y="249.6" width="3.7" height="0.9" fill="#4858d0" opacity="0.19"/>
<rect x="533.0" y="229.0" width="3.0" height="0.9" fill="#9090e8" opacity="0.21"/>
<rect x="574.0" y="407.2" width="2.8" height="0.9" fill="#9090e8" opacity="0.26"/>
<rect x="551.9" y="340.8" width="5.1" height="0.9" fill="#5060d8" opacity="0.16"/>
<rect x="556.1" y="389.5" width="5.5" height="0.9" fill="#7070e0" opacity="0.23"/>
<rect x="558.0" y="389.3" width="3.5" height="0.9" fill="#7070e0" opacity="0.17"/>
<rect x="567.2" y="282.3" width="3.0" height="0.9" fill="#7070e0" opacity="0.29"/>
<rect x="554.2" y="407.4" width="4.8" height="0.9" fill="#5060d8" opacity="0.28"/>
<rect x="561.8" y="228.1" width="6.3" height="0.9" fill="#4858d0" opacity="0.33"/>
<rect x="572.9" y="307.5" width="5.8" height="0.9" fill="#5060d8" opacity="0.26"/>
<rect x="552.7" y="359.1" width="6.4" height="0.9" fill="#5060d8" opacity="0.26"/>
<rect x="527.1" y="355.7" width="6.0" height="0.9" fill="#5060d8" opacity="0.17"/>
<rect x="543.8" y="390.5" width="4.8" height="0.9" fill="#5060d8" opacity="0.24"/>
<rect x="552.6" y="271.2" width="6.0" height="0.9" fill="#4858d0" opacity="0.15"/>
<rect x="528.1" y="264.3" width="5.8" height="0.9" fill="#7070e0" opacity="0.36"/>
<rect x="541.4" y="306.8" width="1.8" height="0.9" fill="#9090e8" opacity="0.36"/>
<rect x="524.8" y="264.5" width="1.6" height="0.9" fill="#7070e0" opacity="0.35"/>
<rect x="572.7" y="297.0" width="3.0" height="0.9" fill="#9090e8" opacity="0.21"/>
<rect x="575.4" y="343.8" width="5.9" height="0.9" fill="#4858d0" opacity="0.25"/>
<rect x="569.7" y="302.8" width="6.0" height="0.9" fill="#9090e8" opacity="0.23"/>
<rect x="570.3" y="387.5" width="5.7" height="0.9" fill="#4858d0" opacity="0.23"/>
<rect x="527.9" y="227.9" width="3.5" height="0.9" fill="#5060d8" opacity="0.25"/>
<rect x="540.2" y="372.8" width="2.4" height="0.9" fill="#5060d8" opacity="0.28"/>
<rect x="569.1" y="342.5" width="3.9" height="0.9" fill="#5060d8" opacity="0.18"/>
<rect x="553.4" y="354.6" width="2.5" height="0.9" fill="#7070e0" opacity="0.35"/>
<rect x="574.6" y="255.3" width="3.4" height="0.9" fill="#7070e0" opacity="0.21"/>
<rect x="544.3" y="345.9" width="3.4" height="0.9" fill="#5060d8" opacity="0.22"/>
<rect x="563.4" y="410.7" width="2.3" height="0.9" fill="#4858d0" opacity="0.24"/>
<rect x="578.2" y="236.6" width="2.6" height="0.9" fill="#4858d0" opacity="0.36"/>
<rect x="526.6" y="361.2" width="4.2" height="0.9" fill="#9090e8" opacity="0.35"/>
<rect x="545.5" y="352.1" width="6.2" height="0.9" fill="#7070e0" opacity="0.18"/>
<rect x="523.3" y="397.7" width="3.3" height="0.9" fill="#5060d8" opacity="0.22"/>
<rect x="580.9" y="371.9" width="5.0" height="0.9" fill="#7070e0" opacity="0.20"/>
<rect x="567.3" y="261.4" width="2.5" height="0.9" fill="#7070e0" opacity="0.27"/>
<rect x="566.6" y="252.3" width="6.5" height="0.9" fill="#9090e8" opacity="0.31"/>
<rect x="532.8" y="274.3" width="3.7" height="0.9" fill="#9090e8" opacity="0.15"/>
<rect x="572.0" y="297.6" width="3.6" height="0.9" fill="#9090e8" opacity="0.14"/>
<rect x="579.2" y="232.2" width="3.5" height="0.9" fill="#4858d0" opacity="0.19"/>
<rect x="556.2" y="274.3" width="6.2" height="0.9" fill="#5060d8" opacity="0.14"/>
<rect x="571.8" y="328.6" width="3.9" height="0.9" fill="#9090e8" opacity="0.27"/>
<rect x="564.7" y="269.0" width="2.4" height="0.9" fill="#9090e8" opacity="0.27"/>
<rect x="532.0" y="281.7" width="6.2" height="0.9" fill="#4858d0" opacity="0.29"/>
<rect x="570.2" y="231.2" width="5.3" height="0.9" fill="#5060d8" opacity="0.19"/>
<rect x="576.4" y="228.1" width="4.6" height="0.9" fill="#4858d0" opacity="0.30"/>
<path d="M508 181A48.5 17 0 0 1 605 181V212A48.5 17 0 0 1 508 212z" fill="#bfbfbf" opacity=".42"/>
<ellipse cx="556.5" cy="181" rx="48.5" ry="17" fill="#d2d2d2" opacity=".55" stroke="#b4b4b4" stroke-width=".8"/>
<path d="M508 212A48.5 17 0 0 0 605 212" fill="none" stroke="#b0b0b0" stroke-width=".8" opacity=".8"/>
<path d="M508 212A48.5 17 0 0 1 605 212" fill="none" stroke="#b8b8b8" stroke-width=".7" opacity=".6"/>
<path d="M508 181V212M605 181V212" stroke="#b8b8b8" stroke-width=".7" opacity=".7"/>
<path d="M518.5 196.5Q536 192 549 185M518.5 196.5V227" stroke="#a8a8a8" stroke-width=".8" fill="none" opacity=".8"/>
<g filter="url(#v2)"><path d="M530 216h57l-2 70l-3 40h-50z" fill="#b8e060" opacity=".28"/></g>
<g filter="url(#v1)" fill="none">
<ellipse cx="558" cy="212" rx="30.5" ry="9.5" stroke="#6a7ae0" stroke-width="1.6" opacity=".4"/>
<ellipse cx="558" cy="215" rx="30" ry="9.5" stroke="#58d050" stroke-width="1.8" opacity=".55"/>
<path d="M530.0 216.0A28 8.8 0 0 1 586.0 216.0" stroke="#f8b428" stroke-width="1.6" opacity="0.72"/>
<path d="M529.8 221.5A28 8.8 0 0 1 585.8 221.5" stroke="#f8b428" stroke-width="1.6" opacity="0.72"/>
<path d="M529.7 227.0A28 8.8 0 0 1 585.7 227.0" stroke="#f0bc28" stroke-width="1.6" opacity="0.72"/>
<path d="M529.6 232.5A28 8.8 0 0 1 585.6 232.5" stroke="#f8a820" stroke-width="1.6" opacity="0.72"/>
<path d="M529.4 238.0A28 8.8 0 0 1 585.4 238.0" stroke="#f0bc28" stroke-width="1.6" opacity="0.72"/>
<path d="M529.3 243.5A28 8.8 0 0 1 585.3 243.5" stroke="#e4d830" stroke-width="1.5" opacity="0.68"/>
<path d="M529.2 249.0A28 8.8 0 0 1 585.2 249.0" stroke="#e4d830" stroke-width="1.5" opacity="0.68"/>
<path d="M529.0 254.5A28 8.8 0 0 1 585.0 254.5" stroke="#e4d830" stroke-width="1.5" opacity="0.68"/>
<path d="M528.9 260.0A28 8.8 0 0 1 584.9 260.0" stroke="#e4d830" stroke-width="1.5" opacity="0.68"/>
<path d="M528.8 265.5A28 8.8 0 0 1 584.8 265.5" stroke="#e4d830" stroke-width="1.5" opacity="0.68"/>
<path d="M528.6 271.0A28 8.8 0 0 1 584.6 271.0" stroke="#a8e038" stroke-width="1.4" opacity="0.60"/>
<path d="M528.5 276.5A28 8.8 0 0 1 584.5 276.5" stroke="#c0e034" stroke-width="1.4" opacity="0.60"/>
<path d="M528.4 282.0A28 8.8 0 0 1 584.4 282.0" stroke="#90dc40" stroke-width="1.4" opacity="0.60"/>
<path d="M528.2 287.5A28 8.8 0 0 1 584.2 287.5" stroke="#a8e038" stroke-width="1.4" opacity="0.60"/>
<path d="M528.1 293.0A28 8.8 0 0 1 584.1 293.0" stroke="#a8e038" stroke-width="1.4" opacity="0.60"/>
<path d="M528.0 298.5A28 8.8 0 0 1 584.0 298.5" stroke="#70d848" stroke-width="1.3" opacity="0.44"/>
<path d="M527.8 304.0A28 8.8 0 0 1 583.8 304.0" stroke="#70d848" stroke-width="1.3" opacity="0.44"/>
<path d="M527.7 309.5A28 8.8 0 0 1 583.7 309.5" stroke="#58d058" stroke-width="1.3" opacity="0.44"/>
<path d="M527.6 315.0A28 8.8 0 0 1 583.6 315.0" stroke="#58d058" stroke-width="1.3" opacity="0.44"/>
<path d="M527.4 320.5A28 8.8 0 0 1 583.4 320.5" stroke="#50c070" stroke-width="1.1" opacity="0.24"/>
<path d="M527.3 326.0A28 8.8 0 0 1 583.3 326.0" stroke="#48b888" stroke-width="1.1" opacity="0.24"/>
<path d="M527.2 331.5A28 8.8 0 0 1 583.2 331.5" stroke="#48b888" stroke-width="1.1" opacity="0.24"/>
<path d="M527.0 337.0A28 8.8 0 0 1 583.0 337.0" stroke="#48b888" stroke-width="1.1" opacity="0.24"/>
</g>
<path d="M525 203L555.6 208L549 408L518 403z" fill="#0a0aa6"/>
<g clip-path="url(#slice)">
<path d="M525 203L531 204L523 404L518 403z" fill="#1818c8" opacity=".7"/>
<g filter="url(#v1)">
<path d="M527 210q3 4 3 12q6 8 14 9l10 1l0 3q-14 1-22-5q-6-6-6-18z" fill="#f0d828" opacity=".9"/>
<path d="M526.5 209q2 2 2 8l2 8l-3 -2z" fill="#f8f060"/>
<path d="M526.0 231.0q12 5 29 3" stroke="#e8a020" stroke-width="1.7" fill="none" opacity="0.85"/>
<path d="M525.8 236.6q12 5 29 3" stroke="#e8a020" stroke-width="1.7" fill="none" opacity="0.85"/>
<path d="M525.6 242.2q12 5 29 3" stroke="#e8a020" stroke-width="1.7" fill="none" opacity="0.85"/>
<path d="M525.4 247.8q12 5 29 3" stroke="#c8d828" stroke-width="1.7" fill="none" opacity="0.85"/>
<path d="M525.2 253.4q12 5 29 3" stroke="#c8d828" stroke-width="1.7" fill="none" opacity="0.85"/>
<path d="M525.0 259.0q12 5 29 3" stroke="#c8d828" stroke-width="1.7" fill="none" opacity="0.85"/>
<path d="M524.8 264.6q12 5 29 3" stroke="#c8d828" stroke-width="1.7" fill="none" opacity="0.85"/>
<path d="M524.6 270.2q12 5 29 3" stroke="#48c858" stroke-width="1.7" fill="none" opacity="0.85"/>
<path d="M524.4 275.8q12 5 29 3" stroke="#48c858" stroke-width="1.7" fill="none" opacity="0.85"/>
<path d="M524.2 281.4q12 5 29 3" stroke="#48c858" stroke-width="1.7" fill="none" opacity="0.85"/>
<path d="M524.0 287.0q12 5 29 3" stroke="#48c858" stroke-width="1.7" fill="none" opacity="0.5"/>
<path d="M523.8 292.6q12 5 29 3" stroke="#48c858" stroke-width="1.7" fill="none" opacity="0.5"/>
<path d="M523.6 298.2q12 5 29 3" stroke="#48c858" stroke-width="1.7" fill="none" opacity="0.5"/>
<path d="M523.4 303.8q12 5 29 3" stroke="#48c858" stroke-width="1.7" fill="none" opacity="0.5"/>
<path d="M523.2 309.4q12 5 29 3" stroke="#48c858" stroke-width="1.7" fill="none" opacity="0.5"/>
<path d="M523.0 315.0q12 5 29 3" stroke="#48c858" stroke-width="1.7" fill="none" opacity="0.5"/>
</g>
<path d="M524.0 290.0q4 6 28 6" stroke="#c8c8e0" stroke-width=".8" fill="none" opacity=".55"/>
<path d="M523.8 295.7q4 6 28 6" stroke="#c8c8e0" stroke-width=".8" fill="none" opacity=".55"/>
<path d="M523.7 301.4q4 6 28 6" stroke="#c8c8e0" stroke-width=".8" fill="none" opacity=".55"/>
<path d="M523.5 307.1q4 6 28 6" stroke="#c8c8e0" stroke-width=".8" fill="none" opacity=".55"/>
<path d="M523.3 312.8q4 6 28 6" stroke="#c8c8e0" stroke-width=".8" fill="none" opacity=".55"/>
<path d="M523.1 318.5q4 6 28 6" stroke="#c8c8e0" stroke-width=".8" fill="none" opacity=".55"/>
<path d="M523.0 324.2q4 6 28 6" stroke="#c8c8e0" stroke-width=".8" fill="none" opacity=".55"/>
<path d="M522.8 329.9q4 6 28 6" stroke="#c8c8e0" stroke-width=".8" fill="none" opacity=".55"/>
<path d="M522.6 335.6q4 6 28 6" stroke="#c8c8e0" stroke-width=".8" fill="none" opacity=".55"/>
<path d="M522.5 341.3q4 6 28 6" stroke="#c8c8e0" stroke-width=".8" fill="none" opacity=".55"/>
<path d="M522.3 347.0q4 6 28 6" stroke="#c8c8e0" stroke-width=".8" fill="none" opacity=".55"/>
<path d="M522.1 352.7q4 6 28 6" stroke="#c8c8e0" stroke-width=".8" fill="none" opacity=".55"/>
<path d="M521.9 358.4q4 6 28 6" stroke="#c8c8e0" stroke-width=".8" fill="none" opacity=".55"/>
<path d="M521.8 364.1q4 6 28 6" stroke="#c8c8e0" stroke-width=".8" fill="none" opacity=".55"/>
<path d="M521.6 369.8q4 6 28 6" stroke="#c8c8e0" stroke-width=".8" fill="none" opacity=".55"/>
<path d="M521.4 375.5q4 6 28 6" stroke="#c8c8e0" stroke-width=".8" fill="none" opacity=".55"/>
<path d="M521.3 381.2q4 6 28 6" stroke="#c8c8e0" stroke-width=".8" fill="none" opacity=".55"/>
<path d="M521.1 386.9q4 6 28 6" stroke="#c8c8e0" stroke-width=".8" fill="none" opacity=".55"/>
<path d="M520.9 392.6q4 6 28 6" stroke="#c8c8e0" stroke-width=".8" fill="none" opacity=".55"/>
<path d="M520.8 398.3q4 6 28 6" stroke="#c8c8e0" stroke-width=".8" fill="none" opacity=".55"/>
<path d="M520 380q12 4 30 3" stroke="#40c060" stroke-width="2" fill="none" opacity=".6"/>
<path d="M520 372q12 4 30 3" stroke="#30b070" stroke-width="1.4" fill="none" opacity=".5"/>
</g>
<path d="M525 203L555.6 208" stroke="#f01818" stroke-width="1.5"/>
<path d="M555.6 208L549 408" stroke="#3030d8" stroke-width="1" opacity=".8"/>
<g filter="url(#v1)"><ellipse cx="527" cy="398" rx="12" ry="6" fill="#50d048" opacity=".75"/><ellipse cx="525" cy="397.5" rx="9" ry="4.6" fill="#f4c020"/><ellipse cx="524" cy="397" rx="7.4" ry="3.6" fill="#f07818"/><path d="M518 396q6-3 13 0" stroke="#ffd060" stroke-width=".8" fill="none"/></g>
<g filter="url(#v2)"><ellipse cx="575" cy="342" rx="11" ry="6" fill="#58d050" opacity=".65"/><ellipse cx="574" cy="352" rx="8" ry="4" fill="#58d050" opacity=".4"/></g>
<g filter="url(#v1)"><ellipse cx="576" cy="340" rx="6" ry="3" fill="#f4c828"/><ellipse cx="577" cy="340" rx="3.4" ry="1.8" fill="#f06018"/></g>
<g filter="url(#v2)"><ellipse cx="582" cy="375" rx="5" ry="9" fill="#48c868" opacity=".35"/><ellipse cx="580" cy="300" rx="5" ry="10" fill="#60c870" opacity=".3"/></g>
<g filter="url(#v1)" fill="none">
<path d="M530.0 216.0A28 8.8 0 0 0 586.0 216.0" stroke="#f8b428" stroke-width="2.0" opacity="0.9"/>
<path d="M572.0 223.6A28 8.8 0 0 0 586.0 216.0" stroke="#ff8a10" stroke-width="2.0" opacity="0.75"/>
<path d="M529.8 221.5A28 8.8 0 0 0 585.8 221.5" stroke="#f8b428" stroke-width="2.0" opacity="0.9"/>
<path d="M571.8 229.1A28 8.8 0 0 0 585.8 221.5" stroke="#ff8a10" stroke-width="2.0" opacity="0.69"/>
<path d="M529.7 227.0A28 8.8 0 0 0 585.7 227.0" stroke="#f0bc28" stroke-width="2.0" opacity="0.9"/>
<path d="M571.7 234.6A28 8.8 0 0 0 585.7 227.0" stroke="#ff8a10" stroke-width="2.0" opacity="0.63"/>
<path d="M529.6 232.5A28 8.8 0 0 0 585.6 232.5" stroke="#f8a820" stroke-width="2.0" opacity="0.9"/>
<path d="M571.6 240.1A28 8.8 0 0 0 585.6 232.5" stroke="#ff8a10" stroke-width="2.0" opacity="0.57"/>
<path d="M529.4 238.0A28 8.8 0 0 0 585.4 238.0" stroke="#f0bc28" stroke-width="2.0" opacity="0.9"/>
<path d="M571.4 245.6A28 8.8 0 0 0 585.4 238.0" stroke="#ff8a10" stroke-width="2.0" opacity="0.51"/>
<path d="M529.3 243.5A28 8.8 0 0 0 585.3 243.5" stroke="#e4d830" stroke-width="1.9" opacity="0.85"/>
<path d="M571.3 251.1A28 8.8 0 0 0 585.3 243.5" stroke="#ff8a10" stroke-width="1.9" opacity="0.45"/>
<path d="M529.2 249.0A28 8.8 0 0 0 585.2 249.0" stroke="#e4d830" stroke-width="1.9" opacity="0.85"/>
<path d="M571.2 256.6A28 8.8 0 0 0 585.2 249.0" stroke="#ff8a10" stroke-width="1.9" opacity="0.39"/>
<path d="M529.0 254.5A28 8.8 0 0 0 585.0 254.5" stroke="#e4d830" stroke-width="1.9" opacity="0.85"/>
<path d="M571.0 262.1A28 8.8 0 0 0 585.0 254.5" stroke="#ff8a10" stroke-width="1.9" opacity="0.33"/>
<path d="M528.9 260.0A28 8.8 0 0 0 584.9 260.0" stroke="#e4d830" stroke-width="1.9" opacity="0.85"/>
<path d="M570.9 267.6A28 8.8 0 0 0 584.9 260.0" stroke="#ff8a10" stroke-width="1.9" opacity="0.27"/>
<path d="M528.8 265.5A28 8.8 0 0 0 584.8 265.5" stroke="#e4d830" stroke-width="1.9" opacity="0.85"/>
<path d="M570.8 273.1A28 8.8 0 0 0 584.8 265.5" stroke="#ff8a10" stroke-width="1.9" opacity="0.21"/>
<path d="M528.6 271.0A28 8.8 0 0 0 584.6 271.0" stroke="#a8e038" stroke-width="1.8" opacity="0.75"/>
<path d="M570.6 278.6A28 8.8 0 0 0 584.6 271.0" stroke="#ff8a10" stroke-width="1.8" opacity="0.15"/>
<path d="M528.5 276.5A28 8.8 0 0 0 584.5 276.5" stroke="#c0e034" stroke-width="1.8" opacity="0.75"/>
<path d="M570.5 284.1A28 8.8 0 0 0 584.5 276.5" stroke="#ff8a10" stroke-width="1.8" opacity="0.09"/>
<path d="M528.4 282.0A28 8.8 0 0 0 584.4 282.0" stroke="#90dc40" stroke-width="1.8" opacity="0.75"/>
<path d="M570.4 289.6A28 8.8 0 0 0 584.4 282.0" stroke="#ff8a10" stroke-width="1.8" opacity="0.03"/>
<path d="M528.2 287.5A28 8.8 0 0 0 584.2 287.5" stroke="#a8e038" stroke-width="1.8" opacity="0.75"/>
<path d="M570.2 295.1A28 8.8 0 0 0 584.2 287.5" stroke="#ff8a10" stroke-width="1.8" opacity="0.00"/>
<path d="M528.1 293.0A28 8.8 0 0 0 584.1 293.0" stroke="#a8e038" stroke-width="1.8" opacity="0.75"/>
<path d="M570.1 300.6A28 8.8 0 0 0 584.1 293.0" stroke="#ff8a10" stroke-width="1.8" opacity="0.00"/>
<path d="M528.0 298.5A28 8.8 0 0 0 584.0 298.5" stroke="#70d848" stroke-width="1.6" opacity="0.55"/>
<path d="M570.0 306.1A28 8.8 0 0 0 584.0 298.5" stroke="#ff8a10" stroke-width="1.6" opacity="0.00"/>
<path d="M527.8 304.0A28 8.8 0 0 0 583.8 304.0" stroke="#70d848" stroke-width="1.6" opacity="0.55"/>
<path d="M569.8 311.6A28 8.8 0 0 0 583.8 304.0" stroke="#ff8a10" stroke-width="1.6" opacity="0.00"/>
<path d="M527.7 309.5A28 8.8 0 0 0 583.7 309.5" stroke="#58d058" stroke-width="1.6" opacity="0.55"/>
<path d="M569.7 317.1A28 8.8 0 0 0 583.7 309.5" stroke="#ff8a10" stroke-width="1.6" opacity="0.00"/>
<path d="M527.6 315.0A28 8.8 0 0 0 583.6 315.0" stroke="#58d058" stroke-width="1.6" opacity="0.55"/>
<path d="M569.6 322.6A28 8.8 0 0 0 583.6 315.0" stroke="#ff8a10" stroke-width="1.6" opacity="0.00"/>
<path d="M527.4 320.5A28 8.8 0 0 0 583.4 320.5" stroke="#50c070" stroke-width="1.4" opacity="0.3"/>
<path d="M569.4 328.1A28 8.8 0 0 0 583.4 320.5" stroke="#ff8a10" stroke-width="1.4" opacity="0.00"/>
<path d="M527.3 326.0A28 8.8 0 0 0 583.3 326.0" stroke="#48b888" stroke-width="1.4" opacity="0.3"/>
<path d="M569.3 333.6A28 8.8 0 0 0 583.3 326.0" stroke="#ff8a10" stroke-width="1.4" opacity="0.00"/>
<path d="M527.2 331.5A28 8.8 0 0 0 583.2 331.5" stroke="#48b888" stroke-width="1.4" opacity="0.3"/>
<path d="M569.2 339.1A28 8.8 0 0 0 583.2 331.5" stroke="#ff8a10" stroke-width="1.4" opacity="0.00"/>
<path d="M527.0 337.0A28 8.8 0 0 0 583.0 337.0" stroke="#48b888" stroke-width="1.4" opacity="0.3"/>
<path d="M569.0 344.6A28 8.8 0 0 0 583.0 337.0" stroke="#ff8a10" stroke-width="1.4" opacity="0.00"/>
</g>
<g filter="url(#v2)"><path d="M579 224q9 10 7 40l-5 0q2-26-5-36z" fill="#ff9210" opacity=".5"/></g>
<ellipse cx="579.5" cy="186.5" rx="3.4" ry="3" fill="#e09a9a"/>
<path d="M547.6 181.2L577 185.4L582 180V183.6L577 189.2L547.6 184.8z" fill="#1e7ce4"/>
<path d="M549 141L554 137.6L560 139L582 151V180L577 185.6L547.6 181.6z" fill="#e00000"/>
<path d="M577 152.5L582 151V180L577 185.6z" fill="#c40000"/>
<path d="M549 141L554 137.6L560 139L582 151L577 152.5z" fill="#e80808"/>
<rect x="355.5" y="92.5" width="20" height="20" rx="3" fill="#f2f2f2" stroke="#6c6c6c" stroke-width="1.1"/>
<rect x="379.5" y="92.5" width="20" height="20" rx="3" fill="#f2f2f2" stroke="#6c6c6c" stroke-width="1.1"/>
<rect x="403.5" y="92.5" width="20" height="20" rx="3" fill="#f2f2f2" stroke="#6c6c6c" stroke-width="1.1"/>
<rect x="427.5" y="92.5" width="20" height="20" rx="3" fill="#f2f2f2" stroke="#6c6c6c" stroke-width="1.1"/>
<rect x="451.5" y="92.5" width="20" height="20" rx="3" fill="#f2f2f2" stroke="#6c6c6c" stroke-width="1.1"/>
<rect x="475.5" y="92.5" width="20" height="20" rx="3" fill="#f2f2f2" stroke="#6c6c6c" stroke-width="1.1"/>
<rect x="499.5" y="92.5" width="20" height="20" rx="3" fill="#f2f2f2" stroke="#6c6c6c" stroke-width="1.1"/>
<rect x="523.5" y="92.5" width="20" height="20" rx="3" fill="#f2f2f2" stroke="#6c6c6c" stroke-width="1.1"/>
<rect x="547.5" y="92.5" width="20" height="20" rx="3" fill="#f2f2f2" stroke="#6c6c6c" stroke-width="1.1"/>
<circle cx="365.5" cy="99.2" r="4.9" fill="#fff" stroke="#111" stroke-width="1.7"/><path d="M363.1 103.6L363.7 106.2H367.3L367.9 103.6" fill="#fff" stroke="#111" stroke-width="1.2"/><rect x="363.5" y="106.2" width="4" height="3.2" fill="#5a5a5a"/><path d="M364.2 109.4h2.6l-1.3 1.6z" fill="#444"/>
<circle cx="387.2" cy="99.4" r="3.9" fill="#fafafa" stroke="#3a3a3a" stroke-width="1.4"/><path d="M390.2 102.4L395.6 108" stroke="#3a3a3a" stroke-width="2.3" stroke-linecap="round"/>
<path d="M409.2 99.2A5.5 5.5 0 1 1 408.4 105.2" fill="none" stroke="#3a3a3a" stroke-width="2"/><path d="M406.2 96.8L412 97.2L409.4 102.2z" fill="#3a3a3a"/><circle cx="413.8" cy="102.6" r="1.5" fill="#2a2a2a"/>
<g fill="#2b8cff" stroke="#2b8cff"><path d="M437.5 96v4M437.5 105v4M431.5 102.5h4M439.5 102.5h4" stroke-width="1.6" fill="none"/><path d="M437.5 93.6l2.9 3.8h-5.8zM437.5 111.4l2.9-3.8h-5.8zM428.6 102.5l3.8-2.9v5.8zM446.4 102.5l-3.8-2.9v5.8z" stroke="none"/></g>
<path d="M461 101A4 4 0 0 1 469 101z" fill="#8a8a8a"/><path d="M454.5 95.5L459.5 94L468 105.5L464.5 109L459 106.5z" fill="#1e7cf0"/><path d="M453 101.3H470" stroke="#111" stroke-width=".9" stroke-dasharray="1.2 .9"/>
<g stroke="#f06868" stroke-width=".7" fill="none"><path d="M478.5 95.5L493 103.5M478.5 95.5L492 105.5M478.5 95.5L490.5 107.5M478.5 95.5L488.8 109M478.5 95.5L487 110M478.5 95.5L485 110.5"/></g>
<path d="M502.5 103Q505 95.5 513.5 97.2" fill="none" stroke="#8a8a8a" stroke-width="2"/><path d="M512.6 94.2L518 99.6L511.4 100.6z" fill="#8a8a8a"/><text x="510.3" y="110.6" font-size="10.5" font-weight="bold" fill="#2b7cf0" text-anchor="middle">3D</text>
<path d="M526.5 102.3C526.5 98.5 530 96.5 534 96.5C538 96.5 541 98.8 541 102C541 105.5 538 108.2 534.5 108.2C532.5 108.2 532.6 106.2 531 106C529 105.8 526.5 105.5 526.5 102.3z" fill="#2a2a2a"/><g fill="#f2f2f2"><circle cx="530" cy="100.8" r="1.2"/><circle cx="533.3" cy="98.8" r="1.2"/><circle cx="537" cy="99.3" r="1.2"/><circle cx="538.8" cy="102.3" r="1.2"/><circle cx="536.6" cy="105.3" r="1.2"/><ellipse cx="530" cy="104" rx="1.5" ry="1"/></g>
<path d="M549.3 102.5Q557.5 93.5 565.7 102.5Q557.5 111.5 549.3 102.5z" fill="#2a2a2a"/><circle cx="557.5" cy="102.3" r="3" fill="#f2f2f2"/><circle cx="557.5" cy="102.3" r="1.5" fill="#2a2a2a"/>
</svg>
<div class="abs hatch" style="left:0;top:466px;width:700px;height:59px"></div>
<div class="dbtn" style="left:15px;top:476px;width:90px;height:35px;line-height:33px;text-align:left;padding-left:16px">Analysis<svg class="abs" style="left:64px;top:15px" width="9" height="6"><path d="M1 5L4.5 1.5L8 5" fill="none" stroke="#a8a8a8" stroke-width="1.3"/></svg></div>
<div class="abs" style="left:7px;top:514.5px;font-weight:bold;font-size:8.3px;color:#fff;line-height:10px;white-space:nowrap;text-shadow:0 0 1px #000,1px 1px 0 #222">Capture v3.4 - Cref_3_4_0094_bolt_TFM [2021/11/05 - 19:24]</div>
<div class="btn" style="left:441px;top:477px;width:39px;height:33px"></div>
<div class="btn" style="left:491px;top:477px;width:39px;height:33px"></div>
<div class="btn" style="left:540px;top:477px;width:39px;height:33px"></div>
<div class="btn" style="left:589px;top:477px;width:39px;height:33px"></div>
<div class="dbtn" style="left:637px;top:477px;width:52px;height:32px;line-height:31px">End</div>
<svg class="abs" style="left:430px;top:470px" width="210" height="50" viewBox="430 470 210 50">
<rect x="452.8" y="487.6" width="17.6" height="13.6" rx="1" fill="none" stroke="#686868" stroke-width="1.7"/><path d="M452.8 495.3H470.4M463.3 487.6V495.3" stroke="#686868" stroke-width="1.4"/>
<rect x="503.2" y="486.2" width="14.2" height="16.6" fill="#e6e4de" stroke="#686868" stroke-width="1.6"/><path d="M506.5 487.5V485.2H508.8Q510.3 482.6 511.8 485.2H514.1V487.5z" fill="#686868"/><path d="M506 491h7M506 493.3h5M506 495.6h7M506 497.9h5" stroke="#8a8a8a" stroke-width=".9"/>
<path d="M551.8 489.6H555.4L556.6 487.4H562.6L563.8 489.6H567.2V499.6H551.8z" fill="#686868"/><circle cx="559.6" cy="494.6" r="3.4" fill="#ecebe6"/><circle cx="559.6" cy="494.6" r="1.9" fill="#686868"/>
<path d="M601.4 486.2H612.6L615.8 489.4V501.4H601.4z" fill="#686868"/><rect x="604.6" y="486.2" width="6.6" height="4.8" fill="#e6e4de"/><rect x="608.6" y="487" width="1.6" height="3.2" fill="#686868"/><rect x="603.8" y="493.8" width="9.6" height="6.2" fill="#e6e4de"/><path d="M605 496h7.2M605 498h7.2" stroke="#686868" stroke-width=".8"/>
</svg>
</div></body></html>
